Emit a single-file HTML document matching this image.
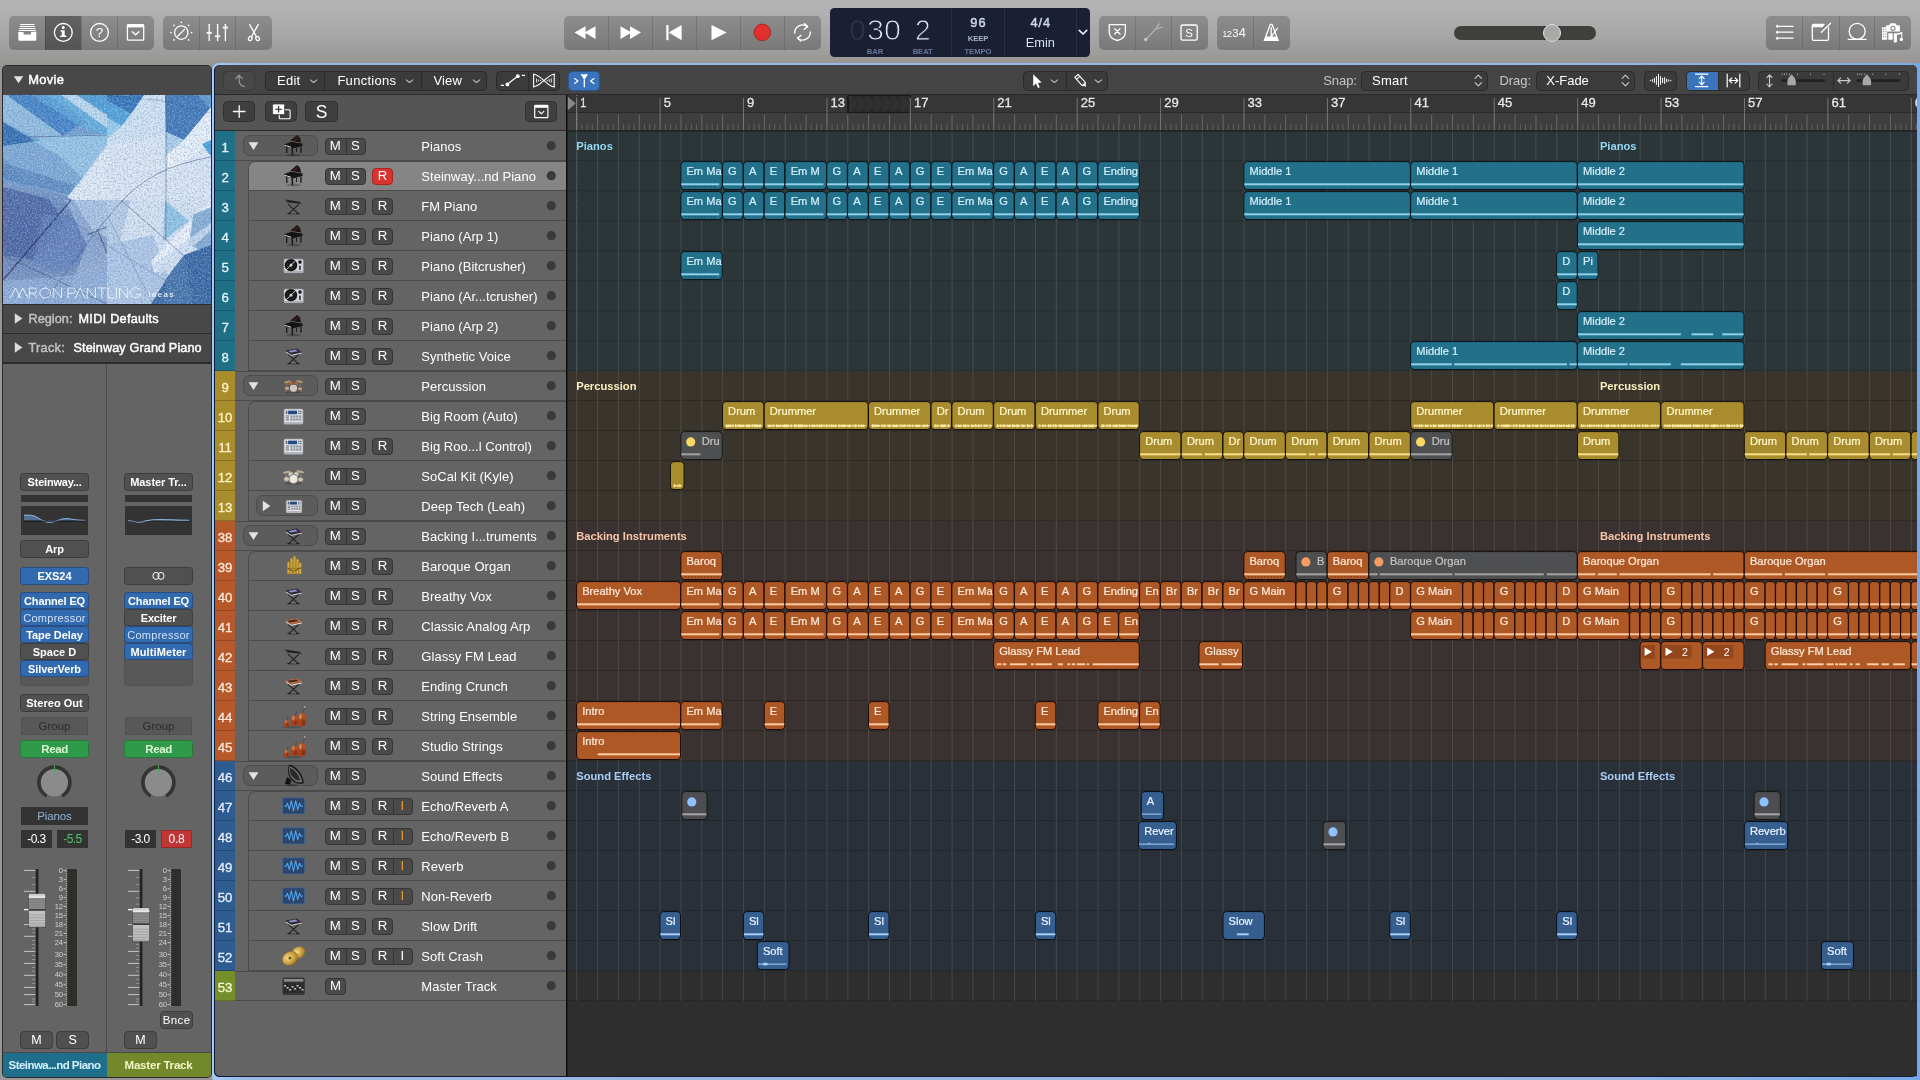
<!DOCTYPE html>
<html><head><meta charset="utf-8"><title>Logic Pro X</title>
<style>
html,body{margin:0;padding:0}
body{width:1920px;height:1080px;overflow:hidden;background:#979797;font-family:"Liberation Sans",sans-serif;position:relative;color:#fff}
div{position:absolute;box-sizing:border-box}
svg{display:block}
svg text{font-family:"Liberation Sans",sans-serif}
.tb{background:linear-gradient(#b3b3b3 0%,#b1b1b1 18%,#a6a6a6 58%,#9a9998 90%,#969695 100%)}
.grp{background:linear-gradient(rgba(0,0,0,.20),rgba(0,0,0,.235));border-radius:5px;overflow:hidden}
.sep{background:rgba(0,0,0,.13);width:1px;top:0;height:100%}
.dk{background:#3c3c3c;border:1px solid #2a2a2a;border-radius:4.5px}
.txt{white-space:nowrap;line-height:1}
</style></head>
<body>
<div style="left:0;top:0;width:1920px;height:1080px;will-change:transform">
<div class="tb" style="left:0;top:0;width:1920px;height:64px"></div>
<div class="grp" style="left:9px;top:16px;width:145px;height:33.5px;"><div class="sep" style="left:36px"></div><div style="left:36px;top:0;width:36px;height:100%;background:rgba(0,0,0,.30)"></div><div class="sep" style="left:72px"></div><div class="sep" style="left:108px"></div><svg style="position:absolute;left:0px;top:0px;overflow:visible" width="145" height="33.5" viewBox="0 0 145 33.5" ><g fill="#fff"><rect x="11.2" y="8" width="14.2" height="1"/><rect x="10.7" y="10" width="15.2" height="1"/><rect x="10.2" y="12" width="16.2" height="1"/><rect x="9.7" y="14" width="17.2" height="1"/><path d="M9.3 16 h5.2 v1.4 q0 1 1 1 h5.6 q1 0 1 -1 v-1.6 h5.2 v7.4 q0 1.5 -1.5 1.5 h-15 q-1.5 0 -1.5 -1.5 z"/></g><circle cx="54.3" cy="16.4" r="8.9" stroke="#fff" fill="none" stroke-width="1.3" stroke-linecap="round" stroke-linejoin="round" stroke-width="1.4"/><g fill="#fff"><circle cx="54.2" cy="11.6" r="1.5"/><path d="M51.6 14.3 h4.1 v5.2 h1.6 v1.5 h-6.1 v-1.5 h1.6 v-3.7 h-1.2 z"/></g><circle cx="90.5" cy="16.4" r="8.9" stroke="#fff" fill="none" stroke-width="1.3" stroke-linecap="round" stroke-linejoin="round" stroke-width="1.2"/><text x="90.5" y="21.2" font-size="13.5" fill="#fff" text-anchor="middle">?</text><rect x="118.4" y="8.6" width="16.3" height="15.6" rx="1" stroke="#fff" fill="none" stroke-width="1.3" stroke-linecap="round" stroke-linejoin="round" stroke-width="1.3"/><rect x="118.4" y="8.2" width="16.3" height="3.2" fill="#fff"/><path d="M123.3 15.7 l3.3 3 l3.3 -3" stroke="#fff" fill="none" stroke-width="1.3" stroke-linecap="round" stroke-linejoin="round" stroke-width="1.2"/></svg></div>
<div class="grp" style="left:163px;top:16px;width:109px;height:33.5px;"><div class="sep" style="left:36px"></div><div class="sep" style="left:72px"></div><svg style="position:absolute;left:0px;top:0px;overflow:visible" width="109" height="33.5" viewBox="0 0 109 33.5" ><circle cx="18.3" cy="16.6" r="6.7" stroke="#fff" fill="none" stroke-width="1.3" stroke-linecap="round" stroke-linejoin="round" stroke-width="1.2"/><path d="M14.700000000000001 20.200000000000003 L21.5 13.400000000000002" stroke="#fff" fill="none" stroke-width="1.3" stroke-linecap="round" stroke-linejoin="round" stroke-width="1.2"/><circle cx="18.30" cy="6.30" r="0.85" fill="#fff"/><circle cx="25.58" cy="9.32" r="0.85" fill="#fff"/><circle cx="28.60" cy="16.60" r="0.85" fill="#fff"/><circle cx="25.58" cy="23.88" r="0.85" fill="#fff"/><circle cx="11.02" cy="23.88" r="0.85" fill="#fff"/><circle cx="8.00" cy="16.60" r="0.85" fill="#fff"/><circle cx="11.02" cy="9.32" r="0.85" fill="#fff"/><path d="M46.2 8.3 V24.6" stroke="#fff" fill="none" stroke-width="1.3" stroke-linecap="round" stroke-linejoin="round" stroke-width="1.2"/><rect x="43.6" y="15.9" width="5.2" height="1.8" fill="#fff"/><path d="M54.6 8.3 V24.6" stroke="#fff" fill="none" stroke-width="1.3" stroke-linecap="round" stroke-linejoin="round" stroke-width="1.2"/><rect x="52.0" y="19.400000000000002" width="5.2" height="1.8" fill="#fff"/><path d="M62.4 8.3 V24.6" stroke="#fff" fill="none" stroke-width="1.3" stroke-linecap="round" stroke-linejoin="round" stroke-width="1.2"/><rect x="59.8" y="10.7" width="5.2" height="1.8" fill="#fff"/><path d="M86.7 8.6 L93.6 21 M95.2 8.6 L88.3 21" stroke="#fff" fill="none" stroke-width="1.3" stroke-linecap="round" stroke-linejoin="round" stroke-width="1.2"/><ellipse cx="87.3" cy="22.5" rx="1.7" ry="2.2" transform="rotate(25 87.3 22.5)" stroke="#fff" fill="none" stroke-width="1.3" stroke-linecap="round" stroke-linejoin="round" stroke-width="1.1"/><ellipse cx="94.6" cy="22.5" rx="1.7" ry="2.2" transform="rotate(-25 94.6 22.5)" stroke="#fff" fill="none" stroke-width="1.3" stroke-linecap="round" stroke-linejoin="round" stroke-width="1.1"/></svg></div>
<div class="grp" style="left:564px;top:16px;width:257px;height:33.5px;"><div class="sep" style="left:44px"></div><div class="sep" style="left:88px"></div><div class="sep" style="left:132px"></div><div class="sep" style="left:176px"></div><div class="sep" style="left:220px"></div><svg style="position:absolute;left:0px;top:0px;overflow:visible" width="257" height="33.5" viewBox="0 0 257 33.5" ><g fill="#fff"><path d="M21.5 10.3 V23 L10.5 16.6z M31.5 10.3 V23 L20.5 16.6z"/><path d="M56.5 10.3 V23 L67.5 16.6z M66 10.3 V23 L77 16.6z"/><rect x="102.3" y="9" width="2.2" height="15.2"/><path d="M117.6 9 V24.2 L104.8 16.6z"/><path d="M147.5 9 V24.2 L162.7 16.6z"/></g><circle cx="198.3" cy="16.4" r="8.3" fill="#e2302b" stroke="#a11f1c" stroke-width="0.8"/><path d="M230.7 17.2 a7.9 7.9 0 0 1 12.6 -6.6 M246.4 15.8 a7.9 7.9 0 0 1 -12.6 6.6" stroke="#fff" fill="none" stroke-width="1.3" stroke-linecap="round" stroke-linejoin="round" stroke-width="1.15"/><path d="M240.3 7.6 l3.4 3 l-3.6 2.6 M236.8 25 l-3.4 -3 l3.6 -2.6" stroke="#fff" fill="none" stroke-width="1.3" stroke-linecap="round" stroke-linejoin="round" stroke-width="1.15"/></svg></div>
<div style="left:830px;top:8px;width:260px;height:49px;background:#1b1f33;border-radius:4.5px;overflow:hidden"><div style="left:121px;top:1px;width:1px;height:47px;background:#2b3046"></div><div style="left:174px;top:1px;width:1px;height:47px;background:#2b3046"></div><div style="left:246px;top:1px;width:1px;height:47px;background:#2b3046"></div><svg style="position:absolute;left:0px;top:0px;overflow:visible" width="260" height="49" viewBox="0 0 260 49" ><text x="19.3" y="32.3" font-size="29.5" fill="#2b3044" textLength="16.5" lengthAdjust="spacingAndGlyphs" stroke="#1b1f33" stroke-width="1.1" paint-order="stroke">0</text><text x="37" y="32.3" font-size="29.5" fill="#dbe7f7" textLength="34" lengthAdjust="spacingAndGlyphs" stroke="#1b1f33" stroke-width="1.0" paint-order="fill stroke">30</text><text x="85" y="32.3" font-size="29.5" fill="#dbe7f7" textLength="15.6" lengthAdjust="spacingAndGlyphs" stroke="#1b1f33" stroke-width="1.0" paint-order="fill stroke">2</text><g font-size="7.6" font-weight="bold" fill="#67799c" text-anchor="middle"><text x="45" y="45.7">BAR</text><text x="92.7" y="45.7">BEAT</text><text x="148" y="45.7">TEMPO</text></g><text x="148" y="32.8" font-size="7.6" font-weight="bold" fill="#a9b8d2" text-anchor="middle">KEEP</text><text x="148.5" y="18.6" font-size="12.8" fill="#ccd9ee" stroke="#ccd9ee" stroke-width=".45" text-anchor="middle" letter-spacing="1.1">96</text><text x="210.8" y="18.6" font-size="12.8" fill="#ccd9ee" stroke="#ccd9ee" stroke-width=".45" text-anchor="middle" letter-spacing="1">4/4</text><text x="210.3" y="38.8" font-size="12.8" fill="#d4e0f2" text-anchor="middle">Emin</text><path d="M249.3 22.3 l3.7 3.7 l3.7 -3.7" stroke="#e6ecf7" stroke-width="1.7" fill="none" stroke-linecap="round" stroke-linejoin="round"/></svg></div>
<div class="grp" style="left:1099px;top:16px;width:109px;height:33.5px;"><div class="sep" style="left:36px"></div><div class="sep" style="left:72px"></div><svg style="position:absolute;left:0px;top:0px;overflow:visible" width="109" height="33.5" viewBox="0 0 109 33.5" ><path d="M10.2 8.7 h16.2 v7.4 q0 6.6 -8.1 8.4 q-8.1 -1.8 -8.1 -8.4z" stroke="#fff" fill="none" stroke-width="1.3" stroke-linecap="round" stroke-linejoin="round" stroke-width="1.2"/><path d="M15.6 12.6 l5.4 5.4 m0 -5.4 l-5.4 5.4" stroke="#fff" fill="none" stroke-width="1.3" stroke-linecap="round" stroke-linejoin="round" stroke-width="1.2"/><g stroke="#fff" stroke-opacity=".42" fill="none" stroke-width="1.2" stroke-linecap="round"><path d="M47.5 22.8 L56.6 13.2 M56.6 13.2 L60.3 7.9 M56.6 13.2 L63.2 11"/><circle cx="46.7" cy="23.6" r="1.2" fill="#fff" fill-opacity=".42"/></g><rect x="82" y="9" width="16.2" height="15.2" rx="1.6" stroke="#fff" fill="none" stroke-width="1.3" stroke-linecap="round" stroke-linejoin="round" stroke-width="1.2"/><text x="90.1" y="21" font-size="11.5" fill="#fff" text-anchor="middle">S</text></svg></div>
<div class="grp" style="left:1217px;top:16px;width:73px;height:33.5px;"><div class="sep" style="left:36px"></div><svg style="position:absolute;left:0px;top:0px;overflow:visible" width="73" height="33.5" viewBox="0 0 73 33.5" ><g fill="#fff"><text x="5.4" y="20.9" font-size="8.3">1</text><text x="9.8" y="20.9" font-size="9.6">2</text><text x="15.2" y="20.9" font-size="11.2">3</text><text x="21.8" y="20.9" font-size="12.8">4</text></g><path d="M47.3 24.4 L53.3 8.4 h1.8 L61.2 24.4z" stroke="#fff" fill="none" stroke-width="1.3" stroke-linecap="round" stroke-linejoin="round" stroke-width="1.15"/><path d="M48.9 20.4 h10.8 l1.5 4 h-13.9z" fill="#fff"/><path d="M54.2 20.3 V11.6 M54.4 20.3 L60.6 12.2" stroke="#fff" fill="none" stroke-width="1.3" stroke-linecap="round" stroke-linejoin="round" stroke-width="1.1"/></svg></div>
<div style="left:1454px;top:25.7px;width:142px;height:14.3px;background:#3f3f3c;border-radius:7.2px"></div>
<div style="left:1543px;top:23.7px;width:18.4px;height:18.4px;background:#a9a9a9;border-radius:50%;border:1.3px solid #e9e9e9;box-shadow:0 0 1px rgba(0,0,0,.5)"></div>
<div class="grp" style="left:1766px;top:16px;width:145px;height:33.5px;"><div class="sep" style="left:36.4px"></div><div class="sep" style="left:72.5px"></div><div class="sep" style="left:108.4px"></div><svg style="position:absolute;left:0px;top:0px;overflow:visible" width="145" height="33.5" viewBox="0 0 145 33.5" ><path d="M13 10.3 H27" stroke="#fff" fill="none" stroke-width="1.3" stroke-linecap="round" stroke-linejoin="round" stroke-width="1.25"/><path d="M11.3 8.600000000000001 l1.7 1.7 l-1.7 1.7 l-1.7 -1.7z" fill="#fff"/><path d="M13 16.2 H27" stroke="#fff" fill="none" stroke-width="1.3" stroke-linecap="round" stroke-linejoin="round" stroke-width="1.25"/><path d="M11.3 14.5 l1.7 1.7 l-1.7 1.7 l-1.7 -1.7z" fill="#fff"/><path d="M13 22.2 H27" stroke="#fff" fill="none" stroke-width="1.3" stroke-linecap="round" stroke-linejoin="round" stroke-width="1.25"/><path d="M11.3 20.5 l1.7 1.7 l-1.7 1.7 l-1.7 -1.7z" fill="#fff"/><path d="M62.5 11.5 V23 q0 1.3 -1.3 1.3 H47.6 q-1.3 0 -1.3 -1.3 V9.6 q0 -1.3 1.3 -1.3 H58" stroke="#fff" fill="none" stroke-width="1.3" stroke-linecap="round" stroke-linejoin="round" stroke-width="1.25"/><path d="M46.3 8.4 h12.4 l-2.2 2.8 h-10.2z" fill="#fff"/><path d="M55.4 16.2 L64.6 7.3" stroke="#fff" fill="none" stroke-width="1.3" stroke-linecap="round" stroke-linejoin="round" stroke-width="1.9"/><circle cx="91.2" cy="15.3" r="8" stroke="#fff" fill="none" stroke-width="1.3" stroke-linecap="round" stroke-linejoin="round" stroke-width="1.2"/><path d="M82.2 23.4 H100" stroke="#fff" fill="none" stroke-width="1.3" stroke-linecap="round" stroke-linejoin="round" stroke-width="1.2"/><g fill="#fff"><path d="M116 11.2 h5.2 v12.6 h-5.2z M122.3 17.3 h4.4 v6.5 h-4.4z M127.8 17.3 h2.6 v6.5 h-2.6z"/><path d="M121 9.3 h2.2 l1.4 -2 h4.7 l1.4 2 h2.2 q1 0 1 1 v5.2 h-13.9 v-5.2 q0 -1 1 -1z"/><circle cx="129.3" cy="25" r="1.7"/><circle cx="135.3" cy="23.4" r="1.7"/><path d="M130.1 17.5 l6.2 -1.5 v7.6 h-1 v-5.6 l-4.3 1.1 v6 h-0.9z"/></g><circle cx="126.9" cy="12.3" r="2.1" fill="none" stroke="#8a8a8a" stroke-width="1.1"/><g fill="#8a8a8a"><rect x="116.8" y="12.5" width="1" height="1.3"/><rect x="116.8" y="15" width="1" height="1.3"/><rect x="116.8" y="17.5" width="1" height="1.3"/><rect x="116.8" y="20" width="1" height="1.3"/><rect x="119.4" y="12.5" width="1" height="1.3"/><rect x="119.4" y="15" width="1" height="1.3"/><rect x="119.4" y="17.5" width="1" height="1.3"/><rect x="119.4" y="20" width="1" height="1.3"/></g></svg></div>
<div style="left:1.9px;top:64.6px;width:209.8px;height:1013px;background:#2a2a2a;border-radius:5px"></div>
<div style="left:3px;top:65.5px;width:208px;height:1011.5px;background:#646464;border-radius:4px;overflow:hidden"><div style="left:0;top:0;width:208px;height:29px;background:#484848"></div><div style="left:0;top:29px;width:208px;height:1px;background:#2b2b2b"></div><div style="left:0;top:238.5px;width:208px;height:59px;background:#484848"></div><div style="left:0;top:238.5px;width:208px;height:1px;background:#2b2b2b"></div><div style="left:0;top:267.7px;width:208px;height:1.3px;background:#2b2b2b"></div><div style="left:0;top:296.5px;width:208px;height:1.5px;background:#2b2b2b"></div><div style="left:103px;top:298px;width:1px;height:690px;background:#4c4c4c"></div><div style="left:0;top:987px;width:103.5px;height:25px;background:#1f6f8c"></div><div style="left:103.5px;top:987px;width:105px;height:25px;background:#72882a"></div><div style="left:0;top:986px;width:208px;height:1px;background:#4a4a4a"></div></div>
<svg style="position:absolute;left:13px;top:75px;overflow:visible" width="12" height="10" viewBox="0 0 12 10" ><path d="M0.8 1.3 h9.5 l-4.75 7z" fill="#e4e4e4"/></svg>
<div class="txt" style="left:28.30px;top:69.60px;height:20px;line-height:20px;font-size:12.9px;letter-spacing:0.278px;color:#fff;-webkit-text-stroke:.45px #fff;">Movie</div>
<svg style="position:absolute;left:3px;top:95px;overflow:visible" width="208" height="209" viewBox="0 0 208 209" style="position:absolute;left:3px;top:95px;overflow:hidden"><defs><filter id="mvn" x="0" y="0" width="100%" height="100%"><feTurbulence type="fractalNoise" baseFrequency="0.62" numOctaves="2" seed="4" result="n"/><feColorMatrix in="n" type="matrix" values="0 0 0 0 .93  0 0 0 0 .96  0 0 0 0 1  2.6 0 0 0 -1.1"/></filter><filter id="mvn2" x="0" y="0" width="100%" height="100%"><feTurbulence type="fractalNoise" baseFrequency="0.58" numOctaves="2" seed="11" result="n"/><feColorMatrix in="n" type="matrix" values="0 0 0 0 0.1  0 0 0 0 0.2  0 0 0 0 0.42  0 2.6 0 0 -1.12"/></filter><filter id="mvb" x="-5%" y="-5%" width="110%" height="110%"><feGaussianBlur stdDeviation="0.55"/></filter><linearGradient id="mvg1" x1="0" y1="0" x2="0" y2="1"><stop offset="0" stop-color="#7599c8"/><stop offset=".5" stop-color="#5a73ab"/><stop offset="1" stop-color="#8aa6d0"/></linearGradient><clipPath id="mvc"><rect width="208" height="209"/></clipPath></defs><g clip-path="url(#mvc)"><g filter="url(#mvb)"><rect width="208" height="209" fill="#dbe7f5"/><polygon points="0,0 104,0 104,50 78,85 62,105 0,105" fill="#6b9fd0" opacity="1"/><polygon points="0,0 16,0 64,40 40,47 0,27" fill="#8ebbdf" opacity="1"/><polygon points="0,27 32,46 0,51" fill="#2d6bb0" opacity="1"/><polygon points="4,0 32,0 76,30 60,41" fill="#3f80c4" opacity="1"/><polygon points="32,0 60,0 104,28 104,40 78,31" fill="#5fabdc" opacity="1"/><polygon points="28,0 44,0 84,27 76,31" fill="#4f98d4" opacity="0.8"/><polygon points="58,0 73,0 104,20 104,33" fill="#b9d9ef" opacity="1"/><polygon points="75,0 104,0 104,19" fill="#489ad6" opacity="1"/><polygon points="64,40 104,39 104,52 80,84 32,47" fill="#92c3e4" opacity="1"/><polygon points="32,47 58,62 80,84 62,105 40,105 0,62 0,51" fill="#7aa6d4" opacity="1"/><polygon points="0,62 40,105 0,105" fill="#6d95c8" opacity="1"/><polygon points="0,68 72,90 66,100 0,84" fill="#4f80bb" opacity="0.7"/><polygon points="104,50 104,105 62,105 79,84" fill="#dfeaf6" opacity="1"/><polygon points="104,0 141,0 128,19 104,6" fill="#2f72b9" opacity="1"/><polygon points="104,6 128,19 119,31 104,23" fill="#4b9fd9" opacity="1"/><polygon points="104,23 119,31 104,46" fill="#93cce9" opacity="1"/><polygon points="128,19 142,0 162,0 163,40 104,50 104,44 119,31" fill="#cfe3f3" opacity="1"/><polygon points="162,0 208,0 208,13 181,45 163,37" fill="#3b74b6" opacity="1"/><polygon points="195,0 208,0 208,14 200,6" fill="#5f93cd" opacity="1"/><polygon points="208,12 208,46 165,80 163,56 181,45" fill="#e9f1fa" opacity="1"/><polygon points="199,49 208,45 208,61" fill="#4a9dd6" opacity="1"/><polygon points="163,37 181,45 163,60" fill="#a7cde9" opacity="1"/><polygon points="0,86 58,99 70,105 106,105 106,209 0,209" fill="url(#mvg1)"/><polygon points="0,92 46,104 62,130 30,165 0,160" fill="#465e9e" opacity="0.85"/><polygon points="40,120 80,120 96,160 50,178 30,165" fill="#5f7dba" opacity="0.7"/><polygon points="70,105 104,105 104,142 90,136" fill="#adc6e5" opacity="1"/><polygon points="62,105 104,105 104,209 60,209 84,150" fill="#a5bfe0" opacity="0.6"/><polygon points="0,186 104,178 104,209 0,209" fill="#8dabd7" opacity="0.8"/><polygon points="104,105 208,105 208,150 180,160 165,181 148,209 104,209" fill="#d5e2f2" opacity="1"/><polygon points="104,150 150,140 165,181 148,209 104,209" fill="#9fbce0" opacity="0.75"/><polygon points="104,105 128,105 116,150 104,150" fill="#9db9dd" opacity="0.55"/><polygon points="162,105 186,126 160,146" fill="#8fc4e4" opacity="1"/><polygon points="208,105 208,128 152,178 148,166" fill="#eef4fb" opacity="0.9"/><polygon points="190,120 208,112 208,160 186,150" fill="#6a98c8" opacity="0.8"/><polygon points="181,160 208,150 208,209 148,209 165,181" fill="#33639f" opacity="1"/><polygon points="165,181 181,160 190,209 160,209" fill="#4676ad" opacity="0.7"/><polygon points="150,170 208,128 208,136 156,180" fill="#cfe0f2" opacity="0.8"/></g><g stroke="#1f3a66" fill="none" opacity=".6" stroke-width=".8"><path d="M25,42 L104,40"/><path d="M163,0 V146"/><path d="M208,62 Q150,72 120,105 T40,209"/><path d="M0,160 L104,209"/><path d="M104,0 L160,6 L208,18" opacity=".6"/><path d="M118,105 L180,160"/><path d="M104,120 L150,209" opacity=".6"/><path d="M40,105 L104,150" opacity=".6"/><path d="M104,150 L170,190" opacity=".6"/></g><path d="M68,105 L0,185" stroke="#1a2f5c" stroke-width="1.5" opacity=".75" fill="none"/><path d="M94,134 L104,158 M84,140 L104,132" stroke="#1a2f5c" stroke-width="1.2" opacity=".6" fill="none"/><rect width="208" height="209" filter="url(#mvn)" opacity=".36"/><rect width="208" height="209" filter="url(#mvn2)" opacity=".42"/><g stroke="#fff" stroke-width=".75" fill="none" stroke-linecap="round" stroke-linejoin="round" opacity=".95"><path d="M7.5,203 L11.7,193 L15.9,203M13.7,203 L17.9,193 L22.1,203M23.5,203 V193 H27.1 a2.6 2.6 0 0 1 0 5.2 H23.5 M26.9,198.2 L30.1,203M37.1,193 a4.6 5 0 1 0 .01 0zM43.9,203 V193 L50.9,203 V193M56.4,203 V193 H60.199999999999996 a2.7 2.7 0 0 1 0 5.4 H56.4M62.6,203 L66.8,193 L71.0,203M72.8,203 V193 L79.8,203 V193M81.39999999999999,193 H88.99999999999999 M85.19999999999999,193 V203M90.6,193 V203 H96.0M97.6,193 V203M100.19999999999999,203 V193 L107.19999999999999,203 V193M117.99999999999999,195 a4.7 5 0 1 0 .6 4.2 h-4" transform="translate(7.5 0) scale(1.175 1) translate(-7.5 0)"/></g><text x="145.5" y="202.4" font-size="8" fill="#fff" textLength="25" lengthAdjust="spacing">ideas</text></g></svg>
<svg style="position:absolute;left:14px;top:312px;overflow:visible" width="10" height="14" viewBox="0 0 10 14" ><path d="M.8 1.2 v10.6 l7.6 -5.3z" fill="#dcdcdc"/></svg>
<svg style="position:absolute;left:14px;top:341px;overflow:visible" width="10" height="14" viewBox="0 0 10 14" ><path d="M.8 1.2 v10.6 l7.6 -5.3z" fill="#dcdcdc"/></svg>
<div class="txt" style="left:28.50px;top:308.60px;height:20px;line-height:20px;font-size:12.7px;letter-spacing:0.033px;color:#c2c2c2;-webkit-text-stroke:.45px #c2c2c2;">Region:</div>
<div class="txt" style="left:78.50px;top:308.60px;height:20px;line-height:20px;font-size:12.7px;letter-spacing:0.275px;color:#fff;-webkit-text-stroke:.45px #fff;">MIDI Defaults</div>
<div class="txt" style="left:28.50px;top:337.60px;height:20px;line-height:20px;font-size:12.7px;letter-spacing:0.282px;color:#c2c2c2;-webkit-text-stroke:.45px #c2c2c2;">Track:</div>
<div class="txt" style="left:73.50px;top:337.60px;height:20px;line-height:20px;font-size:12.7px;letter-spacing:0.102px;color:#fff;-webkit-text-stroke:.45px #fff;">Steinway Grand Piano</div>
<div style="left:20px;top:473px;width:69px;height:18.3px;background:#505050;border:1px solid #3d3d3d;border-radius:3.2px"></div><div class="txt" style="left:27.50px;top:472.35px;height:20px;line-height:20px;font-size:11px;font-weight:bold;letter-spacing:-0.185px;color:#fff;">Steinway...</div>
<div style="left:21px;top:495px;width:67px;height:7px;background:#333"></div>
<div style="left:21px;top:506px;width:67px;height:29px;background:#333"></div>
<div style="left:124px;top:473px;width:69px;height:18.3px;background:#505050;border:1px solid #3d3d3d;border-radius:3.2px"></div><div class="txt" style="left:130.25px;top:472.35px;height:20px;line-height:20px;font-size:11px;font-weight:bold;letter-spacing:-0.081px;color:#fff;">Master Tr...</div>
<div style="left:125px;top:495px;width:67px;height:7px;background:#333"></div>
<div style="left:125px;top:506px;width:67px;height:29px;background:#333"></div>
<svg style="position:absolute;left:21px;top:506px;overflow:visible" width="67" height="29" viewBox="0 0 67 29" ><path d="M3 9.2 C9 9 12 9 16 11.3 C21 14.2 24 16.6 29.5 16.4 C36 16 40 12 46 12.6 C52 13.2 56 14.3 64 14.3 L64 14.6 L3 14.6z" fill="#5f86b4" opacity=".75"/><path d="M3 9.2 C9 9 12 9 16 11.3 C21 14.2 24 16.6 29.5 16.4 C36 16 40 12 46 12.6 C52 13.2 56 14.3 64 14.3" stroke="#8db2dc" stroke-width="1" fill="none"/><path d="M3 15.2 H64" stroke="#111" stroke-width=".8"/></svg>
<svg style="position:absolute;left:125px;top:506px;overflow:visible" width="67" height="29" viewBox="0 0 67 29" ><path d="M3 14.7 C8 14.7 10 16.2 14 16.2 C19 16.2 21 14 28 13.7 C40 13.2 50 14.2 64 14.2" stroke="#8db2dc" stroke-width="1.1" fill="none"/><path d="M3 15.4 H64" stroke="#111" stroke-width=".6" opacity=".6"/></svg>
<div style="left:20px;top:540.4px;width:69px;height:17.6px;background:#505050;border:1px solid #3d3d3d;border-radius:3.2px"></div><div class="txt" style="left:45.25px;top:539.40px;height:20px;line-height:20px;font-size:11px;font-weight:bold;letter-spacing:-0.148px;color:#fff;">Arp</div>
<div style="left:20px;top:567.3px;width:69px;height:17.6px;background:#326aaf;border:1px solid #284d84;border-radius:3.2px"></div><div class="txt" style="left:37.50px;top:566.30px;height:20px;line-height:20px;font-size:11px;font-weight:bold;letter-spacing:-0.049px;color:#fff;">EXS24</div>
<div style="left:124px;top:567.3px;width:69px;height:17.6px;background:#505050;border:1px solid #3d3d3d;border-radius:3.2px"></div>
<svg style="position:absolute;left:124px;top:567.3px;overflow:visible" width="69" height="17.6" viewBox="0 0 69 17.6" ><ellipse cx="32" cy="8.9" rx="3.1" ry="3.5" stroke="#fff" stroke-width="1" fill="none"/><ellipse cx="37" cy="8.9" rx="3.1" ry="3.5" stroke="#fff" stroke-width="1" fill="none"/></svg>
<div style="left:20px;top:592px;width:69px;height:94px;background:#585858;border:1px solid #525252;border-radius:3.5px"></div>
<div style="left:124px;top:592px;width:69px;height:94px;background:#585858;border:1px solid #525252;border-radius:3.5px"></div>
<div style="left:20px;top:592.3px;width:69px;height:17.2px;background:#326aaf;border:1px solid #284d84;border-radius:3.5px"></div><div class="txt" style="left:24.00px;top:591.10px;height:20px;line-height:20px;font-size:11px;font-weight:bold;letter-spacing:-0.134px;color:#fff;">Channel EQ</div>
<div style="left:20px;top:609.3px;width:69px;height:17.2px;background:#326aaf;border:1px solid #284d84;border-radius:3.5px"></div><div class="txt" style="left:23.25px;top:608.10px;height:20px;line-height:20px;font-size:11px;letter-spacing:0.260px;color:#cfe1f7;">Compressor</div>
<div style="left:20px;top:626.3px;width:69px;height:17.2px;background:#326aaf;border:1px solid #284d84;border-radius:3.5px"></div><div class="txt" style="left:26.25px;top:625.10px;height:20px;line-height:20px;font-size:11px;font-weight:bold;letter-spacing:-0.076px;color:#fff;">Tape Delay</div>
<div style="left:20px;top:643.3px;width:69px;height:17.2px;background:#505050;border:1px solid #3d3d3d;border-radius:3.5px"></div><div class="txt" style="left:32.75px;top:642.10px;height:20px;line-height:20px;font-size:11px;font-weight:bold;letter-spacing:0.013px;color:#fff;">Space D</div>
<div style="left:20px;top:660.3px;width:69px;height:17.2px;background:#326aaf;border:1px solid #284d84;border-radius:3.5px"></div><div class="txt" style="left:28.00px;top:659.10px;height:20px;line-height:20px;font-size:11px;font-weight:bold;letter-spacing:-0.081px;color:#fff;">SilverVerb</div>
<div style="left:124px;top:592.3px;width:69px;height:17.2px;background:#326aaf;border:1px solid #284d84;border-radius:3.5px"></div><div class="txt" style="left:128.00px;top:591.10px;height:20px;line-height:20px;font-size:11px;font-weight:bold;letter-spacing:-0.134px;color:#fff;">Channel EQ</div>
<div style="left:124px;top:609.3px;width:69px;height:17.2px;background:#505050;border:1px solid #3d3d3d;border-radius:3.5px"></div><div class="txt" style="left:140.75px;top:608.10px;height:20px;line-height:20px;font-size:11px;font-weight:bold;letter-spacing:-0.170px;color:#fff;">Exciter</div>
<div style="left:124px;top:626.3px;width:69px;height:17.2px;background:#326aaf;border:1px solid #284d84;border-radius:3.5px"></div><div class="txt" style="left:127.25px;top:625.10px;height:20px;line-height:20px;font-size:11px;letter-spacing:0.260px;color:#cfe1f7;">Compressor</div>
<div style="left:124px;top:643.3px;width:69px;height:17.2px;background:#326aaf;border:1px solid #284d84;border-radius:3.5px"></div><div class="txt" style="left:130.50px;top:642.10px;height:20px;line-height:20px;font-size:11px;font-weight:bold;letter-spacing:0.100px;color:#fff;">MultiMeter</div>
<div style="left:20px;top:694px;width:69px;height:17.6px;background:#505050;border:1px solid #3d3d3d;border-radius:3.2px"></div><div class="txt" style="left:26.25px;top:693.00px;height:20px;line-height:20px;font-size:11px;font-weight:bold;letter-spacing:0.027px;color:#fff;">Stereo Out</div>
<div style="left:21px;top:717px;width:67px;height:17.6px;background:#585858;border:1px solid #505050;border-radius:0px"></div><div class="txt" style="left:38.50px;top:716.00px;height:20px;line-height:20px;font-size:11.5px;letter-spacing:0.008px;color:#2b2b2b;">Group</div>
<div style="left:20px;top:740.4px;width:69px;height:17.2px;background:#2f9a4a;border:1px solid #257a3a;border-radius:3.2px"></div><div class="txt" style="left:41.25px;top:739.20px;height:20px;line-height:20px;font-size:11.5px;font-weight:bold;letter-spacing:-0.405px;color:#dbf6d0;">Read</div>
<div style="left:125px;top:717px;width:67px;height:17.6px;background:#585858;border:1px solid #505050;border-radius:0px"></div><div class="txt" style="left:142.50px;top:716.00px;height:20px;line-height:20px;font-size:11.5px;letter-spacing:0.008px;color:#2b2b2b;">Group</div>
<div style="left:124px;top:740.4px;width:69px;height:17.2px;background:#2f9a4a;border:1px solid #257a3a;border-radius:3.2px"></div><div class="txt" style="left:145.25px;top:739.20px;height:20px;line-height:20px;font-size:11.5px;font-weight:bold;letter-spacing:-0.405px;color:#dbf6d0;">Read</div>
<svg style="position:absolute;left:0px;top:0px;overflow:visible" width="212" height="1080" viewBox="0 0 212 1080" style="position:absolute;left:0;top:0;pointer-events:none"><circle cx="54.4" cy="782.6" r="14" fill="#8b8b8b"/><path d="M46.65 796.02 A15.5 15.5 0 1 1 62.15 796.02" stroke="#343434" stroke-width="3.7" fill="none"/><path d="M54.4 765.3000000000001 V773.1" stroke="#3fae57" stroke-width="1"/><circle cx="158.4" cy="782.6" r="14" fill="#8b8b8b"/><path d="M150.65 796.02 A15.5 15.5 0 1 1 166.15 796.02" stroke="#343434" stroke-width="3.7" fill="none"/><path d="M158.4 765.3000000000001 V773.1" stroke="#3fae57" stroke-width="1"/></svg>
<div style="left:21px;top:807px;width:67px;height:17.8px;background:#333;border-radius:0px"></div><div class="txt" style="left:37.25px;top:806.10px;height:20px;line-height:20px;font-size:11.5px;letter-spacing:-0.110px;color:#8fb3d6;">Pianos</div>
<div style="left:21px;top:830px;width:31px;height:17.8px;background:#333;border-radius:0px"></div><div class="txt" style="left:27.25px;top:829.10px;height:20px;line-height:20px;font-size:12px;letter-spacing:-0.544px;color:#fff;">-0.3</div>
<div style="left:57px;top:830px;width:31px;height:17.8px;background:#333;border-radius:0px"></div><div class="txt" style="left:63.25px;top:829.10px;height:20px;line-height:20px;font-size:12px;letter-spacing:-0.544px;color:#52c268;">-5.5</div>
<div style="left:125px;top:830px;width:31px;height:17.8px;background:#333;border-radius:0px"></div><div class="txt" style="left:131.25px;top:829.10px;height:20px;line-height:20px;font-size:12px;letter-spacing:-0.544px;color:#fff;">-3.0</div>
<div style="left:161px;top:830px;width:31px;height:17.8px;background:#c23535;border:1px solid #9a2828;border-radius:0px"></div><div class="txt" style="left:168.50px;top:829.10px;height:20px;line-height:20px;font-size:12px;letter-spacing:-0.227px;color:#fff;">0.8</div>
<svg style="position:absolute;left:0px;top:0px;overflow:visible" width="212" height="1080" viewBox="0 0 212 1080" style="position:absolute;left:0;top:0"><defs><linearGradient id="fcap" x1="0" y1="0" x2="0" y2="1"><stop offset="0" stop-color="#c9c9c9"/><stop offset=".1" stop-color="#dcdcdc"/><stop offset=".14" stop-color="#8a8a8a"/><stop offset=".46" stop-color="#8e8e8e"/><stop offset=".5" stop-color="#c2c2c2"/><stop offset=".9" stop-color="#bdbdbd"/><stop offset="1" stop-color="#9a9a9a"/></linearGradient></defs><rect x="35.8" y="869" width="2.6" height="137" fill="#222"/><rect x="24" y="869.9" width="11.3" height="1" fill="#c4c4c4"/><rect x="24" y="890.8" width="11.3" height="1" fill="#c4c4c4"/><rect x="24" y="908.95" width="11.3" height="1.3" fill="#fff"/><rect x="24" y="924.1" width="11.3" height="1" fill="#c4c4c4"/><rect x="24" y="935.8" width="11.3" height="1" fill="#c4c4c4"/><rect x="24" y="950.9" width="11.3" height="1" fill="#c4c4c4"/><rect x="24" y="962.9" width="11.3" height="1" fill="#c4c4c4"/><rect x="24" y="974.8" width="11.3" height="1" fill="#c4c4c4"/><rect x="24" y="986.9" width="11.3" height="1" fill="#c4c4c4"/><rect x="24" y="994.1" width="11.3" height="1" fill="#c4c4c4"/><rect x="24" y="1004.1" width="11.3" height="1" fill="#c4c4c4"/><rect x="32" y="877.1" width="3.3" height=".9" fill="#9a9a9a"/><rect x="32" y="884.0" width="3.3" height=".9" fill="#9a9a9a"/><rect x="32" y="897.6" width="3.3" height=".9" fill="#9a9a9a"/><rect x="32" y="903.6" width="3.3" height=".9" fill="#9a9a9a"/><rect x="32" y="914.6" width="3.3" height=".9" fill="#9a9a9a"/><rect x="32" y="919.4" width="3.3" height=".9" fill="#9a9a9a"/><rect x="32" y="928.6" width="3.3" height=".9" fill="#9a9a9a"/><rect x="32" y="932.4" width="3.3" height=".9" fill="#9a9a9a"/><rect x="32" y="940.1" width="3.3" height=".9" fill="#9a9a9a"/><rect x="32" y="943.9" width="3.3" height=".9" fill="#9a9a9a"/><rect x="32" y="947.6" width="3.3" height=".9" fill="#9a9a9a"/><rect x="32" y="955.1" width="3.3" height=".9" fill="#9a9a9a"/><rect x="32" y="959.1" width="3.3" height=".9" fill="#9a9a9a"/><rect x="32" y="966.9" width="3.3" height=".9" fill="#9a9a9a"/><rect x="32" y="970.8000000000001" width="3.3" height=".9" fill="#9a9a9a"/><rect x="32" y="978.9" width="3.3" height=".9" fill="#9a9a9a"/><rect x="32" y="982.9" width="3.3" height=".9" fill="#9a9a9a"/><rect x="32" y="998.6" width="3.3" height=".9" fill="#9a9a9a"/><rect x="32" y="1001.3000000000001" width="3.3" height=".9" fill="#9a9a9a"/><rect x="67.3" y="869" width="9.7" height="137" fill="#2e2f2b"/><path d="M66.3 869 V1006" stroke="#c9c9c9" stroke-width=".9" stroke-dasharray=".9 1.1"/><text x="62.7" y="873.3000000000001" font-size="7.6" fill="#d2d2d2" text-anchor="end" letter-spacing="-.2">0</text><rect x="63.6" y="870.2" width="2.4" height=".9" fill="#c9c9c9"/><text x="62.7" y="882.3000000000001" font-size="7.6" fill="#d2d2d2" text-anchor="end" letter-spacing="-.2">3</text><rect x="63.6" y="879.2" width="2.4" height=".9" fill="#c9c9c9"/><text x="62.7" y="891.3000000000001" font-size="7.6" fill="#d2d2d2" text-anchor="end" letter-spacing="-.2">6</text><rect x="63.6" y="888.2" width="2.4" height=".9" fill="#c9c9c9"/><text x="62.7" y="900.3000000000001" font-size="7.6" fill="#d2d2d2" text-anchor="end" letter-spacing="-.2">9</text><rect x="63.6" y="897.2" width="2.4" height=".9" fill="#c9c9c9"/><text x="62.7" y="909.2" font-size="7.6" fill="#d2d2d2" text-anchor="end" letter-spacing="-.2">12</text><rect x="63.6" y="906.1" width="2.4" height=".9" fill="#c9c9c9"/><text x="62.7" y="918.3000000000001" font-size="7.6" fill="#d2d2d2" text-anchor="end" letter-spacing="-.2">15</text><rect x="63.6" y="915.2" width="2.4" height=".9" fill="#c9c9c9"/><text x="62.7" y="927.2" font-size="7.6" fill="#d2d2d2" text-anchor="end" letter-spacing="-.2">18</text><rect x="63.6" y="924.1" width="2.4" height=".9" fill="#c9c9c9"/><text x="62.7" y="936.2" font-size="7.6" fill="#d2d2d2" text-anchor="end" letter-spacing="-.2">21</text><rect x="63.6" y="933.1" width="2.4" height=".9" fill="#c9c9c9"/><text x="62.7" y="945.3000000000001" font-size="7.6" fill="#d2d2d2" text-anchor="end" letter-spacing="-.2">24</text><rect x="63.6" y="942.2" width="2.4" height=".9" fill="#c9c9c9"/><text x="62.7" y="957.1" font-size="7.6" fill="#d2d2d2" text-anchor="end" letter-spacing="-.2">30</text><rect x="63.6" y="954.0" width="2.4" height=".9" fill="#c9c9c9"/><text x="62.7" y="967.3000000000001" font-size="7.6" fill="#d2d2d2" text-anchor="end" letter-spacing="-.2">35</text><rect x="63.6" y="964.2" width="2.4" height=".9" fill="#c9c9c9"/><text x="62.7" y="977.4000000000001" font-size="7.6" fill="#d2d2d2" text-anchor="end" letter-spacing="-.2">40</text><rect x="63.6" y="974.3000000000001" width="2.4" height=".9" fill="#c9c9c9"/><text x="62.7" y="987.4000000000001" font-size="7.6" fill="#d2d2d2" text-anchor="end" letter-spacing="-.2">45</text><rect x="63.6" y="984.3000000000001" width="2.4" height=".9" fill="#c9c9c9"/><text x="62.7" y="997.4000000000001" font-size="7.6" fill="#d2d2d2" text-anchor="end" letter-spacing="-.2">50</text><rect x="63.6" y="994.3000000000001" width="2.4" height=".9" fill="#c9c9c9"/><text x="62.7" y="1007.3000000000001" font-size="7.6" fill="#d2d2d2" text-anchor="end" letter-spacing="-.2">60</text><rect x="63.6" y="1004.2" width="2.4" height=".9" fill="#c9c9c9"/><rect x="28.2" y="893.5" width="17.7" height="34.6" rx="1.6" fill="#000" opacity=".35"/><rect x="28.8" y="893.8" width="16.5" height="33.5" rx="1.3" fill="url(#fcap)"/><rect x="28.8" y="899.4" width="16.5" height="1" fill="#6f6f6f" opacity=".55"/><rect x="28.8" y="914.5" width="16.5" height="1" fill="#8a8a8a" opacity=".5"/><rect x="28.8" y="902.0" width="16.5" height="1" fill="#6f6f6f" opacity=".55"/><rect x="28.8" y="917.2" width="16.5" height="1" fill="#8a8a8a" opacity=".5"/><rect x="28.8" y="904.6" width="16.5" height="1" fill="#6f6f6f" opacity=".55"/><rect x="28.8" y="919.9" width="16.5" height="1" fill="#8a8a8a" opacity=".5"/><rect x="28.8" y="907.2" width="16.5" height="1" fill="#6f6f6f" opacity=".55"/><rect x="28.8" y="922.6" width="16.5" height="1" fill="#8a8a8a" opacity=".5"/><rect x="28.8" y="909.1999999999999" width="16.5" height="1.5" fill="#2c2c2c"/><rect x="28.8" y="896.4" width="16.5" height="1.4" fill="#e9e9e9"/><rect x="139.8" y="869" width="2.6" height="137" fill="#222"/><rect x="128" y="869.9" width="11.3" height="1" fill="#c4c4c4"/><rect x="128" y="890.8" width="11.3" height="1" fill="#c4c4c4"/><rect x="128" y="908.95" width="11.3" height="1.3" fill="#fff"/><rect x="128" y="924.1" width="11.3" height="1" fill="#c4c4c4"/><rect x="128" y="935.8" width="11.3" height="1" fill="#c4c4c4"/><rect x="128" y="950.9" width="11.3" height="1" fill="#c4c4c4"/><rect x="128" y="962.9" width="11.3" height="1" fill="#c4c4c4"/><rect x="128" y="974.8" width="11.3" height="1" fill="#c4c4c4"/><rect x="128" y="986.9" width="11.3" height="1" fill="#c4c4c4"/><rect x="128" y="994.1" width="11.3" height="1" fill="#c4c4c4"/><rect x="128" y="1004.1" width="11.3" height="1" fill="#c4c4c4"/><rect x="136" y="877.1" width="3.3" height=".9" fill="#9a9a9a"/><rect x="136" y="884.0" width="3.3" height=".9" fill="#9a9a9a"/><rect x="136" y="897.6" width="3.3" height=".9" fill="#9a9a9a"/><rect x="136" y="903.6" width="3.3" height=".9" fill="#9a9a9a"/><rect x="136" y="914.6" width="3.3" height=".9" fill="#9a9a9a"/><rect x="136" y="919.4" width="3.3" height=".9" fill="#9a9a9a"/><rect x="136" y="928.6" width="3.3" height=".9" fill="#9a9a9a"/><rect x="136" y="932.4" width="3.3" height=".9" fill="#9a9a9a"/><rect x="136" y="940.1" width="3.3" height=".9" fill="#9a9a9a"/><rect x="136" y="943.9" width="3.3" height=".9" fill="#9a9a9a"/><rect x="136" y="947.6" width="3.3" height=".9" fill="#9a9a9a"/><rect x="136" y="955.1" width="3.3" height=".9" fill="#9a9a9a"/><rect x="136" y="959.1" width="3.3" height=".9" fill="#9a9a9a"/><rect x="136" y="966.9" width="3.3" height=".9" fill="#9a9a9a"/><rect x="136" y="970.8000000000001" width="3.3" height=".9" fill="#9a9a9a"/><rect x="136" y="978.9" width="3.3" height=".9" fill="#9a9a9a"/><rect x="136" y="982.9" width="3.3" height=".9" fill="#9a9a9a"/><rect x="136" y="998.6" width="3.3" height=".9" fill="#9a9a9a"/><rect x="136" y="1001.3000000000001" width="3.3" height=".9" fill="#9a9a9a"/><rect x="171.3" y="869" width="9.7" height="137" fill="#2e2f2b"/><path d="M170.3 869 V1006" stroke="#c9c9c9" stroke-width=".9" stroke-dasharray=".9 1.1"/><text x="166.7" y="873.3000000000001" font-size="7.6" fill="#d2d2d2" text-anchor="end" letter-spacing="-.2">0</text><rect x="167.6" y="870.2" width="2.4" height=".9" fill="#c9c9c9"/><text x="166.7" y="882.3000000000001" font-size="7.6" fill="#d2d2d2" text-anchor="end" letter-spacing="-.2">3</text><rect x="167.6" y="879.2" width="2.4" height=".9" fill="#c9c9c9"/><text x="166.7" y="891.3000000000001" font-size="7.6" fill="#d2d2d2" text-anchor="end" letter-spacing="-.2">6</text><rect x="167.6" y="888.2" width="2.4" height=".9" fill="#c9c9c9"/><text x="166.7" y="900.3000000000001" font-size="7.6" fill="#d2d2d2" text-anchor="end" letter-spacing="-.2">9</text><rect x="167.6" y="897.2" width="2.4" height=".9" fill="#c9c9c9"/><text x="166.7" y="909.2" font-size="7.6" fill="#d2d2d2" text-anchor="end" letter-spacing="-.2">12</text><rect x="167.6" y="906.1" width="2.4" height=".9" fill="#c9c9c9"/><text x="166.7" y="918.3000000000001" font-size="7.6" fill="#d2d2d2" text-anchor="end" letter-spacing="-.2">15</text><rect x="167.6" y="915.2" width="2.4" height=".9" fill="#c9c9c9"/><text x="166.7" y="927.2" font-size="7.6" fill="#d2d2d2" text-anchor="end" letter-spacing="-.2">18</text><rect x="167.6" y="924.1" width="2.4" height=".9" fill="#c9c9c9"/><text x="166.7" y="936.2" font-size="7.6" fill="#d2d2d2" text-anchor="end" letter-spacing="-.2">21</text><rect x="167.6" y="933.1" width="2.4" height=".9" fill="#c9c9c9"/><text x="166.7" y="945.3000000000001" font-size="7.6" fill="#d2d2d2" text-anchor="end" letter-spacing="-.2">24</text><rect x="167.6" y="942.2" width="2.4" height=".9" fill="#c9c9c9"/><text x="166.7" y="957.1" font-size="7.6" fill="#d2d2d2" text-anchor="end" letter-spacing="-.2">30</text><rect x="167.6" y="954.0" width="2.4" height=".9" fill="#c9c9c9"/><text x="166.7" y="967.3000000000001" font-size="7.6" fill="#d2d2d2" text-anchor="end" letter-spacing="-.2">35</text><rect x="167.6" y="964.2" width="2.4" height=".9" fill="#c9c9c9"/><text x="166.7" y="977.4000000000001" font-size="7.6" fill="#d2d2d2" text-anchor="end" letter-spacing="-.2">40</text><rect x="167.6" y="974.3000000000001" width="2.4" height=".9" fill="#c9c9c9"/><text x="166.7" y="987.4000000000001" font-size="7.6" fill="#d2d2d2" text-anchor="end" letter-spacing="-.2">45</text><rect x="167.6" y="984.3000000000001" width="2.4" height=".9" fill="#c9c9c9"/><text x="166.7" y="997.4000000000001" font-size="7.6" fill="#d2d2d2" text-anchor="end" letter-spacing="-.2">50</text><rect x="167.6" y="994.3000000000001" width="2.4" height=".9" fill="#c9c9c9"/><text x="166.7" y="1007.3000000000001" font-size="7.6" fill="#d2d2d2" text-anchor="end" letter-spacing="-.2">60</text><rect x="167.6" y="1004.2" width="2.4" height=".9" fill="#c9c9c9"/><rect x="132.20000000000002" y="907.7" width="17.7" height="34.6" rx="1.6" fill="#000" opacity=".35"/><rect x="132.8" y="908" width="16.5" height="33.5" rx="1.3" fill="url(#fcap)"/><rect x="132.8" y="913.6" width="16.5" height="1" fill="#6f6f6f" opacity=".55"/><rect x="132.8" y="928.7" width="16.5" height="1" fill="#8a8a8a" opacity=".5"/><rect x="132.8" y="916.2" width="16.5" height="1" fill="#6f6f6f" opacity=".55"/><rect x="132.8" y="931.4" width="16.5" height="1" fill="#8a8a8a" opacity=".5"/><rect x="132.8" y="918.8" width="16.5" height="1" fill="#6f6f6f" opacity=".55"/><rect x="132.8" y="934.1" width="16.5" height="1" fill="#8a8a8a" opacity=".5"/><rect x="132.8" y="921.4" width="16.5" height="1" fill="#6f6f6f" opacity=".55"/><rect x="132.8" y="936.8" width="16.5" height="1" fill="#8a8a8a" opacity=".5"/><rect x="132.8" y="923.4" width="16.5" height="1.5" fill="#2c2c2c"/><rect x="132.8" y="910.6" width="16.5" height="1.4" fill="#e9e9e9"/></svg>
<div style="left:160.4px;top:1011px;width:32.4px;height:17.6px;background:#505050;border:1px solid #3d3d3d;border-radius:4px"></div><div class="txt" style="left:162.85px;top:1010.00px;height:20px;line-height:20px;font-size:11.5px;letter-spacing:0.322px;color:#fff;">Bnce</div>
<div style="left:20px;top:1031px;width:32.8px;height:17.6px;background:#505050;border:1px solid #3d3d3d;border-radius:4px"></div><div class="txt" style="left:31.19px;top:1030.00px;height:20px;line-height:20px;font-size:12.5px;color:#fff;">M</div>
<div style="left:56.2px;top:1031px;width:32.8px;height:17.6px;background:#505050;border:1px solid #3d3d3d;border-radius:4px"></div><div class="txt" style="left:68.43px;top:1030.00px;height:20px;line-height:20px;font-size:12.5px;color:#fff;">S</div>
<div style="left:124px;top:1031px;width:32.8px;height:17.6px;background:#505050;border:1px solid #3d3d3d;border-radius:4px"></div><div class="txt" style="left:135.19px;top:1030.00px;height:20px;line-height:20px;font-size:12.5px;color:#fff;">M</div>
<div class="txt" style="left:8.50px;top:1054.80px;height:20px;line-height:20px;font-size:11.5px;font-weight:bold;letter-spacing:-0.533px;color:#d6f1ff;">Steinwa...nd Piano</div>
<div class="txt" style="left:124.50px;top:1054.80px;height:20px;line-height:20px;font-size:11.5px;font-weight:bold;letter-spacing:-0.193px;color:#f3f6c6;">Master Track</div>
<div style="left:212px;top:62.6px;width:1711px;height:1020px;background:linear-gradient(90deg,#a3cbf8 0%,#9ab8e6 2%,#97b5e4 80%,#7aaaea 99%,#74a8ea 100%);border-radius:7px"></div>
<div style="left:214.4px;top:64.6px;width:1703px;height:1012.2px;background:#101a30;border-radius:5.5px"></div>
<div style="left:215px;top:65.3px;width:1702px;height:1011px;background:#444;border-radius:5px;overflow:hidden"><div style="left:0;top:28.9px;width:1702px;height:1.3px;background:#2a2a2a"></div><div style="left:0;top:30.2px;width:351.3px;height:35px;background:#555"></div><div style="left:0;top:65.2px;width:351.3px;height:950px;background:#646464"></div><div style="left:0;top:64.9px;width:351.3px;height:1.1px;background:#2b2b2b"></div><div style="left:351px;top:30px;width:1.5px;height:990px;background:#0b0b0b"></div></div>
<div style="left:223px;top:70.5px;width:32.3px;height:20px;background:#484848;border:1px solid #3a3a3a;border-radius:4.5px"></div><svg style="position:absolute;left:223px;top:70.5px;overflow:visible" width="32" height="20" viewBox="0 0 32 20" ><path d="M16 4.4 C16 11 16 14.6 21.2 15.6 M12.8 7.6 L16 4.2 L19.2 7.6" stroke="#9a9a9a" stroke-width="1.2" fill="none" stroke-linecap="round" stroke-linejoin="round"/></svg><div style="left:264.6px;top:70.5px;width:222.2px;height:20px;background:#3b3b3b;border:1px solid #2b2b2b;border-radius:4.5px;"><div style="left:58.5px;top:0;width:1px;height:18px;background:#2b2b2b"></div><div style="left:155.4px;top:0;width:1px;height:18px;background:#2b2b2b"></div></div><div class="txt" style="left:277.00px;top:70.70px;height:20px;line-height:20px;font-size:13px;letter-spacing:0.275px;color:#fff;">Edit</div><div class="txt" style="left:337.40px;top:70.70px;height:20px;line-height:20px;font-size:13px;letter-spacing:0.283px;color:#fff;">Functions</div><div class="txt" style="left:433.40px;top:70.70px;height:20px;line-height:20px;font-size:13px;letter-spacing:0.165px;color:#fff;">View</div><svg style="position:absolute;left:0px;top:0px;overflow:visible" width="10" height="10" viewBox="0 0 10 10" ><path d="M310.3 79.85000000000001 L313.6 82.55 L316.90000000000003 79.85000000000001" stroke="#bdbdbd" stroke-width="1.1" fill="none" stroke-linecap="round" stroke-linejoin="round"/><path d="M406.2 79.85000000000001 L409.5 82.55 L412.8 79.85000000000001" stroke="#bdbdbd" stroke-width="1.1" fill="none" stroke-linecap="round" stroke-linejoin="round"/><path d="M473.2 79.85000000000001 L476.5 82.55 L479.8 79.85000000000001" stroke="#bdbdbd" stroke-width="1.1" fill="none" stroke-linecap="round" stroke-linejoin="round"/></svg><div style="left:495.6px;top:70.5px;width:64.6px;height:20px;background:#3b3b3b;border:1px solid #2b2b2b;border-radius:4.5px;"><div style="left:31px;top:0;width:1px;height:18px;background:#2b2b2b"></div></div><svg style="position:absolute;left:0px;top:0px;overflow:visible" width="10" height="10" viewBox="0 0 10 10" ><path d="M500.8 85.3 h3.2 M521.8 75.4 h3.2" stroke="#fff" stroke-width="1.2"/><path d="M507.4 84.3 L517.6 76.2" stroke="#fff" stroke-width="1.2"/><circle cx="507.4" cy="84.4" r="1.9" fill="#fff"/><circle cx="517.8" cy="76.2" r="1.9" fill="#fff"/><path d="M533.6 74 V87 M554.2 74 V87" stroke="#fff" fill="none" stroke-linecap="round" stroke-linejoin="round" stroke-width="1.1"/><path d="M533.6 74.2 C541 74.6 547 86.4 554.2 86.8 M533.6 86.8 C541 86.4 547 74.6 554.2 74.2" stroke="#fff" fill="none" stroke-linecap="round" stroke-linejoin="round" stroke-width="1.1"/><g stroke="#fff" stroke-width=".9"><path d="M536.6 78.6 v3.8 M538.6 79.6 v1.8 M540.6 79.9 v1.2 M547.2 79.9 v1.2 M549.2 79.2 v2.6 M551.2 78.4 v4.2"/></g></svg><div style="left:568.3px;top:70.5px;width:32px;height:20px;background:#3a74bd;border:1px solid #2b568f;border-radius:4.5px"></div><svg style="position:absolute;left:0px;top:0px;overflow:visible" width="10" height="10" viewBox="0 0 10 10" ><path d="M574.6 78.6 l3.4 2.4 l-3.4 2.4 M594 78.6 l-3.4 2.4 l3.4 2.4" stroke="#fff" fill="none" stroke-linecap="round" stroke-linejoin="round" stroke-width="1.2"/><path d="M584.3 80 V86.8" stroke="#fff" fill="none" stroke-linecap="round" stroke-linejoin="round" stroke-width="1.3"/><path d="M580.6 74.3 h7.4 l-3.7 5.6z" fill="#fff"/></svg><div style="left:1022.5px;top:70.5px;width:85.5px;height:20px;background:#3b3b3b;border:1px solid #2b2b2b;border-radius:4.5px;"><div style="left:42px;top:0;width:1px;height:18px;background:#2b2b2b"></div></div><svg style="position:absolute;left:0px;top:0px;overflow:visible" width="10" height="10" viewBox="0 0 10 10" ><path d="M1033.2 74.2 V86.2 L1036 83.6 L1038 88 L1039.8 87.2 L1037.8 82.9 L1041.6 82.6z" fill="#fff"/><path d="M1051.1000000000001 79.85000000000001 L1054.4 82.55 L1057.7 79.85000000000001" stroke="#bdbdbd" stroke-width="1.1" fill="none" stroke-linecap="round" stroke-linejoin="round"/><path d="M1095.1000000000001 79.85000000000001 L1098.4 82.55 L1101.7 79.85000000000001" stroke="#bdbdbd" stroke-width="1.1" fill="none" stroke-linecap="round" stroke-linejoin="round"/><g transform="translate(1081 81) rotate(-42)"><rect x="-2.2" y="-6.8" width="4.4" height="11" stroke="#fff" fill="none" stroke-linecap="round" stroke-linejoin="round" stroke-width="1.1"/><path d="M-2.2 -4.2 h4.4" stroke="#fff" fill="none" stroke-linecap="round" stroke-linejoin="round" stroke-width="1"/><path d="M-2.2 4.2 L0 7.6 L2.2 4.2z" fill="#fff"/></g></svg><div class="txt" style="left:1323.30px;top:70.70px;height:20px;line-height:20px;font-size:13px;letter-spacing:-0.094px;color:#c6c6c6;">Snap:</div><div style="left:1361.3px;top:70.5px;width:127px;height:20px;background:#3b3b3b;border:1px solid #2b2b2b;border-radius:4.5px;"></div><div class="txt" style="left:1372.00px;top:70.70px;height:20px;line-height:20px;font-size:13px;letter-spacing:0.266px;color:#fff;">Smart</div><div class="txt" style="left:1499.50px;top:70.70px;height:20px;line-height:20px;font-size:13px;letter-spacing:-0.057px;color:#c6c6c6;">Drag:</div><div style="left:1535.5px;top:70.5px;width:99.8px;height:20px;background:#3b3b3b;border:1px solid #2b2b2b;border-radius:4.5px;"></div><div class="txt" style="left:1546.30px;top:70.70px;height:20px;line-height:20px;font-size:13px;letter-spacing:-0.021px;color:#fff;">X-Fade</div><svg style="position:absolute;left:0px;top:0px;overflow:visible" width="10" height="10" viewBox="0 0 10 10" ><path d="M1475.1 78.3 L1478.3 75.1 L1481.5 78.3 M1475.1 82.7 L1478.3 85.9 L1481.5 82.7" stroke="#c9c9c9" stroke-width="1.15" fill="none" stroke-linecap="round" stroke-linejoin="round"/><path d="M1622.2 78.3 L1625.4 75.1 L1628.6000000000001 78.3 M1622.2 82.7 L1625.4 85.9 L1628.6000000000001 82.7" stroke="#c9c9c9" stroke-width="1.15" fill="none" stroke-linecap="round" stroke-linejoin="round"/></svg><div style="left:1644px;top:70.5px;width:32.7px;height:20px;background:#3b3b3b;border:1px solid #2b2b2b;border-radius:4.5px;"></div><svg style="position:absolute;left:0px;top:0px;overflow:visible" width="10" height="10" viewBox="0 0 10 10" ><path d="M1650.30 79.90 V81.10" stroke="#fff" stroke-width="1"/><path d="M1652.35 79.20 V81.80" stroke="#fff" stroke-width="1"/><path d="M1654.40 77.90 V83.10" stroke="#fff" stroke-width="1"/><path d="M1656.45 76.20 V84.80" stroke="#fff" stroke-width="1"/><path d="M1658.50 74.00 V87.00" stroke="#fff" stroke-width="1"/><path d="M1660.55 76.20 V84.80" stroke="#fff" stroke-width="1"/><path d="M1662.60 77.90 V83.10" stroke="#fff" stroke-width="1"/><path d="M1664.65 77.20 V83.80" stroke="#fff" stroke-width="1"/><path d="M1666.70 78.70 V82.30" stroke="#fff" stroke-width="1"/><path d="M1668.75 79.50 V81.50" stroke="#fff" stroke-width="1"/><path d="M1670.80 79.90 V81.10" stroke="#fff" stroke-width="1"/></svg><div style="left:1685.5px;top:70.5px;width:64px;height:20px;background:#3b3b3b;border:1px solid #2b2b2b;border-radius:4.5px;"><div style="left:0;top:0;width:31px;height:18px;background:#3a74bd;border-radius:3.5px 0 0 3.5px"></div><div style="left:31px;top:0;width:1px;height:18px;background:#2b2b2b"></div></div><svg style="position:absolute;left:0px;top:0px;overflow:visible" width="10" height="10" viewBox="0 0 10 10" ><path d="M1695.5 74.2 h12.4 M1695.5 86.6 h12.4" stroke="#fff" fill="none" stroke-linecap="round" stroke-linejoin="round" stroke-width="1.2"/><path d="M1701.7 76.4 V84.4 M1699.2 78.6 L1701.7 76 L1704.2 78.6 M1699.2 82.2 L1701.7 84.8 L1704.2 82.2" stroke="#fff" fill="none" stroke-linecap="round" stroke-linejoin="round" stroke-width="1.1"/><path d="M1727.2 74 V87 M1739.8 74 V87" stroke="#fff" fill="none" stroke-linecap="round" stroke-linejoin="round" stroke-width="1.2"/><path d="M1729.4 80.5 H1737.6 M1731.8 78 L1729.2 80.5 L1731.8 83 M1735.2 78 L1737.8 80.5 L1735.2 83" stroke="#fff" fill="none" stroke-linecap="round" stroke-linejoin="round" stroke-width="1.1"/></svg><div style="left:1758.3px;top:70.5px;width:150.5px;height:20px;background:#3b3b3b;border:1px solid #2b2b2b;border-radius:4.5px;"><div style="left:74px;top:0;width:1px;height:18px;background:#2b2b2b"></div></div><svg style="position:absolute;left:0px;top:0px;overflow:visible" width="10" height="10" viewBox="0 0 10 10" ><path d="M1769.5 75 V86.6 M1766.9 77.6 L1769.5 74.8 L1772.1 77.6 M1766.9 84 L1769.5 86.8 L1772.1 84" stroke="#c9c9c9" fill="none" stroke-width="1.1" stroke-linecap="round" stroke-linejoin="round"/><path d="M1838 80.6 H1850 M1840.6 78 L1837.8 80.6 L1840.6 83.2 M1847.4 78 L1850.2 80.6 L1847.4 83.2" stroke="#c9c9c9" fill="none" stroke-width="1.1" stroke-linecap="round" stroke-linejoin="round"/><rect x="1781" y="79.3" width="44" height="2.6" rx="1.3" fill="#222"/><rect x="1781.8" y="73.4" width=".9" height="1.7" fill="#9a9a9a"/><rect x="1784.0" y="73.4" width=".9" height="1.7" fill="#9a9a9a"/><rect x="1786.2" y="73.4" width=".9" height="1.7" fill="#9a9a9a"/><rect x="1789.0" y="73.4" width=".9" height="1.7" fill="#9a9a9a"/><rect x="1797.0" y="73.4" width=".9" height="1.7" fill="#9a9a9a"/><rect x="1810.0" y="73.4" width=".9" height="1.7" fill="#9a9a9a"/><rect x="1823.6" y="73.4" width=".9" height="1.7" fill="#9a9a9a"/><path d="M1791.6 74.6 C1793.0 76 1795.8 78.6 1795.8 81.4 V84.4 q0 .8 -.8 .8 H1788.1999999999998 q-.8 0 -.8 -.8 V81.4 C1787.3999999999999 78.6 1790.1999999999998 76 1791.6 74.6z" fill="#a8a8a8"/><rect x="1856.3" y="79.3" width="44" height="2.6" rx="1.3" fill="#222"/><rect x="1857.1" y="73.4" width=".9" height="1.7" fill="#9a9a9a"/><rect x="1859.3" y="73.4" width=".9" height="1.7" fill="#9a9a9a"/><rect x="1861.5" y="73.4" width=".9" height="1.7" fill="#9a9a9a"/><rect x="1864.3" y="73.4" width=".9" height="1.7" fill="#9a9a9a"/><rect x="1872.3" y="73.4" width=".9" height="1.7" fill="#9a9a9a"/><rect x="1885.3" y="73.4" width=".9" height="1.7" fill="#9a9a9a"/><rect x="1898.9" y="73.4" width=".9" height="1.7" fill="#9a9a9a"/><path d="M1866.8999999999999 74.6 C1868.3 76 1871.1 78.6 1871.1 81.4 V84.4 q0 .8 -.8 .8 H1863.4999999999998 q-.8 0 -.8 -.8 V81.4 C1862.6999999999998 78.6 1865.4999999999998 76 1866.8999999999999 74.6z" fill="#a8a8a8"/></svg>
<div style="left:223.3px;top:101.3px;width:32px;height:20.4px;background:#3f3f3f;border:1px solid #303030;border-radius:4.5px"></div><div style="left:264.5px;top:101.3px;width:32.2px;height:20.4px;background:#3f3f3f;border:1px solid #303030;border-radius:4.5px"></div><div style="left:305.3px;top:101.3px;width:32.5px;height:20.4px;background:#3f3f3f;border:1px solid #303030;border-radius:4.5px"></div><div style="left:525.3px;top:101.3px;width:32.2px;height:20.4px;background:#3f3f3f;border:1px solid #303030;border-radius:4.5px"></div><svg style="position:absolute;left:0px;top:0px;overflow:visible" width="10" height="10" viewBox="0 0 10 10" ><path d="M233.4 111.5 h11.6 M239.2 105.7 v11.6" stroke="#fff" fill="none" stroke-linecap="round" stroke-linejoin="round" stroke-width="1.3"/><rect x="279.3" y="109.8" width="10.8" height="9" rx="1" fill="none" stroke="#fff" stroke-width="1.1"/><rect x="272.6" y="104" width="12" height="10.6" rx="1.3" fill="#fff" stroke="#3f3f3f" stroke-width=".8"/><path d="M275.4 109.3 h6.4 M278.6 106.1 v6.4" stroke="#3f3f3f" stroke-width="1.25"/><rect x="534.7" y="105.3" width="13.2" height="12.4" rx=".8" stroke="#fff" fill="none" stroke-linecap="round" stroke-linejoin="round" stroke-width="1.2"/><rect x="534.7" y="105" width="13.2" height="2.8" fill="#fff"/><path d="M538.6999999999999 111.44999999999999 L541.3 113.75 L543.9 111.44999999999999" stroke="#fff" stroke-width="1.1" fill="none" stroke-linecap="round" stroke-linejoin="round"/></svg><div class="txt" style="left:315.66px;top:101.90px;height:20px;line-height:20px;font-size:17.5px;color:#fff;">S</div>
<div style="left:215px;top:131px;width:20.3px;height:30px;background:#1f6f86;border-bottom:1px solid rgba(0,0,0,.2)"></div><div class="txt" style="left:221.53px;top:137.60px;height:20px;line-height:20px;font-size:13.2px;color:#e6f5fa;-webkit-text-stroke:.3px #e6f5fa;">1</div><div style="left:235.3px;top:131px;width:331px;height:30px;border-bottom:1px solid #4b4b4b;"></div><div style="left:243.3px;top:134.7px;width:74.3px;height:21.6px;background:#5c5c5c;border:1px solid #4c4c4c;border-radius:7px"></div><div style="left:325px;top:137.6px;width:40.8px;height:17.2px;background:#4a4a4a;border:1px solid #353535;border-radius:4px;"><div style="left:19.6px;top:0;width:1px;height:15.2px;background:#353535"></div></div><div class="txt" style="left:329.80px;top:136.30px;height:20px;line-height:20px;font-size:13.2px;color:#fff;">M</div><div class="txt" style="left:351.10px;top:136.30px;height:20px;line-height:20px;font-size:13.2px;color:#fff;">S</div><div class="txt" style="left:421.30px;top:137.00px;height:20px;line-height:20px;font-size:13px;letter-spacing:0.040px;color:#fff;">Pianos</div><div style="left:215px;top:161px;width:20.3px;height:30px;background:#1f6f86;border-bottom:1px solid rgba(0,0,0,.2)"></div><div class="txt" style="left:221.53px;top:167.60px;height:20px;line-height:20px;font-size:13.2px;color:#e6f5fa;-webkit-text-stroke:.3px #e6f5fa;">2</div><div style="left:248.4px;top:161px;width:318px;height:30px;background:#858585;border-left:1px solid #4b4b4b;border-bottom:1px solid #4b4b4b;border-top-left-radius:7px;border-top:1px solid #4b4b4b;"></div><div style="left:325px;top:167.6px;width:40.8px;height:17.2px;background:#4a4a4a;border:1px solid #353535;border-radius:4px;"><div style="left:19.6px;top:0;width:1px;height:15.2px;background:#353535"></div></div><div class="txt" style="left:329.80px;top:166.30px;height:20px;line-height:20px;font-size:13.2px;color:#fff;">M</div><div class="txt" style="left:351.10px;top:166.30px;height:20px;line-height:20px;font-size:13.2px;color:#fff;">S</div><div style="left:372.2px;top:167.6px;width:20.8px;height:17.2px;background:#d9332f;border:1px solid #a82622;border-radius:4px;"></div><div class="txt" style="left:377.73px;top:166.30px;height:20px;line-height:20px;font-size:13.2px;color:#fff;">R</div><div class="txt" style="left:421.30px;top:167.00px;height:20px;line-height:20px;font-size:13px;letter-spacing:0.036px;color:#fff;">Steinway...nd Piano</div><div style="left:215px;top:191px;width:20.3px;height:30px;background:#1f6f86;border-bottom:1px solid rgba(0,0,0,.2)"></div><div class="txt" style="left:221.53px;top:197.60px;height:20px;line-height:20px;font-size:13.2px;color:#e6f5fa;-webkit-text-stroke:.3px #e6f5fa;">3</div><div style="left:248.4px;top:191px;width:318px;height:30px;background:transparent;border-left:1px solid #4b4b4b;border-bottom:1px solid #4b4b4b;"></div><div style="left:325px;top:197.6px;width:40.8px;height:17.2px;background:#4a4a4a;border:1px solid #353535;border-radius:4px;"><div style="left:19.6px;top:0;width:1px;height:15.2px;background:#353535"></div></div><div class="txt" style="left:329.80px;top:196.30px;height:20px;line-height:20px;font-size:13.2px;color:#fff;">M</div><div class="txt" style="left:351.10px;top:196.30px;height:20px;line-height:20px;font-size:13.2px;color:#fff;">S</div><div style="left:372.2px;top:197.6px;width:20.8px;height:17.2px;background:#4a4a4a;border:1px solid #353535;border-radius:4px;"></div><div class="txt" style="left:377.73px;top:196.30px;height:20px;line-height:20px;font-size:13.2px;color:#fff;">R</div><div class="txt" style="left:421.30px;top:197.00px;height:20px;line-height:20px;font-size:13px;letter-spacing:0.042px;color:#fff;">FM Piano</div><div style="left:215px;top:221px;width:20.3px;height:30px;background:#1f6f86;border-bottom:1px solid rgba(0,0,0,.2)"></div><div class="txt" style="left:221.53px;top:227.60px;height:20px;line-height:20px;font-size:13.2px;color:#e6f5fa;-webkit-text-stroke:.3px #e6f5fa;">4</div><div style="left:248.4px;top:221px;width:318px;height:30px;background:transparent;border-left:1px solid #4b4b4b;border-bottom:1px solid #4b4b4b;"></div><div style="left:325px;top:227.6px;width:40.8px;height:17.2px;background:#4a4a4a;border:1px solid #353535;border-radius:4px;"><div style="left:19.6px;top:0;width:1px;height:15.2px;background:#353535"></div></div><div class="txt" style="left:329.80px;top:226.30px;height:20px;line-height:20px;font-size:13.2px;color:#fff;">M</div><div class="txt" style="left:351.10px;top:226.30px;height:20px;line-height:20px;font-size:13.2px;color:#fff;">S</div><div style="left:372.2px;top:227.6px;width:20.8px;height:17.2px;background:#4a4a4a;border:1px solid #353535;border-radius:4px;"></div><div class="txt" style="left:377.73px;top:226.30px;height:20px;line-height:20px;font-size:13.2px;color:#fff;">R</div><div class="txt" style="left:421.30px;top:227.00px;height:20px;line-height:20px;font-size:13px;letter-spacing:0.035px;color:#fff;">Piano (Arp 1)</div><div style="left:215px;top:251px;width:20.3px;height:30px;background:#1f6f86;border-bottom:1px solid rgba(0,0,0,.2)"></div><div class="txt" style="left:221.53px;top:257.60px;height:20px;line-height:20px;font-size:13.2px;color:#e6f5fa;-webkit-text-stroke:.3px #e6f5fa;">5</div><div style="left:248.4px;top:251px;width:318px;height:30px;background:transparent;border-left:1px solid #4b4b4b;border-bottom:1px solid #4b4b4b;"></div><div style="left:325px;top:257.6px;width:40.8px;height:17.2px;background:#4a4a4a;border:1px solid #353535;border-radius:4px;"><div style="left:19.6px;top:0;width:1px;height:15.2px;background:#353535"></div></div><div class="txt" style="left:329.80px;top:256.30px;height:20px;line-height:20px;font-size:13.2px;color:#fff;">M</div><div class="txt" style="left:351.10px;top:256.30px;height:20px;line-height:20px;font-size:13.2px;color:#fff;">S</div><div style="left:372.2px;top:257.6px;width:20.8px;height:17.2px;background:#4a4a4a;border:1px solid #353535;border-radius:4px;"></div><div class="txt" style="left:377.73px;top:256.30px;height:20px;line-height:20px;font-size:13.2px;color:#fff;">R</div><div class="txt" style="left:421.30px;top:257.00px;height:20px;line-height:20px;font-size:13px;letter-spacing:0.035px;color:#fff;">Piano (Bitcrusher)</div><div style="left:215px;top:281px;width:20.3px;height:30px;background:#1f6f86;border-bottom:1px solid rgba(0,0,0,.2)"></div><div class="txt" style="left:221.53px;top:287.60px;height:20px;line-height:20px;font-size:13.2px;color:#e6f5fa;-webkit-text-stroke:.3px #e6f5fa;">6</div><div style="left:248.4px;top:281px;width:318px;height:30px;background:transparent;border-left:1px solid #4b4b4b;border-bottom:1px solid #4b4b4b;"></div><div style="left:325px;top:287.6px;width:40.8px;height:17.2px;background:#4a4a4a;border:1px solid #353535;border-radius:4px;"><div style="left:19.6px;top:0;width:1px;height:15.2px;background:#353535"></div></div><div class="txt" style="left:329.80px;top:286.30px;height:20px;line-height:20px;font-size:13.2px;color:#fff;">M</div><div class="txt" style="left:351.10px;top:286.30px;height:20px;line-height:20px;font-size:13.2px;color:#fff;">S</div><div style="left:372.2px;top:287.6px;width:20.8px;height:17.2px;background:#4a4a4a;border:1px solid #353535;border-radius:4px;"></div><div class="txt" style="left:377.73px;top:286.30px;height:20px;line-height:20px;font-size:13.2px;color:#fff;">R</div><div class="txt" style="left:421.30px;top:287.00px;height:20px;line-height:20px;font-size:13px;letter-spacing:0.033px;color:#fff;">Piano (Ar...tcrusher)</div><div style="left:215px;top:311px;width:20.3px;height:30px;background:#1f6f86;border-bottom:1px solid rgba(0,0,0,.2)"></div><div class="txt" style="left:221.53px;top:317.60px;height:20px;line-height:20px;font-size:13.2px;color:#e6f5fa;-webkit-text-stroke:.3px #e6f5fa;">7</div><div style="left:248.4px;top:311px;width:318px;height:30px;background:transparent;border-left:1px solid #4b4b4b;border-bottom:1px solid #4b4b4b;"></div><div style="left:325px;top:317.6px;width:40.8px;height:17.2px;background:#4a4a4a;border:1px solid #353535;border-radius:4px;"><div style="left:19.6px;top:0;width:1px;height:15.2px;background:#353535"></div></div><div class="txt" style="left:329.80px;top:316.30px;height:20px;line-height:20px;font-size:13.2px;color:#fff;">M</div><div class="txt" style="left:351.10px;top:316.30px;height:20px;line-height:20px;font-size:13.2px;color:#fff;">S</div><div style="left:372.2px;top:317.6px;width:20.8px;height:17.2px;background:#4a4a4a;border:1px solid #353535;border-radius:4px;"></div><div class="txt" style="left:377.73px;top:316.30px;height:20px;line-height:20px;font-size:13.2px;color:#fff;">R</div><div class="txt" style="left:421.30px;top:317.00px;height:20px;line-height:20px;font-size:13px;letter-spacing:0.035px;color:#fff;">Piano (Arp 2)</div><div style="left:215px;top:341px;width:20.3px;height:30px;background:#1f6f86;border-bottom:1px solid rgba(0,0,0,.2)"></div><div class="txt" style="left:221.53px;top:347.60px;height:20px;line-height:20px;font-size:13.2px;color:#e6f5fa;-webkit-text-stroke:.3px #e6f5fa;">8</div><div style="left:248.4px;top:341px;width:318px;height:30px;background:transparent;border-left:1px solid #4b4b4b;border-bottom:1px solid #4b4b4b;"></div><div style="left:325px;top:347.6px;width:40.8px;height:17.2px;background:#4a4a4a;border:1px solid #353535;border-radius:4px;"><div style="left:19.6px;top:0;width:1px;height:15.2px;background:#353535"></div></div><div class="txt" style="left:329.80px;top:346.30px;height:20px;line-height:20px;font-size:13.2px;color:#fff;">M</div><div class="txt" style="left:351.10px;top:346.30px;height:20px;line-height:20px;font-size:13.2px;color:#fff;">S</div><div style="left:372.2px;top:347.6px;width:20.8px;height:17.2px;background:#4a4a4a;border:1px solid #353535;border-radius:4px;"></div><div class="txt" style="left:377.73px;top:346.30px;height:20px;line-height:20px;font-size:13.2px;color:#fff;">R</div><div class="txt" style="left:421.30px;top:347.00px;height:20px;line-height:20px;font-size:13px;letter-spacing:0.036px;color:#fff;">Synthetic Voice</div><div style="left:215px;top:371px;width:20.3px;height:30px;background:#a98d2c;border-bottom:1px solid rgba(0,0,0,.2)"></div><div class="txt" style="left:221.53px;top:377.60px;height:20px;line-height:20px;font-size:13.2px;color:#fff3c4;-webkit-text-stroke:.3px #fff3c4;">9</div><div style="left:235.3px;top:371px;width:331px;height:30px;border-bottom:1px solid #4b4b4b;border-top:1px solid #4b4b4b;"></div><div style="left:243.3px;top:374.7px;width:74.3px;height:21.6px;background:#5c5c5c;border:1px solid #4c4c4c;border-radius:7px"></div><div style="left:325px;top:377.6px;width:40.8px;height:17.2px;background:#4a4a4a;border:1px solid #353535;border-radius:4px;"><div style="left:19.6px;top:0;width:1px;height:15.2px;background:#353535"></div></div><div class="txt" style="left:329.80px;top:376.30px;height:20px;line-height:20px;font-size:13.2px;color:#fff;">M</div><div class="txt" style="left:351.10px;top:376.30px;height:20px;line-height:20px;font-size:13.2px;color:#fff;">S</div><div class="txt" style="left:421.30px;top:377.00px;height:20px;line-height:20px;font-size:13px;letter-spacing:0.039px;color:#fff;">Percussion</div><div style="left:215px;top:401px;width:20.3px;height:30px;background:#a98d2c;border-bottom:1px solid rgba(0,0,0,.2)"></div><div class="txt" style="left:217.86px;top:407.60px;height:20px;line-height:20px;font-size:13.2px;color:#fff3c4;letter-spacing:-.3px;-webkit-text-stroke:.3px #fff3c4;">10</div><div style="left:248.4px;top:401px;width:318px;height:30px;background:transparent;border-left:1px solid #4b4b4b;border-bottom:1px solid #4b4b4b;border-top-left-radius:7px;border-top:1px solid #4b4b4b;"></div><div style="left:325px;top:407.6px;width:40.8px;height:17.2px;background:#4a4a4a;border:1px solid #353535;border-radius:4px;"><div style="left:19.6px;top:0;width:1px;height:15.2px;background:#353535"></div></div><div class="txt" style="left:329.80px;top:406.30px;height:20px;line-height:20px;font-size:13.2px;color:#fff;">M</div><div class="txt" style="left:351.10px;top:406.30px;height:20px;line-height:20px;font-size:13.2px;color:#fff;">S</div><div class="txt" style="left:421.30px;top:407.00px;height:20px;line-height:20px;font-size:13px;letter-spacing:0.038px;color:#fff;">Big Room (Auto)</div><div style="left:215px;top:431px;width:20.3px;height:30px;background:#a98d2c;border-bottom:1px solid rgba(0,0,0,.2)"></div><div class="txt" style="left:218.35px;top:437.60px;height:20px;line-height:20px;font-size:13.2px;color:#fff3c4;letter-spacing:-.3px;-webkit-text-stroke:.3px #fff3c4;">11</div><div style="left:248.4px;top:431px;width:318px;height:30px;background:transparent;border-left:1px solid #4b4b4b;border-bottom:1px solid #4b4b4b;"></div><div style="left:325px;top:437.6px;width:40.8px;height:17.2px;background:#4a4a4a;border:1px solid #353535;border-radius:4px;"><div style="left:19.6px;top:0;width:1px;height:15.2px;background:#353535"></div></div><div class="txt" style="left:329.80px;top:436.30px;height:20px;line-height:20px;font-size:13.2px;color:#fff;">M</div><div class="txt" style="left:351.10px;top:436.30px;height:20px;line-height:20px;font-size:13.2px;color:#fff;">S</div><div style="left:372.2px;top:437.6px;width:20.8px;height:17.2px;background:#4a4a4a;border:1px solid #353535;border-radius:4px;"></div><div class="txt" style="left:377.73px;top:436.30px;height:20px;line-height:20px;font-size:13.2px;color:#fff;">R</div><div class="txt" style="left:421.30px;top:437.00px;height:20px;line-height:20px;font-size:13px;letter-spacing:0.033px;color:#fff;">Big Roo...l Control)</div><div style="left:215px;top:461px;width:20.3px;height:30px;background:#a98d2c;border-bottom:1px solid rgba(0,0,0,.2)"></div><div class="txt" style="left:217.86px;top:467.60px;height:20px;line-height:20px;font-size:13.2px;color:#fff3c4;letter-spacing:-.3px;-webkit-text-stroke:.3px #fff3c4;">12</div><div style="left:248.4px;top:461px;width:318px;height:30px;background:transparent;border-left:1px solid #4b4b4b;border-bottom:1px solid #4b4b4b;"></div><div style="left:325px;top:467.6px;width:40.8px;height:17.2px;background:#4a4a4a;border:1px solid #353535;border-radius:4px;"><div style="left:19.6px;top:0;width:1px;height:15.2px;background:#353535"></div></div><div class="txt" style="left:329.80px;top:466.30px;height:20px;line-height:20px;font-size:13.2px;color:#fff;">M</div><div class="txt" style="left:351.10px;top:466.30px;height:20px;line-height:20px;font-size:13.2px;color:#fff;">S</div><div class="txt" style="left:421.30px;top:467.00px;height:20px;line-height:20px;font-size:13px;letter-spacing:0.034px;color:#fff;">SoCal Kit (Kyle)</div><div style="left:215px;top:491px;width:20.3px;height:30px;background:#a98d2c;border-bottom:1px solid rgba(0,0,0,.2)"></div><div class="txt" style="left:217.86px;top:497.60px;height:20px;line-height:20px;font-size:13.2px;color:#fff3c4;letter-spacing:-.3px;-webkit-text-stroke:.3px #fff3c4;">13</div><div style="left:248.4px;top:491px;width:318px;height:30px;background:transparent;border-left:1px solid #4b4b4b;border-bottom:1px solid #4b4b4b;"></div><div style="left:255.8px;top:494.7px;width:61.8px;height:21.6px;background:#5c5c5c;border:1px solid #4c4c4c;border-radius:7px"></div><div style="left:325px;top:497.6px;width:40.8px;height:17.2px;background:#4a4a4a;border:1px solid #353535;border-radius:4px;"><div style="left:19.6px;top:0;width:1px;height:15.2px;background:#353535"></div></div><div class="txt" style="left:329.80px;top:496.30px;height:20px;line-height:20px;font-size:13.2px;color:#fff;">M</div><div class="txt" style="left:351.10px;top:496.30px;height:20px;line-height:20px;font-size:13.2px;color:#fff;">S</div><div class="txt" style="left:421.30px;top:497.00px;height:20px;line-height:20px;font-size:13px;letter-spacing:0.039px;color:#fff;">Deep Tech (Leah)</div><div style="left:215px;top:521px;width:20.3px;height:30px;background:#b5592b;border-bottom:1px solid rgba(0,0,0,.2)"></div><div class="txt" style="left:217.86px;top:527.60px;height:20px;line-height:20px;font-size:13.2px;color:#ffe9da;letter-spacing:-.3px;-webkit-text-stroke:.3px #ffe9da;">38</div><div style="left:235.3px;top:521px;width:331px;height:30px;border-bottom:1px solid #4b4b4b;border-top:1px solid #4b4b4b;"></div><div style="left:243.3px;top:524.7px;width:74.3px;height:21.6px;background:#5c5c5c;border:1px solid #4c4c4c;border-radius:7px"></div><div style="left:325px;top:527.6px;width:40.8px;height:17.2px;background:#4a4a4a;border:1px solid #353535;border-radius:4px;"><div style="left:19.6px;top:0;width:1px;height:15.2px;background:#353535"></div></div><div class="txt" style="left:329.80px;top:526.30px;height:20px;line-height:20px;font-size:13.2px;color:#fff;">M</div><div class="txt" style="left:351.10px;top:526.30px;height:20px;line-height:20px;font-size:13.2px;color:#fff;">S</div><div class="txt" style="left:421.30px;top:527.00px;height:20px;line-height:20px;font-size:13px;letter-spacing:0.034px;color:#fff;">Backing I...truments</div><div style="left:215px;top:551px;width:20.3px;height:30px;background:#b5592b;border-bottom:1px solid rgba(0,0,0,.2)"></div><div class="txt" style="left:217.86px;top:557.60px;height:20px;line-height:20px;font-size:13.2px;color:#ffe9da;letter-spacing:-.3px;-webkit-text-stroke:.3px #ffe9da;">39</div><div style="left:248.4px;top:551px;width:318px;height:30px;background:transparent;border-left:1px solid #4b4b4b;border-bottom:1px solid #4b4b4b;border-top-left-radius:7px;border-top:1px solid #4b4b4b;"></div><div style="left:325px;top:557.6px;width:40.8px;height:17.2px;background:#4a4a4a;border:1px solid #353535;border-radius:4px;"><div style="left:19.6px;top:0;width:1px;height:15.2px;background:#353535"></div></div><div class="txt" style="left:329.80px;top:556.30px;height:20px;line-height:20px;font-size:13.2px;color:#fff;">M</div><div class="txt" style="left:351.10px;top:556.30px;height:20px;line-height:20px;font-size:13.2px;color:#fff;">S</div><div style="left:372.2px;top:557.6px;width:20.8px;height:17.2px;background:#4a4a4a;border:1px solid #353535;border-radius:4px;"></div><div class="txt" style="left:377.73px;top:556.30px;height:20px;line-height:20px;font-size:13.2px;color:#fff;">R</div><div class="txt" style="left:421.30px;top:557.00px;height:20px;line-height:20px;font-size:13px;letter-spacing:0.041px;color:#fff;">Baroque Organ</div><div style="left:215px;top:581px;width:20.3px;height:30px;background:#b5592b;border-bottom:1px solid rgba(0,0,0,.2)"></div><div class="txt" style="left:217.86px;top:587.60px;height:20px;line-height:20px;font-size:13.2px;color:#ffe9da;letter-spacing:-.3px;-webkit-text-stroke:.3px #ffe9da;">40</div><div style="left:248.4px;top:581px;width:318px;height:30px;background:transparent;border-left:1px solid #4b4b4b;border-bottom:1px solid #4b4b4b;"></div><div style="left:325px;top:587.6px;width:40.8px;height:17.2px;background:#4a4a4a;border:1px solid #353535;border-radius:4px;"><div style="left:19.6px;top:0;width:1px;height:15.2px;background:#353535"></div></div><div class="txt" style="left:329.80px;top:586.30px;height:20px;line-height:20px;font-size:13.2px;color:#fff;">M</div><div class="txt" style="left:351.10px;top:586.30px;height:20px;line-height:20px;font-size:13.2px;color:#fff;">S</div><div style="left:372.2px;top:587.6px;width:20.8px;height:17.2px;background:#4a4a4a;border:1px solid #353535;border-radius:4px;"></div><div class="txt" style="left:377.73px;top:586.30px;height:20px;line-height:20px;font-size:13.2px;color:#fff;">R</div><div class="txt" style="left:421.30px;top:587.00px;height:20px;line-height:20px;font-size:13px;letter-spacing:0.038px;color:#fff;">Breathy Vox</div><div style="left:215px;top:611px;width:20.3px;height:30px;background:#b5592b;border-bottom:1px solid rgba(0,0,0,.2)"></div><div class="txt" style="left:217.86px;top:617.60px;height:20px;line-height:20px;font-size:13.2px;color:#ffe9da;letter-spacing:-.3px;-webkit-text-stroke:.3px #ffe9da;">41</div><div style="left:248.4px;top:611px;width:318px;height:30px;background:transparent;border-left:1px solid #4b4b4b;border-bottom:1px solid #4b4b4b;"></div><div style="left:325px;top:617.6px;width:40.8px;height:17.2px;background:#4a4a4a;border:1px solid #353535;border-radius:4px;"><div style="left:19.6px;top:0;width:1px;height:15.2px;background:#353535"></div></div><div class="txt" style="left:329.80px;top:616.30px;height:20px;line-height:20px;font-size:13.2px;color:#fff;">M</div><div class="txt" style="left:351.10px;top:616.30px;height:20px;line-height:20px;font-size:13.2px;color:#fff;">S</div><div style="left:372.2px;top:617.6px;width:20.8px;height:17.2px;background:#4a4a4a;border:1px solid #353535;border-radius:4px;"></div><div class="txt" style="left:377.73px;top:616.30px;height:20px;line-height:20px;font-size:13.2px;color:#fff;">R</div><div class="txt" style="left:421.30px;top:617.00px;height:20px;line-height:20px;font-size:13px;letter-spacing:0.036px;color:#fff;">Classic Analog Arp</div><div style="left:215px;top:641px;width:20.3px;height:30px;background:#b5592b;border-bottom:1px solid rgba(0,0,0,.2)"></div><div class="txt" style="left:217.86px;top:647.60px;height:20px;line-height:20px;font-size:13.2px;color:#ffe9da;letter-spacing:-.3px;-webkit-text-stroke:.3px #ffe9da;">42</div><div style="left:248.4px;top:641px;width:318px;height:30px;background:transparent;border-left:1px solid #4b4b4b;border-bottom:1px solid #4b4b4b;"></div><div style="left:325px;top:647.6px;width:40.8px;height:17.2px;background:#4a4a4a;border:1px solid #353535;border-radius:4px;"><div style="left:19.6px;top:0;width:1px;height:15.2px;background:#353535"></div></div><div class="txt" style="left:329.80px;top:646.30px;height:20px;line-height:20px;font-size:13.2px;color:#fff;">M</div><div class="txt" style="left:351.10px;top:646.30px;height:20px;line-height:20px;font-size:13.2px;color:#fff;">S</div><div style="left:372.2px;top:647.6px;width:20.8px;height:17.2px;background:#4a4a4a;border:1px solid #353535;border-radius:4px;"></div><div class="txt" style="left:377.73px;top:646.30px;height:20px;line-height:20px;font-size:13.2px;color:#fff;">R</div><div class="txt" style="left:421.30px;top:647.00px;height:20px;line-height:20px;font-size:13px;letter-spacing:0.041px;color:#fff;">Glassy FM Lead</div><div style="left:215px;top:671px;width:20.3px;height:30px;background:#b5592b;border-bottom:1px solid rgba(0,0,0,.2)"></div><div class="txt" style="left:217.86px;top:677.60px;height:20px;line-height:20px;font-size:13.2px;color:#ffe9da;letter-spacing:-.3px;-webkit-text-stroke:.3px #ffe9da;">43</div><div style="left:248.4px;top:671px;width:318px;height:30px;background:transparent;border-left:1px solid #4b4b4b;border-bottom:1px solid #4b4b4b;"></div><div style="left:325px;top:677.6px;width:40.8px;height:17.2px;background:#4a4a4a;border:1px solid #353535;border-radius:4px;"><div style="left:19.6px;top:0;width:1px;height:15.2px;background:#353535"></div></div><div class="txt" style="left:329.80px;top:676.30px;height:20px;line-height:20px;font-size:13.2px;color:#fff;">M</div><div class="txt" style="left:351.10px;top:676.30px;height:20px;line-height:20px;font-size:13.2px;color:#fff;">S</div><div style="left:372.2px;top:677.6px;width:20.8px;height:17.2px;background:#4a4a4a;border:1px solid #353535;border-radius:4px;"></div><div class="txt" style="left:377.73px;top:676.30px;height:20px;line-height:20px;font-size:13.2px;color:#fff;">R</div><div class="txt" style="left:421.30px;top:677.00px;height:20px;line-height:20px;font-size:13px;letter-spacing:0.040px;color:#fff;">Ending Crunch</div><div style="left:215px;top:701px;width:20.3px;height:30px;background:#b5592b;border-bottom:1px solid rgba(0,0,0,.2)"></div><div class="txt" style="left:217.86px;top:707.60px;height:20px;line-height:20px;font-size:13.2px;color:#ffe9da;letter-spacing:-.3px;-webkit-text-stroke:.3px #ffe9da;">44</div><div style="left:248.4px;top:701px;width:318px;height:30px;background:transparent;border-left:1px solid #4b4b4b;border-bottom:1px solid #4b4b4b;"></div><div style="left:325px;top:707.6px;width:40.8px;height:17.2px;background:#4a4a4a;border:1px solid #353535;border-radius:4px;"><div style="left:19.6px;top:0;width:1px;height:15.2px;background:#353535"></div></div><div class="txt" style="left:329.80px;top:706.30px;height:20px;line-height:20px;font-size:13.2px;color:#fff;">M</div><div class="txt" style="left:351.10px;top:706.30px;height:20px;line-height:20px;font-size:13.2px;color:#fff;">S</div><div style="left:372.2px;top:707.6px;width:20.8px;height:17.2px;background:#4a4a4a;border:1px solid #353535;border-radius:4px;"></div><div class="txt" style="left:377.73px;top:706.30px;height:20px;line-height:20px;font-size:13.2px;color:#fff;">R</div><div class="txt" style="left:421.30px;top:707.00px;height:20px;line-height:20px;font-size:13px;letter-spacing:0.038px;color:#fff;">String Ensemble</div><div style="left:215px;top:731px;width:20.3px;height:30px;background:#b5592b;border-bottom:1px solid rgba(0,0,0,.2)"></div><div class="txt" style="left:217.86px;top:737.60px;height:20px;line-height:20px;font-size:13.2px;color:#ffe9da;letter-spacing:-.3px;-webkit-text-stroke:.3px #ffe9da;">45</div><div style="left:248.4px;top:731px;width:318px;height:30px;background:transparent;border-left:1px solid #4b4b4b;border-bottom:1px solid #4b4b4b;"></div><div style="left:325px;top:737.6px;width:40.8px;height:17.2px;background:#4a4a4a;border:1px solid #353535;border-radius:4px;"><div style="left:19.6px;top:0;width:1px;height:15.2px;background:#353535"></div></div><div class="txt" style="left:329.80px;top:736.30px;height:20px;line-height:20px;font-size:13.2px;color:#fff;">M</div><div class="txt" style="left:351.10px;top:736.30px;height:20px;line-height:20px;font-size:13.2px;color:#fff;">S</div><div style="left:372.2px;top:737.6px;width:20.8px;height:17.2px;background:#4a4a4a;border:1px solid #353535;border-radius:4px;"></div><div class="txt" style="left:377.73px;top:736.30px;height:20px;line-height:20px;font-size:13.2px;color:#fff;">R</div><div class="txt" style="left:421.30px;top:737.00px;height:20px;line-height:20px;font-size:13px;letter-spacing:0.035px;color:#fff;">Studio Strings</div><div style="left:215px;top:761px;width:20.3px;height:30px;background:#2f5c90;border-bottom:1px solid rgba(0,0,0,.2)"></div><div class="txt" style="left:217.86px;top:767.60px;height:20px;line-height:20px;font-size:13.2px;color:#e6efff;letter-spacing:-.3px;-webkit-text-stroke:.3px #e6efff;">46</div><div style="left:235.3px;top:761px;width:331px;height:30px;border-bottom:1px solid #4b4b4b;border-top:1px solid #4b4b4b;"></div><div style="left:243.3px;top:764.7px;width:74.3px;height:21.6px;background:#5c5c5c;border:1px solid #4c4c4c;border-radius:7px"></div><div style="left:325px;top:767.6px;width:40.8px;height:17.2px;background:#4a4a4a;border:1px solid #353535;border-radius:4px;"><div style="left:19.6px;top:0;width:1px;height:15.2px;background:#353535"></div></div><div class="txt" style="left:329.80px;top:766.30px;height:20px;line-height:20px;font-size:13.2px;color:#fff;">M</div><div class="txt" style="left:351.10px;top:766.30px;height:20px;line-height:20px;font-size:13.2px;color:#fff;">S</div><div class="txt" style="left:421.30px;top:767.00px;height:20px;line-height:20px;font-size:13px;letter-spacing:0.037px;color:#fff;">Sound Effects</div><div style="left:215px;top:791px;width:20.3px;height:30px;background:#2f5c90;border-bottom:1px solid rgba(0,0,0,.2)"></div><div class="txt" style="left:217.86px;top:797.60px;height:20px;line-height:20px;font-size:13.2px;color:#e6efff;letter-spacing:-.3px;-webkit-text-stroke:.3px #e6efff;">47</div><div style="left:248.4px;top:791px;width:318px;height:30px;background:transparent;border-left:1px solid #4b4b4b;border-bottom:1px solid #4b4b4b;border-top-left-radius:7px;border-top:1px solid #4b4b4b;"></div><div style="left:325px;top:797.6px;width:40.8px;height:17.2px;background:#4a4a4a;border:1px solid #353535;border-radius:4px;"><div style="left:19.6px;top:0;width:1px;height:15.2px;background:#353535"></div></div><div class="txt" style="left:329.80px;top:796.30px;height:20px;line-height:20px;font-size:13.2px;color:#fff;">M</div><div class="txt" style="left:351.10px;top:796.30px;height:20px;line-height:20px;font-size:13.2px;color:#fff;">S</div><div style="left:372.2px;top:797.6px;width:40.4px;height:17.2px;background:#4a4a4a;border:1px solid #353535;border-radius:4px;"><div style="left:19.4px;top:0;width:1px;height:15.2px;background:#353535"></div></div><div class="txt" style="left:377.73px;top:796.30px;height:20px;line-height:20px;font-size:13.2px;color:#fff;">R</div><div class="txt" style="left:400.57px;top:796.30px;height:20px;line-height:20px;font-size:13.2px;color:#eb9a33;">I</div><div class="txt" style="left:421.30px;top:797.00px;height:20px;line-height:20px;font-size:13px;letter-spacing:0.040px;color:#fff;">Echo/Reverb A</div><div style="left:215px;top:821px;width:20.3px;height:30px;background:#2f5c90;border-bottom:1px solid rgba(0,0,0,.2)"></div><div class="txt" style="left:217.86px;top:827.60px;height:20px;line-height:20px;font-size:13.2px;color:#e6efff;letter-spacing:-.3px;-webkit-text-stroke:.3px #e6efff;">48</div><div style="left:248.4px;top:821px;width:318px;height:30px;background:transparent;border-left:1px solid #4b4b4b;border-bottom:1px solid #4b4b4b;"></div><div style="left:325px;top:827.6px;width:40.8px;height:17.2px;background:#4a4a4a;border:1px solid #353535;border-radius:4px;"><div style="left:19.6px;top:0;width:1px;height:15.2px;background:#353535"></div></div><div class="txt" style="left:329.80px;top:826.30px;height:20px;line-height:20px;font-size:13.2px;color:#fff;">M</div><div class="txt" style="left:351.10px;top:826.30px;height:20px;line-height:20px;font-size:13.2px;color:#fff;">S</div><div style="left:372.2px;top:827.6px;width:40.4px;height:17.2px;background:#4a4a4a;border:1px solid #353535;border-radius:4px;"><div style="left:19.4px;top:0;width:1px;height:15.2px;background:#353535"></div></div><div class="txt" style="left:377.73px;top:826.30px;height:20px;line-height:20px;font-size:13.2px;color:#fff;">R</div><div class="txt" style="left:400.57px;top:826.30px;height:20px;line-height:20px;font-size:13.2px;color:#eb9a33;">I</div><div class="txt" style="left:421.30px;top:827.00px;height:20px;line-height:20px;font-size:13px;letter-spacing:0.040px;color:#fff;">Echo/Reverb B</div><div style="left:215px;top:851px;width:20.3px;height:30px;background:#2f5c90;border-bottom:1px solid rgba(0,0,0,.2)"></div><div class="txt" style="left:217.86px;top:857.60px;height:20px;line-height:20px;font-size:13.2px;color:#e6efff;letter-spacing:-.3px;-webkit-text-stroke:.3px #e6efff;">49</div><div style="left:248.4px;top:851px;width:318px;height:30px;background:transparent;border-left:1px solid #4b4b4b;border-bottom:1px solid #4b4b4b;"></div><div style="left:325px;top:857.6px;width:40.8px;height:17.2px;background:#4a4a4a;border:1px solid #353535;border-radius:4px;"><div style="left:19.6px;top:0;width:1px;height:15.2px;background:#353535"></div></div><div class="txt" style="left:329.80px;top:856.30px;height:20px;line-height:20px;font-size:13.2px;color:#fff;">M</div><div class="txt" style="left:351.10px;top:856.30px;height:20px;line-height:20px;font-size:13.2px;color:#fff;">S</div><div style="left:372.2px;top:857.6px;width:40.4px;height:17.2px;background:#4a4a4a;border:1px solid #353535;border-radius:4px;"><div style="left:19.4px;top:0;width:1px;height:15.2px;background:#353535"></div></div><div class="txt" style="left:377.73px;top:856.30px;height:20px;line-height:20px;font-size:13.2px;color:#fff;">R</div><div class="txt" style="left:400.57px;top:856.30px;height:20px;line-height:20px;font-size:13.2px;color:#eb9a33;">I</div><div class="txt" style="left:421.30px;top:857.00px;height:20px;line-height:20px;font-size:13px;letter-spacing:0.042px;color:#fff;">Reverb</div><div style="left:215px;top:881px;width:20.3px;height:30px;background:#2f5c90;border-bottom:1px solid rgba(0,0,0,.2)"></div><div class="txt" style="left:217.86px;top:887.60px;height:20px;line-height:20px;font-size:13.2px;color:#e6efff;letter-spacing:-.3px;-webkit-text-stroke:.3px #e6efff;">50</div><div style="left:248.4px;top:881px;width:318px;height:30px;background:transparent;border-left:1px solid #4b4b4b;border-bottom:1px solid #4b4b4b;"></div><div style="left:325px;top:887.6px;width:40.8px;height:17.2px;background:#4a4a4a;border:1px solid #353535;border-radius:4px;"><div style="left:19.6px;top:0;width:1px;height:15.2px;background:#353535"></div></div><div class="txt" style="left:329.80px;top:886.30px;height:20px;line-height:20px;font-size:13.2px;color:#fff;">M</div><div class="txt" style="left:351.10px;top:886.30px;height:20px;line-height:20px;font-size:13.2px;color:#fff;">S</div><div style="left:372.2px;top:887.6px;width:40.4px;height:17.2px;background:#4a4a4a;border:1px solid #353535;border-radius:4px;"><div style="left:19.4px;top:0;width:1px;height:15.2px;background:#353535"></div></div><div class="txt" style="left:377.73px;top:886.30px;height:20px;line-height:20px;font-size:13.2px;color:#fff;">R</div><div class="txt" style="left:400.57px;top:886.30px;height:20px;line-height:20px;font-size:13.2px;color:#eb9a33;">I</div><div class="txt" style="left:421.30px;top:887.00px;height:20px;line-height:20px;font-size:13px;letter-spacing:0.042px;color:#fff;">Non-Reverb</div><div style="left:215px;top:911px;width:20.3px;height:30px;background:#2f5c90;border-bottom:1px solid rgba(0,0,0,.2)"></div><div class="txt" style="left:217.86px;top:917.60px;height:20px;line-height:20px;font-size:13.2px;color:#e6efff;letter-spacing:-.3px;-webkit-text-stroke:.3px #e6efff;">51</div><div style="left:248.4px;top:911px;width:318px;height:30px;background:transparent;border-left:1px solid #4b4b4b;border-bottom:1px solid #4b4b4b;"></div><div style="left:325px;top:917.6px;width:40.8px;height:17.2px;background:#4a4a4a;border:1px solid #353535;border-radius:4px;"><div style="left:19.6px;top:0;width:1px;height:15.2px;background:#353535"></div></div><div class="txt" style="left:329.80px;top:916.30px;height:20px;line-height:20px;font-size:13.2px;color:#fff;">M</div><div class="txt" style="left:351.10px;top:916.30px;height:20px;line-height:20px;font-size:13.2px;color:#fff;">S</div><div style="left:372.2px;top:917.6px;width:20.8px;height:17.2px;background:#4a4a4a;border:1px solid #353535;border-radius:4px;"></div><div class="txt" style="left:377.73px;top:916.30px;height:20px;line-height:20px;font-size:13.2px;color:#fff;">R</div><div class="txt" style="left:421.30px;top:917.00px;height:20px;line-height:20px;font-size:13px;letter-spacing:0.033px;color:#fff;">Slow Drift</div><div style="left:215px;top:941px;width:20.3px;height:30px;background:#2f5c90;border-bottom:1px solid rgba(0,0,0,.2)"></div><div class="txt" style="left:217.86px;top:947.60px;height:20px;line-height:20px;font-size:13.2px;color:#e6efff;letter-spacing:-.3px;-webkit-text-stroke:.3px #e6efff;">52</div><div style="left:248.4px;top:941px;width:318px;height:30px;background:transparent;border-left:1px solid #4b4b4b;border-bottom:1px solid #4b4b4b;"></div><div style="left:325px;top:947.6px;width:40.8px;height:17.2px;background:#4a4a4a;border:1px solid #353535;border-radius:4px;"><div style="left:19.6px;top:0;width:1px;height:15.2px;background:#353535"></div></div><div class="txt" style="left:329.80px;top:946.30px;height:20px;line-height:20px;font-size:13.2px;color:#fff;">M</div><div class="txt" style="left:351.10px;top:946.30px;height:20px;line-height:20px;font-size:13.2px;color:#fff;">S</div><div style="left:372.2px;top:947.6px;width:40.4px;height:17.2px;background:#4a4a4a;border:1px solid #353535;border-radius:4px;"><div style="left:19.4px;top:0;width:1px;height:15.2px;background:#353535"></div></div><div class="txt" style="left:377.73px;top:946.30px;height:20px;line-height:20px;font-size:13.2px;color:#fff;">R</div><div class="txt" style="left:400.57px;top:946.30px;height:20px;line-height:20px;font-size:13.2px;color:#fff;">I</div><div class="txt" style="left:421.30px;top:947.00px;height:20px;line-height:20px;font-size:13px;letter-spacing:0.037px;color:#fff;">Soft Crash</div><div style="left:215px;top:971px;width:20.3px;height:30px;background:#748e2a;border-bottom:1px solid rgba(0,0,0,.2)"></div><div class="txt" style="left:217.86px;top:977.60px;height:20px;line-height:20px;font-size:13.2px;color:#f4fad0;letter-spacing:-.3px;-webkit-text-stroke:.3px #f4fad0;">53</div><div style="left:235.3px;top:971px;width:331px;height:30px;border-bottom:1px solid #4b4b4b;border-top:1px solid #4b4b4b;"></div><div style="left:325px;top:977.6px;width:21px;height:17.2px;background:#4a4a4a;border:1px solid #353535;border-radius:4px;"></div><div class="txt" style="left:330.00px;top:976.30px;height:20px;line-height:20px;font-size:13.2px;color:#fff;">M</div><div class="txt" style="left:421.30px;top:977.00px;height:20px;line-height:20px;font-size:13px;letter-spacing:0.038px;color:#fff;">Master Track</div><svg style="position:absolute;left:0px;top:0px;overflow:visible" width="10" height="10" viewBox="0 0 10 10" ><path d="M248.6 142.3 h9.8 l-4.9 7.6z" fill="#e3e3e3"/><g transform="translate(293.5 145.5) scale(1.0)"><ellipse cx="0" cy="9.6" rx="7.5" ry="1.3" fill="#000" opacity=".22"/><path d="M-3 -5 L3.6 -10.6 L6.4 -8 L7.6 -3 L1.4 -1.8z" fill="#1b1311"/><path d="M-1.8 -4.6 L3.8 -9.2 L5.4 -7.6 L0.6 -3.2z" fill="#3a231b" opacity=".8"/><path d="M-9.2 -2 L-2.2 -4.6 L8.8 -2.8 L9 0.6 L-1.4 3 L-9.2 0.6z" fill="#141414"/><path d="M-9.2 -2 L-2.2 -4.6 L8.8 -2.8 L8.8 -2.1 L-2.2 -3.8 L-9.2 -1.3z" fill="#8e8e8e" opacity=".75"/><path d="M-9.1 -0.8 L-2.4 1.3 L-2.4 2.3 L-9.1 0.3z" fill="#dedede"/><path d="M-7.4 .9 v6.6 h1.3 v-6.2z M-1.9 2.8 v7 h1.5 v-7.3z M6.8 1.2 v6 h1.3 v-6.3z M2.6 2.2 v4.4 h.9 v-4.6z" fill="#181818"/></g><circle cx="551.3" cy="145.7" r="4.6" fill="#3a3a3a"/><g transform="translate(293.5 175.5) scale(1.0)"><ellipse cx="0" cy="9.6" rx="7.5" ry="1.3" fill="#000" opacity=".22"/><path d="M-3 -5 L3.6 -10.6 L6.4 -8 L7.6 -3 L1.4 -1.8z" fill="#1b1311"/><path d="M-1.8 -4.6 L3.8 -9.2 L5.4 -7.6 L0.6 -3.2z" fill="#3a231b" opacity=".8"/><path d="M-9.2 -2 L-2.2 -4.6 L8.8 -2.8 L9 0.6 L-1.4 3 L-9.2 0.6z" fill="#141414"/><path d="M-9.2 -2 L-2.2 -4.6 L8.8 -2.8 L8.8 -2.1 L-2.2 -3.8 L-9.2 -1.3z" fill="#8e8e8e" opacity=".75"/><path d="M-9.1 -0.8 L-2.4 1.3 L-2.4 2.3 L-9.1 0.3z" fill="#dedede"/><path d="M-7.4 .9 v6.6 h1.3 v-6.2z M-1.9 2.8 v7 h1.5 v-7.3z M6.8 1.2 v6 h1.3 v-6.3z M2.6 2.2 v4.4 h.9 v-4.6z" fill="#181818"/></g><circle cx="551.3" cy="175.7" r="4.6" fill="#3a3a3a"/><g transform="translate(293.5 206.3) scale(0.82)"><path d="M-6.5 -2.5 L5.5 8.6 M6.5 -2.5 L-5.5 8.6" stroke="#242424" stroke-width="1.25" fill="none"/><path d="M-7.5 8.8 h4 M3.5 8.8 h4" stroke="#242424" stroke-width="1.3"/><ellipse cx="0" cy="9.6" rx="7" ry="1" fill="#000" opacity=".2"/><path d="M-10 -8.2 L7 -5.6 L10.5 -3.2 L-6.2 -4.6z" fill="#1e1e1e"/><path d="M-10 -8.2 L-6.2 -4.6 L-6.2 -3.4 L-10 -7z" fill="#3a3a3a"/></g><circle cx="551.3" cy="205.7" r="4.6" fill="#3a3a3a"/><g transform="translate(293.5 235.5) scale(1.0)"><ellipse cx="0" cy="9.6" rx="7.5" ry="1.3" fill="#000" opacity=".22"/><path d="M-3 -5 L3.6 -10.6 L6.4 -8 L7.6 -3 L1.4 -1.8z" fill="#1b1311"/><path d="M-1.8 -4.6 L3.8 -9.2 L5.4 -7.6 L0.6 -3.2z" fill="#3a231b" opacity=".8"/><path d="M-9.2 -2 L-2.2 -4.6 L8.8 -2.8 L9 0.6 L-1.4 3 L-9.2 0.6z" fill="#141414"/><path d="M-9.2 -2 L-2.2 -4.6 L8.8 -2.8 L8.8 -2.1 L-2.2 -3.8 L-9.2 -1.3z" fill="#8e8e8e" opacity=".75"/><path d="M-9.1 -0.8 L-2.4 1.3 L-2.4 2.3 L-9.1 0.3z" fill="#dedede"/><path d="M-7.4 .9 v6.6 h1.3 v-6.2z M-1.9 2.8 v7 h1.5 v-7.3z M6.8 1.2 v6 h1.3 v-6.3z M2.6 2.2 v4.4 h.9 v-4.6z" fill="#181818"/></g><circle cx="551.3" cy="235.7" r="4.6" fill="#3a3a3a"/><g transform="translate(293.5 266.4) scale(.9)"><rect x="-10.6" y="-8.2" width="21.6" height="15.2" rx="1.6" fill="#d3d8df" stroke="#8a8f97" stroke-width=".8"/><rect x="-10.6" y="4.8" width="21.6" height="2.6" rx="1" fill="#a9aeb6"/><circle cx="-2.8" cy="-1.4" r="6.9" fill="#121212"/><circle cx="-2.8" cy="-1.4" r="1.7" fill="#bdbdbd"/><circle cx="-2.8" cy="-1.4" r="4.4" fill="none" stroke="#3c3c3c" stroke-width=".6"/><path d="M-8.6 4.2 L2.6 -6.6" stroke="#e2e2e2" stroke-width=".9"/><circle cx="7.2" cy="-4.8" r="2" fill="#1a1a1a"/><rect x="6.3" y="-.8" width="1.8" height="4.6" fill="#2a2a2a"/></g><circle cx="551.3" cy="265.7" r="4.6" fill="#3a3a3a"/><g transform="translate(293.5 296.4) scale(.9)"><rect x="-10.6" y="-8.2" width="21.6" height="15.2" rx="1.6" fill="#d3d8df" stroke="#8a8f97" stroke-width=".8"/><rect x="-10.6" y="4.8" width="21.6" height="2.6" rx="1" fill="#a9aeb6"/><circle cx="-2.8" cy="-1.4" r="6.9" fill="#121212"/><circle cx="-2.8" cy="-1.4" r="1.7" fill="#bdbdbd"/><circle cx="-2.8" cy="-1.4" r="4.4" fill="none" stroke="#3c3c3c" stroke-width=".6"/><path d="M-8.6 4.2 L2.6 -6.6" stroke="#e2e2e2" stroke-width=".9"/><circle cx="7.2" cy="-4.8" r="2" fill="#1a1a1a"/><rect x="6.3" y="-.8" width="1.8" height="4.6" fill="#2a2a2a"/></g><circle cx="551.3" cy="295.7" r="4.6" fill="#3a3a3a"/><g transform="translate(293.5 325.5) scale(1.0)"><ellipse cx="0" cy="9.6" rx="7.5" ry="1.3" fill="#000" opacity=".22"/><path d="M-3 -5 L3.6 -10.6 L6.4 -8 L7.6 -3 L1.4 -1.8z" fill="#1b1311"/><path d="M-1.8 -4.6 L3.8 -9.2 L5.4 -7.6 L0.6 -3.2z" fill="#3a231b" opacity=".8"/><path d="M-9.2 -2 L-2.2 -4.6 L8.8 -2.8 L9 0.6 L-1.4 3 L-9.2 0.6z" fill="#141414"/><path d="M-9.2 -2 L-2.2 -4.6 L8.8 -2.8 L8.8 -2.1 L-2.2 -3.8 L-9.2 -1.3z" fill="#8e8e8e" opacity=".75"/><path d="M-9.1 -0.8 L-2.4 1.3 L-2.4 2.3 L-9.1 0.3z" fill="#dedede"/><path d="M-7.4 .9 v6.6 h1.3 v-6.2z M-1.9 2.8 v7 h1.5 v-7.3z M6.8 1.2 v6 h1.3 v-6.3z M2.6 2.2 v4.4 h.9 v-4.6z" fill="#181818"/></g><circle cx="551.3" cy="325.7" r="4.6" fill="#3a3a3a"/><g transform="translate(293.5 356.3) scale(0.82)"><path d="M-6.5 -2.5 L5.5 8.6 M6.5 -2.5 L-5.5 8.6" stroke="#242424" stroke-width="1.25" fill="none"/><path d="M-7.5 8.8 h4 M3.5 8.8 h4" stroke="#242424" stroke-width="1.3"/><ellipse cx="0" cy="9.6" rx="7" ry="1" fill="#000" opacity=".2"/><path d="M-10 -7 L4 -9.6 L10.5 -5 L-3 -2z" fill="#2b2b36"/><path d="M-6.5 -6.6 L2.5 -8.3 L5.2 -6.3 L-3.6 -4.5z" fill="#8f8fd0"/><path d="M-9 -5.6 L-3 -1.6 L10 -4.3 L10.3 -3.3 L-3 -0.6 L-9.6 -4.8z" fill="#e4e4e4"/><path d="M7 -6.8 L10.4 -4.6 L10.4 -3.8 L7 -5.8z" fill="#b03030"/></g><circle cx="551.3" cy="355.7" r="4.6" fill="#3a3a3a"/><path d="M248.6 382.3 h9.8 l-4.9 7.6z" fill="#e3e3e3"/><g transform="translate(293.5 385.5) scale(0.8)"><ellipse cx="0" cy="8.6" rx="9.5" ry="1.3" fill="#000" opacity=".22"/><path d="M-8 -3.5 L-10 8 M8 -3.5 L10 8" stroke="#8c8c8c" stroke-width=".8"/><ellipse cx="-7.6" cy="-4.5" rx="4.3" ry="1.3" fill="#b9986a" transform="rotate(-12 -7.6 -4.5)"/><ellipse cx="7.6" cy="-5" rx="4.3" ry="1.3" fill="#b9986a" transform="rotate(12 7.6 -5)"/><rect x="-5.8" y="-4.4" width="5" height="4.2" rx="1" fill="#a8683e"/><rect x="0.8" y="-4.4" width="5" height="4.2" rx="1" fill="#a8683e"/><circle cx="0" cy="3.4" r="5.1" fill="#c9c9c9" stroke="#6a4a38" stroke-width="1.2"/><ellipse cx="-8" cy="3.6" rx="3.2" ry="2.6" fill="#b9a48e" stroke="#6a4a38" stroke-width=".8"/><ellipse cx="8.2" cy="4.2" rx="3" ry="2.4" fill="#b9a48e" stroke="#6a4a38" stroke-width=".8"/></g><circle cx="551.3" cy="385.7" r="4.6" fill="#3a3a3a"/><g transform="translate(293.5 416.3) scale(0.9)"><rect x="-10.5" y="-8" width="21" height="16.6" rx="1.5" fill="#e3e5e8" stroke="#9da1a8" stroke-width=".8"/><rect x="-10.5" y="6.2" width="21" height="2.6" rx="1" fill="#b2b6bc"/><rect x="-6" y="-6.3" width="10" height="4" fill="#214a86"/><g fill="#5a5f67"><rect x="-8.6" y="-6.2" width="1.7" height="3.6"/><rect x="5.2" y="-6.2" width="1.5" height="1.5"/><rect x="7.4" y="-6.2" width="1.5" height="1.5"/><rect x="5.2" y="-4" width="1.5" height="1.5"/><rect x="7.4" y="-4" width="1.5" height="1.5"/></g><rect x="-3.6" y="-1.0" width="2.5" height="2.5" fill="#8a8f98"/><rect x="-0.3" y="-1.0" width="2.5" height="2.5" fill="#8a8f98"/><rect x="3.0" y="-1.0" width="2.5" height="2.5" fill="#8a8f98"/><rect x="6.3" y="-1.0" width="2.5" height="2.5" fill="#8a8f98"/><rect x="-3.6" y="2.3" width="2.5" height="2.5" fill="#8a8f98"/><rect x="-0.3" y="2.3" width="2.5" height="2.5" fill="#8a8f98"/><rect x="3.0" y="2.3" width="2.5" height="2.5" fill="#8a8f98"/><rect x="6.3" y="2.3" width="2.5" height="2.5" fill="#8a8f98"/><g fill="#6a6f78"><rect x="-8.6" y="-1" width="3.6" height="1.2"/><rect x="-8.6" y="1.2" width="3.6" height="1.2"/><rect x="-8.6" y="3.4" width="3.6" height="1.2"/></g></g><circle cx="551.3" cy="415.7" r="4.6" fill="#3a3a3a"/><g transform="translate(293.5 446.3) scale(0.9)"><rect x="-10.5" y="-8" width="21" height="16.6" rx="1.5" fill="#e3e5e8" stroke="#9da1a8" stroke-width=".8"/><rect x="-10.5" y="6.2" width="21" height="2.6" rx="1" fill="#b2b6bc"/><rect x="-6" y="-6.3" width="10" height="4" fill="#214a86"/><g fill="#5a5f67"><rect x="-8.6" y="-6.2" width="1.7" height="3.6"/><rect x="5.2" y="-6.2" width="1.5" height="1.5"/><rect x="7.4" y="-6.2" width="1.5" height="1.5"/><rect x="5.2" y="-4" width="1.5" height="1.5"/><rect x="7.4" y="-4" width="1.5" height="1.5"/></g><rect x="-3.6" y="-1.0" width="2.5" height="2.5" fill="#8a8f98"/><rect x="-0.3" y="-1.0" width="2.5" height="2.5" fill="#8a8f98"/><rect x="3.0" y="-1.0" width="2.5" height="2.5" fill="#8a8f98"/><rect x="6.3" y="-1.0" width="2.5" height="2.5" fill="#8a8f98"/><rect x="-3.6" y="2.3" width="2.5" height="2.5" fill="#8a8f98"/><rect x="-0.3" y="2.3" width="2.5" height="2.5" fill="#8a8f98"/><rect x="3.0" y="2.3" width="2.5" height="2.5" fill="#8a8f98"/><rect x="6.3" y="2.3" width="2.5" height="2.5" fill="#8a8f98"/><g fill="#6a6f78"><rect x="-8.6" y="-1" width="3.6" height="1.2"/><rect x="-8.6" y="1.2" width="3.6" height="1.2"/><rect x="-8.6" y="3.4" width="3.6" height="1.2"/></g></g><circle cx="551.3" cy="445.7" r="4.6" fill="#3a3a3a"/><g transform="translate(293.5 476.0) scale(0.86)"><ellipse cx="0" cy="8.6" rx="10" ry="1.3" fill="#000" opacity=".22"/><path d="M-8 -3.5 L-10 8 M8 -3.5 L10 8" stroke="#8c8c8c" stroke-width=".8"/><ellipse cx="-7.8" cy="-4.5" rx="4.6" ry="1.3" fill="#b9a98a" transform="rotate(-12 -7.8 -4.5)"/><ellipse cx="7.8" cy="-5" rx="4.6" ry="1.3" fill="#b9a98a" transform="rotate(12 7.8 -5)"/><rect x="-5.8" y="-4.4" width="5" height="4.2" rx="1" fill="#cfcabf"/><rect x="0.8" y="-4.4" width="5" height="4.2" rx="1" fill="#cfcabf"/><circle cx="0" cy="3.4" r="5.2" fill="#ece8df" stroke="#8f8a80" stroke-width="1.2"/><ellipse cx="-8" cy="3.6" rx="3.2" ry="2.6" fill="#cfc6b8" stroke="#8f8a80" stroke-width=".8"/><ellipse cx="8.2" cy="4.2" rx="3" ry="2.4" fill="#cfc6b8" stroke="#8f8a80" stroke-width=".8"/></g><circle cx="551.3" cy="475.7" r="4.6" fill="#3a3a3a"/><path d="M262.8 500.8 v10.4 l7.6 -5.2z" fill="#e3e3e3"/><g transform="translate(294.0 506.3) scale(0.738)"><rect x="-10.5" y="-8" width="21" height="16.6" rx="1.5" fill="#e3e5e8" stroke="#9da1a8" stroke-width=".8"/><rect x="-10.5" y="6.2" width="21" height="2.6" rx="1" fill="#b2b6bc"/><rect x="-6" y="-6.3" width="10" height="4" fill="#214a86"/><g fill="#5a5f67"><rect x="-8.6" y="-6.2" width="1.7" height="3.6"/><rect x="5.2" y="-6.2" width="1.5" height="1.5"/><rect x="7.4" y="-6.2" width="1.5" height="1.5"/><rect x="5.2" y="-4" width="1.5" height="1.5"/><rect x="7.4" y="-4" width="1.5" height="1.5"/></g><rect x="-3.6" y="-1.0" width="2.5" height="2.5" fill="#8a8f98"/><rect x="-0.3" y="-1.0" width="2.5" height="2.5" fill="#8a8f98"/><rect x="3.0" y="-1.0" width="2.5" height="2.5" fill="#8a8f98"/><rect x="6.3" y="-1.0" width="2.5" height="2.5" fill="#8a8f98"/><rect x="-3.6" y="2.3" width="2.5" height="2.5" fill="#8a8f98"/><rect x="-0.3" y="2.3" width="2.5" height="2.5" fill="#8a8f98"/><rect x="3.0" y="2.3" width="2.5" height="2.5" fill="#8a8f98"/><rect x="6.3" y="2.3" width="2.5" height="2.5" fill="#8a8f98"/><g fill="#6a6f78"><rect x="-8.6" y="-1" width="3.6" height="1.2"/><rect x="-8.6" y="1.2" width="3.6" height="1.2"/><rect x="-8.6" y="3.4" width="3.6" height="1.2"/></g></g><circle cx="551.3" cy="505.7" r="4.6" fill="#3a3a3a"/><path d="M248.6 532.3 h9.8 l-4.9 7.6z" fill="#e3e3e3"/><g transform="translate(293.5 536.3) scale(0.82)"><path d="M-6.5 -2.5 L5.5 8.6 M6.5 -2.5 L-5.5 8.6" stroke="#242424" stroke-width="1.25" fill="none"/><path d="M-7.5 8.8 h4 M3.5 8.8 h4" stroke="#242424" stroke-width="1.3"/><ellipse cx="0" cy="9.6" rx="7" ry="1" fill="#000" opacity=".2"/><path d="M-10 -7 L4 -9.6 L10.5 -5 L-3 -2z" fill="#2b2b36"/><path d="M-6.5 -6.6 L2.5 -8.3 L5.2 -6.3 L-3.6 -4.5z" fill="#8f8fd0"/><path d="M-9 -5.6 L-3 -1.6 L10 -4.3 L10.3 -3.3 L-3 -0.6 L-9.6 -4.8z" fill="#e4e4e4"/><path d="M7 -6.8 L10.4 -4.6 L10.4 -3.8 L7 -5.8z" fill="#b03030"/></g><circle cx="551.3" cy="535.7" r="4.6" fill="#3a3a3a"/><g transform="translate(293.5 566.1) scale(0.88)"><path d="M-7.2 -3.9 L-5.65 -5.5 L-4.1 -3.9 V9 H-7.2z" fill="#cfa73f" stroke="#8a6a1e" stroke-width=".5"/><path d="M-6.6000000000000005 3 l.95 -1.4 l.95 1.4z" fill="#6b4f12"/><path d="M-3.8 -7.9 L-2.25 -9.5 L-0.6999999999999997 -7.9 V9 H-3.8z" fill="#cfa73f" stroke="#8a6a1e" stroke-width=".5"/><path d="M-3.1999999999999997 3 l.95 -1.4 l.95 1.4z" fill="#6b4f12"/><path d="M-0.4 -10.4 L1.15 -12 L2.7 -10.4 V9 H-0.4z" fill="#cfa73f" stroke="#8a6a1e" stroke-width=".5"/><path d="M0.19999999999999996 3 l.95 -1.4 l.95 1.4z" fill="#6b4f12"/><path d="M3 -6.9 L4.55 -8.5 L6.1 -6.9 V9 H3z" fill="#cfa73f" stroke="#8a6a1e" stroke-width=".5"/><path d="M3.6 3 l.95 -1.4 l.95 1.4z" fill="#6b4f12"/><path d="M6 -2.9 L7.55 -4.5 L9.1 -2.9 V9 H6z" fill="#cfa73f" stroke="#8a6a1e" stroke-width=".5"/><path d="M6.6 3 l.95 -1.4 l.95 1.4z" fill="#6b4f12"/><path d="M-7.2 2.2 L-0.4 6 L9.1 1.6" stroke="#5b4210" stroke-width=".9" fill="none"/></g><circle cx="551.3" cy="565.7" r="4.6" fill="#3a3a3a"/><g transform="translate(293.5 596.3) scale(0.82)"><path d="M-6.5 -2.5 L5.5 8.6 M6.5 -2.5 L-5.5 8.6" stroke="#242424" stroke-width="1.25" fill="none"/><path d="M-7.5 8.8 h4 M3.5 8.8 h4" stroke="#242424" stroke-width="1.3"/><ellipse cx="0" cy="9.6" rx="7" ry="1" fill="#000" opacity=".2"/><path d="M-10 -7 L4 -9.6 L10.5 -5 L-3 -2z" fill="#2b2b36"/><path d="M-6.5 -6.6 L2.5 -8.3 L5.2 -6.3 L-3.6 -4.5z" fill="#8f8fd0"/><path d="M-9 -5.6 L-3 -1.6 L10 -4.3 L10.3 -3.3 L-3 -0.6 L-9.6 -4.8z" fill="#e4e4e4"/><path d="M7 -6.8 L10.4 -4.6 L10.4 -3.8 L7 -5.8z" fill="#b03030"/></g><circle cx="551.3" cy="595.7" r="4.6" fill="#3a3a3a"/><g transform="translate(293.5 626.3) scale(0.82)"><path d="M-6.5 -2.5 L5.5 8.6 M6.5 -2.5 L-5.5 8.6" stroke="#242424" stroke-width="1.25" fill="none"/><path d="M-7.5 8.8 h4 M3.5 8.8 h4" stroke="#242424" stroke-width="1.3"/><ellipse cx="0" cy="9.6" rx="7" ry="1" fill="#000" opacity=".2"/><path d="M-10 -7.4 L4 -9.6 L10.5 -5.4 L-3 -2.4z" fill="#c5673a"/><path d="M-7.5 -6.8 L3.2 -8.4 L6.2 -6.4 L-4.4 -4.6z" fill="#3a2a22"/><path d="M-9 -5.8 L-3 -1.8 L10 -4.6 L10.3 -3.4 L-3 -0.6 L-9.6 -4.8z" fill="#e8dccf"/></g><circle cx="551.3" cy="625.7" r="4.6" fill="#3a3a3a"/><g transform="translate(293.5 656.3) scale(0.82)"><path d="M-6.5 -2.5 L5.5 8.6 M6.5 -2.5 L-5.5 8.6" stroke="#242424" stroke-width="1.25" fill="none"/><path d="M-7.5 8.8 h4 M3.5 8.8 h4" stroke="#242424" stroke-width="1.3"/><ellipse cx="0" cy="9.6" rx="7" ry="1" fill="#000" opacity=".2"/><path d="M-10 -8.2 L7 -5.6 L10.5 -3.2 L-6.2 -4.6z" fill="#1e1e1e"/><path d="M-10 -8.2 L-6.2 -4.6 L-6.2 -3.4 L-10 -7z" fill="#3a3a3a"/></g><circle cx="551.3" cy="655.7" r="4.6" fill="#3a3a3a"/><g transform="translate(293.5 686.3) scale(0.82)"><path d="M-6.5 -2.5 L5.5 8.6 M6.5 -2.5 L-5.5 8.6" stroke="#242424" stroke-width="1.25" fill="none"/><path d="M-7.5 8.8 h4 M3.5 8.8 h4" stroke="#242424" stroke-width="1.3"/><ellipse cx="0" cy="9.6" rx="7" ry="1" fill="#000" opacity=".2"/><path d="M-10 -7.4 L4 -9.6 L10.5 -5.4 L-3 -2.4z" fill="#c5673a"/><path d="M-7.5 -6.8 L3.2 -8.4 L6.2 -6.4 L-4.4 -4.6z" fill="#3a2a22"/><path d="M-9 -5.8 L-3 -1.8 L10 -4.6 L10.3 -3.4 L-3 -0.6 L-9.6 -4.8z" fill="#e8dccf"/></g><circle cx="551.3" cy="685.7" r="4.6" fill="#3a3a3a"/><g transform="translate(293.5 715.5) scale(1.0)"><ellipse cx="-1" cy="11.6" rx="10" ry="1.2" fill="#000" opacity=".18"/><path d="M-6.6 5.1 L-5.4 1.2" stroke="#5a2a1c" stroke-width=".8" opacity=".7"/><ellipse cx="-6.6" cy="6.3" rx="1.9" ry="2.3" fill="#b5501f"/><ellipse cx="-7.0" cy="9.2" rx="2.6" ry="2.6" fill="#a9421a"/><ellipse cx="-7.7" cy="6.1" rx="0.8" ry="1.6" fill="#e59466" opacity=".75"/><ellipse cx="-6.0" cy="9.4" rx="1.0" ry="1.6" fill="#6e2410" opacity=".55"/><path d="M1.4 1.4 L3.0 -4.1" stroke="#5a2a1c" stroke-width=".8" opacity=".7"/><ellipse cx="1.3" cy="3.0" rx="2.7" ry="3.2" fill="#b5501f"/><ellipse cx="0.8" cy="7.0" rx="3.6" ry="3.6" fill="#a9421a"/><ellipse cx="-0.2" cy="2.8" rx="1.1" ry="2.2" fill="#e59466" opacity=".75"/><ellipse cx="2.2" cy="7.4" rx="1.4" ry="2.2" fill="#6e2410" opacity=".55"/><path d="M9.0 -0.5 L11.0 -7.6" stroke="#5a2a1c" stroke-width=".8" opacity=".7"/><ellipse cx="8.8" cy="1.5" rx="3.5" ry="4.1" fill="#b5501f"/><ellipse cx="8.2" cy="6.6" rx="4.6" ry="4.6" fill="#a9421a"/><ellipse cx="6.9" cy="1.3" rx="1.4" ry="2.8" fill="#e59466" opacity=".75"/><ellipse cx="10.0" cy="7.2" rx="1.8" ry="2.8" fill="#6e2410" opacity=".55"/><circle cx="11.2" cy="-8.4" r=".8" fill="#e8e0d8" opacity=".8"/></g><circle cx="551.3" cy="715.7" r="4.6" fill="#3a3a3a"/><g transform="translate(293.5 745.5) scale(1.0)"><ellipse cx="-1" cy="11.6" rx="10" ry="1.2" fill="#000" opacity=".18"/><path d="M-6.6 5.1 L-5.4 1.2" stroke="#5a2a1c" stroke-width=".8" opacity=".7"/><ellipse cx="-6.6" cy="6.3" rx="1.9" ry="2.3" fill="#b5501f"/><ellipse cx="-7.0" cy="9.2" rx="2.6" ry="2.6" fill="#a9421a"/><ellipse cx="-7.7" cy="6.1" rx="0.8" ry="1.6" fill="#e59466" opacity=".75"/><ellipse cx="-6.0" cy="9.4" rx="1.0" ry="1.6" fill="#6e2410" opacity=".55"/><path d="M1.4 1.4 L3.0 -4.1" stroke="#5a2a1c" stroke-width=".8" opacity=".7"/><ellipse cx="1.3" cy="3.0" rx="2.7" ry="3.2" fill="#b5501f"/><ellipse cx="0.8" cy="7.0" rx="3.6" ry="3.6" fill="#a9421a"/><ellipse cx="-0.2" cy="2.8" rx="1.1" ry="2.2" fill="#e59466" opacity=".75"/><ellipse cx="2.2" cy="7.4" rx="1.4" ry="2.2" fill="#6e2410" opacity=".55"/><path d="M9.0 -0.5 L11.0 -7.6" stroke="#5a2a1c" stroke-width=".8" opacity=".7"/><ellipse cx="8.8" cy="1.5" rx="3.5" ry="4.1" fill="#b5501f"/><ellipse cx="8.2" cy="6.6" rx="4.6" ry="4.6" fill="#a9421a"/><ellipse cx="6.9" cy="1.3" rx="1.4" ry="2.8" fill="#e59466" opacity=".75"/><ellipse cx="10.0" cy="7.2" rx="1.8" ry="2.8" fill="#6e2410" opacity=".55"/><circle cx="11.2" cy="-8.4" r=".8" fill="#e8e0d8" opacity=".8"/></g><circle cx="551.3" cy="745.7" r="4.6" fill="#3a3a3a"/><path d="M248.6 772.3 h9.8 l-4.9 7.6z" fill="#e3e3e3"/><g transform="translate(293.5 775.5) scale(1.0)"><ellipse cx="-1.5" cy="9.6" rx="6" ry="1.2" fill="#000" opacity=".25"/><path d="M-3.8 -11 C3 -9 9.8 -1.5 10.4 7.6 C6 9.6 1 8.2 -2.6 3.6 C-6 -1 -6.6 -7 -3.8 -11z" fill="#1a1a1a"/><path d="M-3.6 -9.3 C2 -7 7.8 -1 8.8 6.6 C5 7.6 1.4 6.2 -1.8 2.4 C-4.6 -1.4 -5.4 -6 -3.6 -9.3z" fill="#6e6e6e"/><path d="M-3.3 -7.6 C1 -5.6 5.4 -1 6.6 4.8 C3.8 5.2 1.2 4 -1.2 1 C-3.4 -1.8 -4.2 -5 -3.3 -7.6z" fill="#2a2a2a"/><path d="M-6.5 1.5 L-2 4.4 L-3.6 9 L-8.6 8.4z" fill="#111"/></g><circle cx="551.3" cy="775.7" r="4.6" fill="#3a3a3a"/><g transform="translate(293.5 806.0) scale(1.0)"><rect x="-11" y="-8.2" width="22.2" height="16.2" rx="1.8" fill="#2a466c" stroke="#45678f" stroke-width=".9"/><path d="M-9 -.2 L-7.6 .6 L-6 -2.8 L-4.2 3.6 L-2.2 -5.2 L0 5 L2.2 -5.2 L4.2 3.6 L6 -2.8 L7.6 .6 L9.2 -.2" stroke="#55a6ee" stroke-width="1.05" fill="none" stroke-linejoin="round"/></g><circle cx="551.3" cy="805.7" r="4.6" fill="#3a3a3a"/><g transform="translate(293.5 836.0) scale(1.0)"><rect x="-11" y="-8.2" width="22.2" height="16.2" rx="1.8" fill="#2a466c" stroke="#45678f" stroke-width=".9"/><path d="M-9 -.2 L-7.6 .6 L-6 -2.8 L-4.2 3.6 L-2.2 -5.2 L0 5 L2.2 -5.2 L4.2 3.6 L6 -2.8 L7.6 .6 L9.2 -.2" stroke="#55a6ee" stroke-width="1.05" fill="none" stroke-linejoin="round"/></g><circle cx="551.3" cy="835.7" r="4.6" fill="#3a3a3a"/><g transform="translate(293.5 866.0) scale(1.0)"><rect x="-11" y="-8.2" width="22.2" height="16.2" rx="1.8" fill="#2a466c" stroke="#45678f" stroke-width=".9"/><path d="M-9 -.2 L-7.6 .6 L-6 -2.8 L-4.2 3.6 L-2.2 -5.2 L0 5 L2.2 -5.2 L4.2 3.6 L6 -2.8 L7.6 .6 L9.2 -.2" stroke="#55a6ee" stroke-width="1.05" fill="none" stroke-linejoin="round"/></g><circle cx="551.3" cy="865.7" r="4.6" fill="#3a3a3a"/><g transform="translate(293.5 896.0) scale(1.0)"><rect x="-11" y="-8.2" width="22.2" height="16.2" rx="1.8" fill="#2a466c" stroke="#45678f" stroke-width=".9"/><path d="M-9 -.2 L-7.6 .6 L-6 -2.8 L-4.2 3.6 L-2.2 -5.2 L0 5 L2.2 -5.2 L4.2 3.6 L6 -2.8 L7.6 .6 L9.2 -.2" stroke="#55a6ee" stroke-width="1.05" fill="none" stroke-linejoin="round"/></g><circle cx="551.3" cy="895.7" r="4.6" fill="#3a3a3a"/><g transform="translate(293.5 926.3) scale(0.82)"><path d="M-6.5 -2.5 L5.5 8.6 M6.5 -2.5 L-5.5 8.6" stroke="#242424" stroke-width="1.25" fill="none"/><path d="M-7.5 8.8 h4 M3.5 8.8 h4" stroke="#242424" stroke-width="1.3"/><ellipse cx="0" cy="9.6" rx="7" ry="1" fill="#000" opacity=".2"/><path d="M-10 -7 L4 -9.6 L10.5 -5 L-3 -2z" fill="#2b2b36"/><path d="M-6.5 -6.6 L2.5 -8.3 L5.2 -6.3 L-3.6 -4.5z" fill="#8f8fd0"/><path d="M-9 -5.6 L-3 -1.6 L10 -4.3 L10.3 -3.3 L-3 -0.6 L-9.6 -4.8z" fill="#e4e4e4"/><path d="M7 -6.8 L10.4 -4.6 L10.4 -3.8 L7 -5.8z" fill="#b03030"/></g><circle cx="551.3" cy="925.7" r="4.6" fill="#3a3a3a"/><g transform="translate(293.5 955.5) scale(1.0)"><defs><radialGradient id="cyg" cx=".4" cy=".4" r=".7"><stop offset="0" stop-color="#f3dc8f"/><stop offset=".6" stop-color="#c79c3c"/><stop offset="1" stop-color="#8f6a1c"/></radialGradient></defs><ellipse cx="5" cy="-3" rx="6.8" ry="5.6" transform="rotate(-28 5 -3)" fill="url(#cyg)"/><ellipse cx="-3.4" cy="2.8" rx="8.2" ry="6.6" transform="rotate(-28 -3.4 2.8)" fill="url(#cyg)" stroke="#8a671c" stroke-width=".4"/><circle cx="-3.6" cy="2.6" r="1.5" fill="#7a5a16"/></g><circle cx="551.3" cy="955.7" r="4.6" fill="#3a3a3a"/><g transform="translate(293.5 986.0) scale(1.0)"><rect x="-10.6" y="-8" width="21.4" height="16.4" rx="1.2" fill="#3b3b3b" stroke="#2a2a2a" stroke-width=".7"/><rect x="-9.6" y="-7" width="19.4" height="2.6" fill="#8a8a8a"/><rect x="-9.0" y="-3.6" width="1.2" height="10.6" fill="#1e1e1e"/><rect x="-9.3" y="-1.0" width="1.8" height="1.6" fill="#c4c4c4"/><rect x="-6.5" y="-3.6" width="1.2" height="10.6" fill="#1e1e1e"/><rect x="-6.8" y="1.0" width="1.8" height="1.6" fill="#c4c4c4"/><rect x="-4.0" y="-3.6" width="1.2" height="10.6" fill="#1e1e1e"/><rect x="-4.3" y="3.0" width="1.8" height="1.6" fill="#c4c4c4"/><rect x="-1.5" y="-3.6" width="1.2" height="10.6" fill="#1e1e1e"/><rect x="-1.8" y="0.0" width="1.8" height="1.6" fill="#c4c4c4"/><rect x="1.0" y="-3.6" width="1.2" height="10.6" fill="#1e1e1e"/><rect x="0.7" y="2.0" width="1.8" height="1.6" fill="#c4c4c4"/><rect x="3.5" y="-3.6" width="1.2" height="10.6" fill="#1e1e1e"/><rect x="3.2" y="-1.0" width="1.8" height="1.6" fill="#c4c4c4"/><rect x="6.0" y="-3.6" width="1.2" height="10.6" fill="#1e1e1e"/><rect x="5.7" y="1.0" width="1.8" height="1.6" fill="#c4c4c4"/><rect x="8.5" y="-3.6" width="1.2" height="10.6" fill="#1e1e1e"/><rect x="8.2" y="3.0" width="1.8" height="1.6" fill="#c4c4c4"/></g><circle cx="551.3" cy="985.7" r="4.6" fill="#3a3a3a"/></svg>
<svg style="position:absolute;left:0;top:0" width="1920" height="1080" viewBox="0 0 1920 1080"><defs><clipPath id="arrc"><rect x="567.4" y="95" width="1349.6" height="981.3"/></clipPath><pattern id="hatch" width="8.6" height="17.5" patternUnits="userSpaceOnUse" x="848" y="95"><path d="M-2 1 L4.6 8.75 L-2 16.5 M1.6 1 L8.2 8.75 L1.6 16.5" stroke="#333" stroke-width="1.9" fill="none"/></pattern></defs><g clip-path="url(#arrc)"><rect x="567" y="95" width="1351" height="17.6" fill="#363636"/><rect x="567" y="112.6" width="1351" height="18" fill="#3e3e3e"/><rect x="567" y="112.1" width="1351" height="1" fill="#2a2a2a"/><rect x="847.8" y="95.4" width="62.6" height="17" fill="#2a2a2a" stroke="#171717" stroke-width=".9"/><rect x="848.4" y="96" width="61.4" height="15.8" fill="url(#hatch)"/><rect x="567" y="131" width="1351" height="240" fill="#2c3639"/><rect x="567" y="371" width="1351" height="150" fill="#39352d"/><rect x="567" y="521" width="1351" height="240" fill="#3a3230"/><rect x="567" y="761" width="1351" height="210" fill="#2a3038"/><rect x="567" y="971" width="1351" height="30" fill="#2e2e2e"/><rect x="567" y="1001" width="1351" height="80" fill="#2e2e2e"/><rect x="567" y="160.1" width="1351" height="1" fill="#242d30"/><rect x="567" y="190.1" width="1351" height="1" fill="#242d30"/><rect x="567" y="220.1" width="1351" height="1" fill="#242d30"/><rect x="567" y="250.1" width="1351" height="1" fill="#242d30"/><rect x="567" y="280.1" width="1351" height="1" fill="#242d30"/><rect x="567" y="310.1" width="1351" height="1" fill="#242d30"/><rect x="567" y="340.1" width="1351" height="1" fill="#242d30"/><rect x="567" y="370.1" width="1351" height="1" fill="#242d30"/><path d="M576.70 131V371M597.55 131V371M618.41 131V371M639.26 131V371M660.11 131V371M680.97 131V371M701.82 131V371M722.67 131V371M743.52 131V371M764.38 131V371M785.23 131V371M806.08 131V371M826.94 131V371M847.79 131V371M868.64 131V371M889.50 131V371M910.35 131V371M931.20 131V371M952.05 131V371M972.91 131V371M993.76 131V371M1014.61 131V371M1035.47 131V371M1056.32 131V371M1077.17 131V371M1098.03 131V371M1118.88 131V371M1139.73 131V371M1160.58 131V371M1181.44 131V371M1202.29 131V371M1223.14 131V371M1244.00 131V371M1264.85 131V371M1285.70 131V371M1306.56 131V371M1327.41 131V371M1348.26 131V371M1369.11 131V371M1389.97 131V371M1410.82 131V371M1431.67 131V371M1452.53 131V371M1473.38 131V371M1494.23 131V371M1515.09 131V371M1535.94 131V371M1556.79 131V371M1577.64 131V371M1598.50 131V371M1619.35 131V371M1640.20 131V371M1661.06 131V371M1681.91 131V371M1702.76 131V371M1723.62 131V371M1744.47 131V371M1765.32 131V371M1786.17 131V371M1807.03 131V371M1827.88 131V371M1848.73 131V371M1869.59 131V371M1890.44 131V371M1911.29 131V371M1932.15 131V371" stroke="#465256" stroke-width=".85" fill="none"/><rect x="567" y="400.1" width="1351" height="1" fill="#2e2a23"/><rect x="567" y="430.1" width="1351" height="1" fill="#2e2a23"/><rect x="567" y="460.1" width="1351" height="1" fill="#2e2a23"/><rect x="567" y="490.1" width="1351" height="1" fill="#2e2a23"/><rect x="567" y="520.1" width="1351" height="1" fill="#2e2a23"/><path d="M576.70 371V521M597.55 371V521M618.41 371V521M639.26 371V521M660.11 371V521M680.97 371V521M701.82 371V521M722.67 371V521M743.52 371V521M764.38 371V521M785.23 371V521M806.08 371V521M826.94 371V521M847.79 371V521M868.64 371V521M889.50 371V521M910.35 371V521M931.20 371V521M952.05 371V521M972.91 371V521M993.76 371V521M1014.61 371V521M1035.47 371V521M1056.32 371V521M1077.17 371V521M1098.03 371V521M1118.88 371V521M1139.73 371V521M1160.58 371V521M1181.44 371V521M1202.29 371V521M1223.14 371V521M1244.00 371V521M1264.85 371V521M1285.70 371V521M1306.56 371V521M1327.41 371V521M1348.26 371V521M1369.11 371V521M1389.97 371V521M1410.82 371V521M1431.67 371V521M1452.53 371V521M1473.38 371V521M1494.23 371V521M1515.09 371V521M1535.94 371V521M1556.79 371V521M1577.64 371V521M1598.50 371V521M1619.35 371V521M1640.20 371V521M1661.06 371V521M1681.91 371V521M1702.76 371V521M1723.62 371V521M1744.47 371V521M1765.32 371V521M1786.17 371V521M1807.03 371V521M1827.88 371V521M1848.73 371V521M1869.59 371V521M1890.44 371V521M1911.29 371V521M1932.15 371V521" stroke="#524e45" stroke-width=".85" fill="none"/><rect x="567" y="550.1" width="1351" height="1" fill="#2e2725"/><rect x="567" y="580.1" width="1351" height="1" fill="#2e2725"/><rect x="567" y="610.1" width="1351" height="1" fill="#2e2725"/><rect x="567" y="640.1" width="1351" height="1" fill="#2e2725"/><rect x="567" y="670.1" width="1351" height="1" fill="#2e2725"/><rect x="567" y="700.1" width="1351" height="1" fill="#2e2725"/><rect x="567" y="730.1" width="1351" height="1" fill="#2e2725"/><rect x="567" y="760.1" width="1351" height="1" fill="#2e2725"/><path d="M576.70 521V761M597.55 521V761M618.41 521V761M639.26 521V761M660.11 521V761M680.97 521V761M701.82 521V761M722.67 521V761M743.52 521V761M764.38 521V761M785.23 521V761M806.08 521V761M826.94 521V761M847.79 521V761M868.64 521V761M889.50 521V761M910.35 521V761M931.20 521V761M952.05 521V761M972.91 521V761M993.76 521V761M1014.61 521V761M1035.47 521V761M1056.32 521V761M1077.17 521V761M1098.03 521V761M1118.88 521V761M1139.73 521V761M1160.58 521V761M1181.44 521V761M1202.29 521V761M1223.14 521V761M1244.00 521V761M1264.85 521V761M1285.70 521V761M1306.56 521V761M1327.41 521V761M1348.26 521V761M1369.11 521V761M1389.97 521V761M1410.82 521V761M1431.67 521V761M1452.53 521V761M1473.38 521V761M1494.23 521V761M1515.09 521V761M1535.94 521V761M1556.79 521V761M1577.64 521V761M1598.50 521V761M1619.35 521V761M1640.20 521V761M1661.06 521V761M1681.91 521V761M1702.76 521V761M1723.62 521V761M1744.47 521V761M1765.32 521V761M1786.17 521V761M1807.03 521V761M1827.88 521V761M1848.73 521V761M1869.59 521V761M1890.44 521V761M1911.29 521V761M1932.15 521V761" stroke="#534b48" stroke-width=".85" fill="none"/><rect x="567" y="790.1" width="1351" height="1" fill="#22272e"/><rect x="567" y="820.1" width="1351" height="1" fill="#22272e"/><rect x="567" y="850.1" width="1351" height="1" fill="#22272e"/><rect x="567" y="880.1" width="1351" height="1" fill="#22272e"/><rect x="567" y="910.1" width="1351" height="1" fill="#22272e"/><rect x="567" y="940.1" width="1351" height="1" fill="#22272e"/><rect x="567" y="970.1" width="1351" height="1" fill="#22272e"/><path d="M576.70 761V971M597.55 761V971M618.41 761V971M639.26 761V971M660.11 761V971M680.97 761V971M701.82 761V971M722.67 761V971M743.52 761V971M764.38 761V971M785.23 761V971M806.08 761V971M826.94 761V971M847.79 761V971M868.64 761V971M889.50 761V971M910.35 761V971M931.20 761V971M952.05 761V971M972.91 761V971M993.76 761V971M1014.61 761V971M1035.47 761V971M1056.32 761V971M1077.17 761V971M1098.03 761V971M1118.88 761V971M1139.73 761V971M1160.58 761V971M1181.44 761V971M1202.29 761V971M1223.14 761V971M1244.00 761V971M1264.85 761V971M1285.70 761V971M1306.56 761V971M1327.41 761V971M1348.26 761V971M1369.11 761V971M1389.97 761V971M1410.82 761V971M1431.67 761V971M1452.53 761V971M1473.38 761V971M1494.23 761V971M1515.09 761V971M1535.94 761V971M1556.79 761V971M1577.64 761V971M1598.50 761V971M1619.35 761V971M1640.20 761V971M1661.06 761V971M1681.91 761V971M1702.76 761V971M1723.62 761V971M1744.47 761V971M1765.32 761V971M1786.17 761V971M1807.03 761V971M1827.88 761V971M1848.73 761V971M1869.59 761V971M1890.44 761V971M1911.29 761V971M1932.15 761V971" stroke="#454c55" stroke-width=".85" fill="none"/><rect x="567" y="1000.1" width="1351" height="1" fill="#262626"/><path d="M576.70 971V1001M597.55 971V1001M618.41 971V1001M639.26 971V1001M660.11 971V1001M680.97 971V1001M701.82 971V1001M722.67 971V1001M743.52 971V1001M764.38 971V1001M785.23 971V1001M806.08 971V1001M826.94 971V1001M847.79 971V1001M868.64 971V1001M889.50 971V1001M910.35 971V1001M931.20 971V1001M952.05 971V1001M972.91 971V1001M993.76 971V1001M1014.61 971V1001M1035.47 971V1001M1056.32 971V1001M1077.17 971V1001M1098.03 971V1001M1118.88 971V1001M1139.73 971V1001M1160.58 971V1001M1181.44 971V1001M1202.29 971V1001M1223.14 971V1001M1244.00 971V1001M1264.85 971V1001M1285.70 971V1001M1306.56 971V1001M1327.41 971V1001M1348.26 971V1001M1369.11 971V1001M1389.97 971V1001M1410.82 971V1001M1431.67 971V1001M1452.53 971V1001M1473.38 971V1001M1494.23 971V1001M1515.09 971V1001M1535.94 971V1001M1556.79 971V1001M1577.64 971V1001M1598.50 971V1001M1619.35 971V1001M1640.20 971V1001M1661.06 971V1001M1681.91 971V1001M1702.76 971V1001M1723.62 971V1001M1744.47 971V1001M1765.32 971V1001M1786.17 971V1001M1807.03 971V1001M1827.88 971V1001M1848.73 971V1001M1869.59 971V1001M1890.44 971V1001M1911.29 971V1001M1932.15 971V1001" stroke="#494949" stroke-width=".85" fill="none"/><path d="M581.91 124.2V130.5M587.13 124.2V130.5M592.34 124.2V130.5M602.77 124.2V130.5M607.98 124.2V130.5M613.19 124.2V130.5M623.62 124.2V130.5M628.83 124.2V130.5M634.05 124.2V130.5M644.47 124.2V130.5M649.69 124.2V130.5M654.90 124.2V130.5M665.33 124.2V130.5M670.54 124.2V130.5M675.75 124.2V130.5M686.18 124.2V130.5M691.39 124.2V130.5M696.60 124.2V130.5M707.03 124.2V130.5M712.24 124.2V130.5M717.46 124.2V130.5M727.88 124.2V130.5M733.10 124.2V130.5M738.31 124.2V130.5M748.74 124.2V130.5M753.95 124.2V130.5M759.16 124.2V130.5M769.59 124.2V130.5M774.80 124.2V130.5M780.02 124.2V130.5M790.44 124.2V130.5M795.66 124.2V130.5M800.87 124.2V130.5M811.30 124.2V130.5M816.51 124.2V130.5M821.72 124.2V130.5M832.15 124.2V130.5M837.36 124.2V130.5M842.58 124.2V130.5M853.00 124.2V130.5M858.22 124.2V130.5M863.43 124.2V130.5M873.86 124.2V130.5M879.07 124.2V130.5M884.28 124.2V130.5M894.71 124.2V130.5M899.92 124.2V130.5M905.13 124.2V130.5M915.56 124.2V130.5M920.77 124.2V130.5M925.99 124.2V130.5M936.41 124.2V130.5M941.63 124.2V130.5M946.84 124.2V130.5M957.27 124.2V130.5M962.48 124.2V130.5M967.69 124.2V130.5M978.12 124.2V130.5M983.33 124.2V130.5M988.55 124.2V130.5M998.97 124.2V130.5M1004.19 124.2V130.5M1009.40 124.2V130.5M1019.83 124.2V130.5M1025.04 124.2V130.5M1030.25 124.2V130.5M1040.68 124.2V130.5M1045.89 124.2V130.5M1051.11 124.2V130.5M1061.53 124.2V130.5M1066.75 124.2V130.5M1071.96 124.2V130.5M1082.39 124.2V130.5M1087.60 124.2V130.5M1092.81 124.2V130.5M1103.24 124.2V130.5M1108.45 124.2V130.5M1113.66 124.2V130.5M1124.09 124.2V130.5M1129.30 124.2V130.5M1134.52 124.2V130.5M1144.94 124.2V130.5M1150.16 124.2V130.5M1155.37 124.2V130.5M1165.80 124.2V130.5M1171.01 124.2V130.5M1176.22 124.2V130.5M1186.65 124.2V130.5M1191.86 124.2V130.5M1197.08 124.2V130.5M1207.50 124.2V130.5M1212.72 124.2V130.5M1217.93 124.2V130.5M1228.36 124.2V130.5M1233.57 124.2V130.5M1238.78 124.2V130.5M1249.21 124.2V130.5M1254.42 124.2V130.5M1259.64 124.2V130.5M1270.06 124.2V130.5M1275.28 124.2V130.5M1280.49 124.2V130.5M1290.92 124.2V130.5M1296.13 124.2V130.5M1301.34 124.2V130.5M1311.77 124.2V130.5M1316.98 124.2V130.5M1322.19 124.2V130.5M1332.62 124.2V130.5M1337.83 124.2V130.5M1343.05 124.2V130.5M1353.47 124.2V130.5M1358.69 124.2V130.5M1363.90 124.2V130.5M1374.33 124.2V130.5M1379.54 124.2V130.5M1384.75 124.2V130.5M1395.18 124.2V130.5M1400.39 124.2V130.5M1405.61 124.2V130.5M1416.03 124.2V130.5M1421.25 124.2V130.5M1426.46 124.2V130.5M1436.89 124.2V130.5M1442.10 124.2V130.5M1447.31 124.2V130.5M1457.74 124.2V130.5M1462.95 124.2V130.5M1468.17 124.2V130.5M1478.59 124.2V130.5M1483.81 124.2V130.5M1489.02 124.2V130.5M1499.45 124.2V130.5M1504.66 124.2V130.5M1509.87 124.2V130.5M1520.30 124.2V130.5M1525.51 124.2V130.5M1530.72 124.2V130.5M1541.15 124.2V130.5M1546.36 124.2V130.5M1551.58 124.2V130.5M1562.00 124.2V130.5M1567.22 124.2V130.5M1572.43 124.2V130.5M1582.86 124.2V130.5M1588.07 124.2V130.5M1593.28 124.2V130.5M1603.71 124.2V130.5M1608.92 124.2V130.5M1614.14 124.2V130.5M1624.56 124.2V130.5M1629.78 124.2V130.5M1634.99 124.2V130.5M1645.42 124.2V130.5M1650.63 124.2V130.5M1655.84 124.2V130.5M1666.27 124.2V130.5M1671.48 124.2V130.5M1676.70 124.2V130.5M1687.12 124.2V130.5M1692.34 124.2V130.5M1697.55 124.2V130.5M1707.98 124.2V130.5M1713.19 124.2V130.5M1718.40 124.2V130.5M1728.83 124.2V130.5M1734.04 124.2V130.5M1739.25 124.2V130.5M1749.68 124.2V130.5M1754.89 124.2V130.5M1760.11 124.2V130.5M1770.53 124.2V130.5M1775.75 124.2V130.5M1780.96 124.2V130.5M1791.39 124.2V130.5M1796.60 124.2V130.5M1801.81 124.2V130.5M1812.24 124.2V130.5M1817.45 124.2V130.5M1822.67 124.2V130.5M1833.09 124.2V130.5M1838.31 124.2V130.5M1843.52 124.2V130.5M1853.95 124.2V130.5M1859.16 124.2V130.5M1864.37 124.2V130.5M1874.80 124.2V130.5M1880.01 124.2V130.5M1885.23 124.2V130.5M1895.65 124.2V130.5M1900.87 124.2V130.5M1906.08 124.2V130.5M1916.51 124.2V130.5M1921.72 124.2V130.5M1926.93 124.2V130.5M1937.36 124.2V130.5M1942.57 124.2V130.5M1947.78 124.2V130.5" stroke="#686868" stroke-width=".85" fill="none"/><path d="M597.55 114.8V130.5M618.41 114.8V130.5M639.26 114.8V130.5M680.97 114.8V130.5M701.82 114.8V130.5M722.67 114.8V130.5M764.38 114.8V130.5M785.23 114.8V130.5M806.08 114.8V130.5M847.79 114.8V130.5M868.64 114.8V130.5M889.50 114.8V130.5M931.20 114.8V130.5M952.05 114.8V130.5M972.91 114.8V130.5M1014.61 114.8V130.5M1035.47 114.8V130.5M1056.32 114.8V130.5M1098.03 114.8V130.5M1118.88 114.8V130.5M1139.73 114.8V130.5M1181.44 114.8V130.5M1202.29 114.8V130.5M1223.14 114.8V130.5M1264.85 114.8V130.5M1285.70 114.8V130.5M1306.56 114.8V130.5M1348.26 114.8V130.5M1369.11 114.8V130.5M1389.97 114.8V130.5M1431.67 114.8V130.5M1452.53 114.8V130.5M1473.38 114.8V130.5M1515.09 114.8V130.5M1535.94 114.8V130.5M1556.79 114.8V130.5M1598.50 114.8V130.5M1619.35 114.8V130.5M1640.20 114.8V130.5M1681.91 114.8V130.5M1702.76 114.8V130.5M1723.62 114.8V130.5M1765.32 114.8V130.5M1786.17 114.8V130.5M1807.03 114.8V130.5M1848.73 114.8V130.5M1869.59 114.8V130.5M1890.44 114.8V130.5M1932.15 114.8V130.5" stroke="#6e6e6e" stroke-width=".9" fill="none"/><path d="M576.70 98V130.5M660.11 98V130.5M743.52 98V130.5M826.94 98V130.5M910.35 98V130.5M993.76 98V130.5M1077.17 98V130.5M1160.58 98V130.5M1244.00 98V130.5M1327.41 98V130.5M1410.82 98V130.5M1494.23 98V130.5M1577.64 98V130.5M1661.06 98V130.5M1744.47 98V130.5M1827.88 98V130.5M1911.29 98V130.5" stroke="#7e7e7e" stroke-width=".9" fill="none"/><rect x="847.8" y="98" width="1" height="14" fill="#171717"/><text x="580.30" y="106.70" font-size="12.2" fill="#e6e6e6" text-anchor="start" stroke="#e6e6e6" stroke-width=".3" textLength="6.0" lengthAdjust="spacingAndGlyphs">1</text><text x="663.71" y="106.70" font-size="12.2" fill="#e6e6e6" text-anchor="start" stroke="#e6e6e6" stroke-width=".3" textLength="7.2" lengthAdjust="spacingAndGlyphs">5</text><text x="747.12" y="106.70" font-size="12.2" fill="#e6e6e6" text-anchor="start" stroke="#e6e6e6" stroke-width=".3" textLength="7.2" lengthAdjust="spacingAndGlyphs">9</text><text x="830.54" y="106.70" font-size="12.2" fill="#e6e6e6" text-anchor="start" stroke="#e6e6e6" stroke-width=".3" textLength="14.5" lengthAdjust="spacingAndGlyphs">13</text><text x="913.95" y="106.70" font-size="12.2" fill="#e6e6e6" text-anchor="start" stroke="#e6e6e6" stroke-width=".3" textLength="14.5" lengthAdjust="spacingAndGlyphs">17</text><text x="997.36" y="106.70" font-size="12.2" fill="#e6e6e6" text-anchor="start" stroke="#e6e6e6" stroke-width=".3" textLength="14.5" lengthAdjust="spacingAndGlyphs">21</text><text x="1080.77" y="106.70" font-size="12.2" fill="#e6e6e6" text-anchor="start" stroke="#e6e6e6" stroke-width=".3" textLength="14.5" lengthAdjust="spacingAndGlyphs">25</text><text x="1164.18" y="106.70" font-size="12.2" fill="#e6e6e6" text-anchor="start" stroke="#e6e6e6" stroke-width=".3" textLength="14.5" lengthAdjust="spacingAndGlyphs">29</text><text x="1247.60" y="106.70" font-size="12.2" fill="#e6e6e6" text-anchor="start" stroke="#e6e6e6" stroke-width=".3" textLength="14.5" lengthAdjust="spacingAndGlyphs">33</text><text x="1331.01" y="106.70" font-size="12.2" fill="#e6e6e6" text-anchor="start" stroke="#e6e6e6" stroke-width=".3" textLength="14.5" lengthAdjust="spacingAndGlyphs">37</text><text x="1414.42" y="106.70" font-size="12.2" fill="#e6e6e6" text-anchor="start" stroke="#e6e6e6" stroke-width=".3" textLength="14.5" lengthAdjust="spacingAndGlyphs">41</text><text x="1497.83" y="106.70" font-size="12.2" fill="#e6e6e6" text-anchor="start" stroke="#e6e6e6" stroke-width=".3" textLength="14.5" lengthAdjust="spacingAndGlyphs">45</text><text x="1581.24" y="106.70" font-size="12.2" fill="#e6e6e6" text-anchor="start" stroke="#e6e6e6" stroke-width=".3" textLength="14.5" lengthAdjust="spacingAndGlyphs">49</text><text x="1664.66" y="106.70" font-size="12.2" fill="#e6e6e6" text-anchor="start" stroke="#e6e6e6" stroke-width=".3" textLength="14.5" lengthAdjust="spacingAndGlyphs">53</text><text x="1748.07" y="106.70" font-size="12.2" fill="#e6e6e6" text-anchor="start" stroke="#e6e6e6" stroke-width=".3" textLength="14.5" lengthAdjust="spacingAndGlyphs">57</text><text x="1831.48" y="106.70" font-size="12.2" fill="#e6e6e6" text-anchor="start" stroke="#e6e6e6" stroke-width=".3" textLength="14.5" lengthAdjust="spacingAndGlyphs">61</text><text x="1914.89" y="106.70" font-size="12.2" fill="#e6e6e6" text-anchor="start" stroke="#e6e6e6" stroke-width=".3" textLength="14.5" lengthAdjust="spacingAndGlyphs">65</text><rect x="567" y="130.3" width="1351" height="1.2" fill="#191919"/><path d="M567.6 96.6 L575.6 103.6 L567.6 110.6z" fill="#8a8a8a"/><path d="M576.7 95 V131" stroke="#c8c8c8" stroke-width=".9" stroke-dasharray="1 1.4" opacity=".6"/><path d="M576.7 131 V371" stroke="#7b8b90" stroke-width=".9" stroke-dasharray="1 1.3" opacity=".55"/><text x="576.20" y="150.10" font-size="11.2" fill="#93d7f2" font-weight="bold" text-anchor="start" >Pianos</text><text x="1599.90" y="150.10" font-size="11.2" fill="#93d7f2" font-weight="bold" text-anchor="start" >Pianos</text><text x="576.20" y="390.10" font-size="11.2" fill="#fbefc0" font-weight="bold" text-anchor="start" >Percussion</text><text x="1599.90" y="390.10" font-size="11.2" fill="#fbefc0" font-weight="bold" text-anchor="start" >Percussion</text><text x="576.20" y="540.10" font-size="11.2" fill="#f9c4a6" font-weight="bold" text-anchor="start" >Backing Instruments</text><text x="1599.90" y="540.10" font-size="11.2" fill="#f9c4a6" font-weight="bold" text-anchor="start" >Backing Instruments</text><text x="576.20" y="780.10" font-size="11.2" fill="#a9cdf7" font-weight="bold" text-anchor="start" >Sound Effects</text><text x="1599.90" y="780.10" font-size="11.2" fill="#a9cdf7" font-weight="bold" text-anchor="start" >Sound Effects</text><rect x="680.82" y="161.60" width="41.41" height="27.9" rx="3.5" fill="#23708a" stroke="#08141a" stroke-width="1.0"/><svg x="680.82" y="161.60" width="41.01" height="27.9" viewBox="0 0 41.01 27.9"><rect x=".4" y="21.7" width="38.01" height="2" fill="#8ed1e9"/><rect x="4.0" y="24.7" width="1.6" height="1.2" fill="#08141a" opacity=".35"/><rect x="7.2" y="24.7" width="1.6" height="1.2" fill="#08141a" opacity=".35"/><rect x="10.4" y="24.7" width="1.6" height="1.2" fill="#08141a" opacity=".35"/><rect x="13.6" y="24.7" width="1.6" height="1.2" fill="#08141a" opacity=".35"/><rect x="16.8" y="24.7" width="1.6" height="1.2" fill="#08141a" opacity=".35"/><rect x="20.0" y="24.7" width="1.6" height="1.2" fill="#08141a" opacity=".35"/><rect x="23.2" y="24.7" width="1.6" height="1.2" fill="#08141a" opacity=".35"/><rect x="26.4" y="24.7" width="1.6" height="1.2" fill="#08141a" opacity=".35"/><rect x="29.6" y="24.7" width="1.6" height="1.2" fill="#08141a" opacity=".35"/><rect x="32.8" y="24.7" width="1.6" height="1.2" fill="#08141a" opacity=".35"/><text x="5.60" y="13.40" font-size="11.1" fill="#d3eefa" text-anchor="start" stroke="#d3eefa" stroke-width=".22">Em Ma</text></svg><rect x="722.52" y="161.60" width="20.55" height="27.9" rx="3.5" fill="#23708a" stroke="#08141a" stroke-width="1.0"/><svg x="722.52" y="161.60" width="20.15" height="27.9" viewBox="0 0 20.15 27.9"><rect x=".4" y="21.7" width="19.95" height="2" fill="#8ed1e9"/><text x="5.60" y="13.40" font-size="11.1" fill="#d3eefa" text-anchor="start" stroke="#d3eefa" stroke-width=".22">G</text></svg><rect x="743.37" y="161.60" width="20.55" height="27.9" rx="3.5" fill="#23708a" stroke="#08141a" stroke-width="1.0"/><svg x="743.37" y="161.60" width="20.15" height="27.9" viewBox="0 0 20.15 27.9"><rect x=".4" y="21.7" width="19.95" height="2" fill="#8ed1e9"/><text x="5.60" y="13.40" font-size="11.1" fill="#d3eefa" text-anchor="start" stroke="#d3eefa" stroke-width=".22">A</text></svg><rect x="764.23" y="161.60" width="20.55" height="27.9" rx="3.5" fill="#23708a" stroke="#08141a" stroke-width="1.0"/><svg x="764.23" y="161.60" width="20.15" height="27.9" viewBox="0 0 20.15 27.9"><rect x=".4" y="21.7" width="19.95" height="2" fill="#8ed1e9"/><text x="5.60" y="13.40" font-size="11.1" fill="#d3eefa" text-anchor="start" stroke="#d3eefa" stroke-width=".22">E</text></svg><rect x="785.08" y="161.60" width="41.41" height="27.9" rx="3.5" fill="#23708a" stroke="#08141a" stroke-width="1.0"/><svg x="785.08" y="161.60" width="41.01" height="27.9" viewBox="0 0 41.01 27.9"><rect x=".4" y="21.7" width="38.01" height="2" fill="#8ed1e9"/><text x="5.60" y="13.40" font-size="11.1" fill="#d3eefa" text-anchor="start" stroke="#d3eefa" stroke-width=".22">Em M</text></svg><rect x="826.79" y="161.60" width="20.55" height="27.9" rx="3.5" fill="#23708a" stroke="#08141a" stroke-width="1.0"/><svg x="826.79" y="161.60" width="20.15" height="27.9" viewBox="0 0 20.15 27.9"><rect x=".4" y="21.7" width="19.95" height="2" fill="#8ed1e9"/><text x="5.60" y="13.40" font-size="11.1" fill="#d3eefa" text-anchor="start" stroke="#d3eefa" stroke-width=".22">G</text></svg><rect x="847.64" y="161.60" width="20.55" height="27.9" rx="3.5" fill="#23708a" stroke="#08141a" stroke-width="1.0"/><svg x="847.64" y="161.60" width="20.15" height="27.9" viewBox="0 0 20.15 27.9"><rect x=".4" y="21.7" width="19.95" height="2" fill="#8ed1e9"/><text x="5.60" y="13.40" font-size="11.1" fill="#d3eefa" text-anchor="start" stroke="#d3eefa" stroke-width=".22">A</text></svg><rect x="868.49" y="161.60" width="20.55" height="27.9" rx="3.5" fill="#23708a" stroke="#08141a" stroke-width="1.0"/><svg x="868.49" y="161.60" width="20.15" height="27.9" viewBox="0 0 20.15 27.9"><rect x=".4" y="21.7" width="19.95" height="2" fill="#8ed1e9"/><text x="5.60" y="13.40" font-size="11.1" fill="#d3eefa" text-anchor="start" stroke="#d3eefa" stroke-width=".22">E</text></svg><rect x="889.35" y="161.60" width="20.55" height="27.9" rx="3.5" fill="#23708a" stroke="#08141a" stroke-width="1.0"/><svg x="889.35" y="161.60" width="20.15" height="27.9" viewBox="0 0 20.15 27.9"><rect x=".4" y="21.7" width="19.95" height="2" fill="#8ed1e9"/><text x="5.60" y="13.40" font-size="11.1" fill="#d3eefa" text-anchor="start" stroke="#d3eefa" stroke-width=".22">A</text></svg><rect x="910.20" y="161.60" width="20.55" height="27.9" rx="3.5" fill="#23708a" stroke="#08141a" stroke-width="1.0"/><svg x="910.20" y="161.60" width="20.15" height="27.9" viewBox="0 0 20.15 27.9"><rect x=".4" y="21.7" width="19.95" height="2" fill="#8ed1e9"/><text x="5.60" y="13.40" font-size="11.1" fill="#d3eefa" text-anchor="start" stroke="#d3eefa" stroke-width=".22">G</text></svg><rect x="931.05" y="161.60" width="20.55" height="27.9" rx="3.5" fill="#23708a" stroke="#08141a" stroke-width="1.0"/><svg x="931.05" y="161.60" width="20.15" height="27.9" viewBox="0 0 20.15 27.9"><rect x=".4" y="21.7" width="19.95" height="2" fill="#8ed1e9"/><text x="5.60" y="13.40" font-size="11.1" fill="#d3eefa" text-anchor="start" stroke="#d3eefa" stroke-width=".22">E</text></svg><rect x="951.90" y="161.60" width="41.41" height="27.9" rx="3.5" fill="#23708a" stroke="#08141a" stroke-width="1.0"/><svg x="951.90" y="161.60" width="41.01" height="27.9" viewBox="0 0 41.01 27.9"><rect x=".4" y="21.7" width="38.01" height="2" fill="#8ed1e9"/><text x="5.60" y="13.40" font-size="11.1" fill="#d3eefa" text-anchor="start" stroke="#d3eefa" stroke-width=".22">Em Ma</text></svg><rect x="993.61" y="161.60" width="20.55" height="27.9" rx="3.5" fill="#23708a" stroke="#08141a" stroke-width="1.0"/><svg x="993.61" y="161.60" width="20.15" height="27.9" viewBox="0 0 20.15 27.9"><rect x=".4" y="21.7" width="19.95" height="2" fill="#8ed1e9"/><text x="5.60" y="13.40" font-size="11.1" fill="#d3eefa" text-anchor="start" stroke="#d3eefa" stroke-width=".22">G</text></svg><rect x="1014.46" y="161.60" width="20.55" height="27.9" rx="3.5" fill="#23708a" stroke="#08141a" stroke-width="1.0"/><svg x="1014.46" y="161.60" width="20.15" height="27.9" viewBox="0 0 20.15 27.9"><rect x=".4" y="21.7" width="19.95" height="2" fill="#8ed1e9"/><text x="5.60" y="13.40" font-size="11.1" fill="#d3eefa" text-anchor="start" stroke="#d3eefa" stroke-width=".22">A</text></svg><rect x="1035.32" y="161.60" width="20.55" height="27.9" rx="3.5" fill="#23708a" stroke="#08141a" stroke-width="1.0"/><svg x="1035.32" y="161.60" width="20.15" height="27.9" viewBox="0 0 20.15 27.9"><rect x=".4" y="21.7" width="19.95" height="2" fill="#8ed1e9"/><text x="5.60" y="13.40" font-size="11.1" fill="#d3eefa" text-anchor="start" stroke="#d3eefa" stroke-width=".22">E</text></svg><rect x="1056.17" y="161.60" width="20.55" height="27.9" rx="3.5" fill="#23708a" stroke="#08141a" stroke-width="1.0"/><svg x="1056.17" y="161.60" width="20.15" height="27.9" viewBox="0 0 20.15 27.9"><rect x=".4" y="21.7" width="19.95" height="2" fill="#8ed1e9"/><text x="5.60" y="13.40" font-size="11.1" fill="#d3eefa" text-anchor="start" stroke="#d3eefa" stroke-width=".22">A</text></svg><rect x="1077.02" y="161.60" width="20.55" height="27.9" rx="3.5" fill="#23708a" stroke="#08141a" stroke-width="1.0"/><svg x="1077.02" y="161.60" width="20.15" height="27.9" viewBox="0 0 20.15 27.9"><rect x=".4" y="21.7" width="19.95" height="2" fill="#8ed1e9"/><text x="5.60" y="13.40" font-size="11.1" fill="#d3eefa" text-anchor="start" stroke="#d3eefa" stroke-width=".22">G</text></svg><rect x="1097.88" y="161.60" width="41.41" height="27.9" rx="3.5" fill="#23708a" stroke="#08141a" stroke-width="1.0"/><svg x="1097.88" y="161.60" width="41.01" height="27.9" viewBox="0 0 41.01 27.9"><rect x=".4" y="21.7" width="40.81" height="2" fill="#8ed1e9"/><text x="5.60" y="13.40" font-size="11.1" fill="#d3eefa" text-anchor="start" stroke="#d3eefa" stroke-width=".22">Ending</text></svg><rect x="1243.85" y="161.60" width="166.52" height="27.9" rx="3.5" fill="#23708a" stroke="#08141a" stroke-width="1.0"/><svg x="1243.85" y="161.60" width="166.12" height="27.9" viewBox="0 0 166.12 27.9"><rect x=".4" y="21.7" width="165.92" height="2" fill="#8ed1e9"/><text x="5.60" y="13.40" font-size="11.1" fill="#d3eefa" text-anchor="start" stroke="#d3eefa" stroke-width=".22">Middle 1</text></svg><rect x="1410.67" y="161.60" width="166.52" height="27.9" rx="3.5" fill="#23708a" stroke="#08141a" stroke-width="1.0"/><svg x="1410.67" y="161.60" width="166.12" height="27.9" viewBox="0 0 166.12 27.9"><rect x=".4" y="21.7" width="165.92" height="2" fill="#8ed1e9"/><text x="5.60" y="13.40" font-size="11.1" fill="#d3eefa" text-anchor="start" stroke="#d3eefa" stroke-width=".22">Middle 1</text></svg><rect x="1577.49" y="161.60" width="166.52" height="27.9" rx="3.5" fill="#23708a" stroke="#08141a" stroke-width="1.0"/><svg x="1577.49" y="161.60" width="166.12" height="27.9" viewBox="0 0 166.12 27.9"><rect x=".4" y="21.7" width="165.92" height="2" fill="#8ed1e9"/><text x="5.60" y="13.40" font-size="11.1" fill="#d3eefa" text-anchor="start" stroke="#d3eefa" stroke-width=".22">Middle 2</text></svg><rect x="680.82" y="191.60" width="41.41" height="27.9" rx="3.5" fill="#23708a" stroke="#08141a" stroke-width="1.0"/><svg x="680.82" y="191.60" width="41.01" height="27.9" viewBox="0 0 41.01 27.9"><rect x=".4" y="21.7" width="38.01" height="2" fill="#8ed1e9"/><rect x="4.0" y="24.7" width="1.6" height="1.2" fill="#08141a" opacity=".35"/><rect x="7.2" y="24.7" width="1.6" height="1.2" fill="#08141a" opacity=".35"/><rect x="10.4" y="24.7" width="1.6" height="1.2" fill="#08141a" opacity=".35"/><rect x="13.6" y="24.7" width="1.6" height="1.2" fill="#08141a" opacity=".35"/><rect x="16.8" y="24.7" width="1.6" height="1.2" fill="#08141a" opacity=".35"/><rect x="20.0" y="24.7" width="1.6" height="1.2" fill="#08141a" opacity=".35"/><rect x="23.2" y="24.7" width="1.6" height="1.2" fill="#08141a" opacity=".35"/><rect x="26.4" y="24.7" width="1.6" height="1.2" fill="#08141a" opacity=".35"/><rect x="29.6" y="24.7" width="1.6" height="1.2" fill="#08141a" opacity=".35"/><rect x="32.8" y="24.7" width="1.6" height="1.2" fill="#08141a" opacity=".35"/><text x="5.60" y="13.40" font-size="11.1" fill="#d3eefa" text-anchor="start" stroke="#d3eefa" stroke-width=".22">Em Ma</text></svg><rect x="722.52" y="191.60" width="20.55" height="27.9" rx="3.5" fill="#23708a" stroke="#08141a" stroke-width="1.0"/><svg x="722.52" y="191.60" width="20.15" height="27.9" viewBox="0 0 20.15 27.9"><rect x=".4" y="21.7" width="19.95" height="2" fill="#8ed1e9"/><text x="5.60" y="13.40" font-size="11.1" fill="#d3eefa" text-anchor="start" stroke="#d3eefa" stroke-width=".22">G</text></svg><rect x="743.37" y="191.60" width="20.55" height="27.9" rx="3.5" fill="#23708a" stroke="#08141a" stroke-width="1.0"/><svg x="743.37" y="191.60" width="20.15" height="27.9" viewBox="0 0 20.15 27.9"><rect x=".4" y="21.7" width="19.95" height="2" fill="#8ed1e9"/><text x="5.60" y="13.40" font-size="11.1" fill="#d3eefa" text-anchor="start" stroke="#d3eefa" stroke-width=".22">A</text></svg><rect x="764.23" y="191.60" width="20.55" height="27.9" rx="3.5" fill="#23708a" stroke="#08141a" stroke-width="1.0"/><svg x="764.23" y="191.60" width="20.15" height="27.9" viewBox="0 0 20.15 27.9"><rect x=".4" y="21.7" width="19.95" height="2" fill="#8ed1e9"/><text x="5.60" y="13.40" font-size="11.1" fill="#d3eefa" text-anchor="start" stroke="#d3eefa" stroke-width=".22">E</text></svg><rect x="785.08" y="191.60" width="41.41" height="27.9" rx="3.5" fill="#23708a" stroke="#08141a" stroke-width="1.0"/><svg x="785.08" y="191.60" width="41.01" height="27.9" viewBox="0 0 41.01 27.9"><rect x=".4" y="21.7" width="38.01" height="2" fill="#8ed1e9"/><text x="5.60" y="13.40" font-size="11.1" fill="#d3eefa" text-anchor="start" stroke="#d3eefa" stroke-width=".22">Em M</text></svg><rect x="826.79" y="191.60" width="20.55" height="27.9" rx="3.5" fill="#23708a" stroke="#08141a" stroke-width="1.0"/><svg x="826.79" y="191.60" width="20.15" height="27.9" viewBox="0 0 20.15 27.9"><rect x=".4" y="21.7" width="19.95" height="2" fill="#8ed1e9"/><text x="5.60" y="13.40" font-size="11.1" fill="#d3eefa" text-anchor="start" stroke="#d3eefa" stroke-width=".22">G</text></svg><rect x="847.64" y="191.60" width="20.55" height="27.9" rx="3.5" fill="#23708a" stroke="#08141a" stroke-width="1.0"/><svg x="847.64" y="191.60" width="20.15" height="27.9" viewBox="0 0 20.15 27.9"><rect x=".4" y="21.7" width="19.95" height="2" fill="#8ed1e9"/><text x="5.60" y="13.40" font-size="11.1" fill="#d3eefa" text-anchor="start" stroke="#d3eefa" stroke-width=".22">A</text></svg><rect x="868.49" y="191.60" width="20.55" height="27.9" rx="3.5" fill="#23708a" stroke="#08141a" stroke-width="1.0"/><svg x="868.49" y="191.60" width="20.15" height="27.9" viewBox="0 0 20.15 27.9"><rect x=".4" y="21.7" width="19.95" height="2" fill="#8ed1e9"/><text x="5.60" y="13.40" font-size="11.1" fill="#d3eefa" text-anchor="start" stroke="#d3eefa" stroke-width=".22">E</text></svg><rect x="889.35" y="191.60" width="20.55" height="27.9" rx="3.5" fill="#23708a" stroke="#08141a" stroke-width="1.0"/><svg x="889.35" y="191.60" width="20.15" height="27.9" viewBox="0 0 20.15 27.9"><rect x=".4" y="21.7" width="19.95" height="2" fill="#8ed1e9"/><text x="5.60" y="13.40" font-size="11.1" fill="#d3eefa" text-anchor="start" stroke="#d3eefa" stroke-width=".22">A</text></svg><rect x="910.20" y="191.60" width="20.55" height="27.9" rx="3.5" fill="#23708a" stroke="#08141a" stroke-width="1.0"/><svg x="910.20" y="191.60" width="20.15" height="27.9" viewBox="0 0 20.15 27.9"><rect x=".4" y="21.7" width="19.95" height="2" fill="#8ed1e9"/><text x="5.60" y="13.40" font-size="11.1" fill="#d3eefa" text-anchor="start" stroke="#d3eefa" stroke-width=".22">G</text></svg><rect x="931.05" y="191.60" width="20.55" height="27.9" rx="3.5" fill="#23708a" stroke="#08141a" stroke-width="1.0"/><svg x="931.05" y="191.60" width="20.15" height="27.9" viewBox="0 0 20.15 27.9"><rect x=".4" y="21.7" width="19.95" height="2" fill="#8ed1e9"/><text x="5.60" y="13.40" font-size="11.1" fill="#d3eefa" text-anchor="start" stroke="#d3eefa" stroke-width=".22">E</text></svg><rect x="951.90" y="191.60" width="41.41" height="27.9" rx="3.5" fill="#23708a" stroke="#08141a" stroke-width="1.0"/><svg x="951.90" y="191.60" width="41.01" height="27.9" viewBox="0 0 41.01 27.9"><rect x=".4" y="21.7" width="38.01" height="2" fill="#8ed1e9"/><text x="5.60" y="13.40" font-size="11.1" fill="#d3eefa" text-anchor="start" stroke="#d3eefa" stroke-width=".22">Em Ma</text></svg><rect x="993.61" y="191.60" width="20.55" height="27.9" rx="3.5" fill="#23708a" stroke="#08141a" stroke-width="1.0"/><svg x="993.61" y="191.60" width="20.15" height="27.9" viewBox="0 0 20.15 27.9"><rect x=".4" y="21.7" width="19.95" height="2" fill="#8ed1e9"/><text x="5.60" y="13.40" font-size="11.1" fill="#d3eefa" text-anchor="start" stroke="#d3eefa" stroke-width=".22">G</text></svg><rect x="1014.46" y="191.60" width="20.55" height="27.9" rx="3.5" fill="#23708a" stroke="#08141a" stroke-width="1.0"/><svg x="1014.46" y="191.60" width="20.15" height="27.9" viewBox="0 0 20.15 27.9"><rect x=".4" y="21.7" width="19.95" height="2" fill="#8ed1e9"/><text x="5.60" y="13.40" font-size="11.1" fill="#d3eefa" text-anchor="start" stroke="#d3eefa" stroke-width=".22">A</text></svg><rect x="1035.32" y="191.60" width="20.55" height="27.9" rx="3.5" fill="#23708a" stroke="#08141a" stroke-width="1.0"/><svg x="1035.32" y="191.60" width="20.15" height="27.9" viewBox="0 0 20.15 27.9"><rect x=".4" y="21.7" width="19.95" height="2" fill="#8ed1e9"/><text x="5.60" y="13.40" font-size="11.1" fill="#d3eefa" text-anchor="start" stroke="#d3eefa" stroke-width=".22">E</text></svg><rect x="1056.17" y="191.60" width="20.55" height="27.9" rx="3.5" fill="#23708a" stroke="#08141a" stroke-width="1.0"/><svg x="1056.17" y="191.60" width="20.15" height="27.9" viewBox="0 0 20.15 27.9"><rect x=".4" y="21.7" width="19.95" height="2" fill="#8ed1e9"/><text x="5.60" y="13.40" font-size="11.1" fill="#d3eefa" text-anchor="start" stroke="#d3eefa" stroke-width=".22">A</text></svg><rect x="1077.02" y="191.60" width="20.55" height="27.9" rx="3.5" fill="#23708a" stroke="#08141a" stroke-width="1.0"/><svg x="1077.02" y="191.60" width="20.15" height="27.9" viewBox="0 0 20.15 27.9"><rect x=".4" y="21.7" width="19.95" height="2" fill="#8ed1e9"/><text x="5.60" y="13.40" font-size="11.1" fill="#d3eefa" text-anchor="start" stroke="#d3eefa" stroke-width=".22">G</text></svg><rect x="1097.88" y="191.60" width="41.41" height="27.9" rx="3.5" fill="#23708a" stroke="#08141a" stroke-width="1.0"/><svg x="1097.88" y="191.60" width="41.01" height="27.9" viewBox="0 0 41.01 27.9"><rect x=".4" y="21.7" width="40.81" height="2" fill="#8ed1e9"/><text x="5.60" y="13.40" font-size="11.1" fill="#d3eefa" text-anchor="start" stroke="#d3eefa" stroke-width=".22">Ending</text></svg><rect x="1243.85" y="191.60" width="166.52" height="27.9" rx="3.5" fill="#23708a" stroke="#08141a" stroke-width="1.0"/><svg x="1243.85" y="191.60" width="166.12" height="27.9" viewBox="0 0 166.12 27.9"><rect x=".4" y="21.7" width="165.92" height="2" fill="#8ed1e9"/><text x="5.60" y="13.40" font-size="11.1" fill="#d3eefa" text-anchor="start" stroke="#d3eefa" stroke-width=".22">Middle 1</text></svg><rect x="1410.67" y="191.60" width="166.52" height="27.9" rx="3.5" fill="#23708a" stroke="#08141a" stroke-width="1.0"/><svg x="1410.67" y="191.60" width="166.12" height="27.9" viewBox="0 0 166.12 27.9"><rect x=".4" y="21.7" width="165.92" height="2" fill="#8ed1e9"/><text x="5.60" y="13.40" font-size="11.1" fill="#d3eefa" text-anchor="start" stroke="#d3eefa" stroke-width=".22">Middle 1</text></svg><rect x="1577.49" y="191.60" width="166.52" height="27.9" rx="3.5" fill="#23708a" stroke="#08141a" stroke-width="1.0"/><svg x="1577.49" y="191.60" width="166.12" height="27.9" viewBox="0 0 166.12 27.9"><rect x=".4" y="21.7" width="165.92" height="2" fill="#8ed1e9"/><text x="5.60" y="13.40" font-size="11.1" fill="#d3eefa" text-anchor="start" stroke="#d3eefa" stroke-width=".22">Middle 2</text></svg><rect x="1577.49" y="221.60" width="166.52" height="27.9" rx="3.5" fill="#23708a" stroke="#08141a" stroke-width="1.0"/><svg x="1577.49" y="221.60" width="166.12" height="27.9" viewBox="0 0 166.12 27.9"><rect x=".4" y="21.7" width="165.92" height="2" fill="#8ed1e9"/><text x="5.60" y="13.40" font-size="11.1" fill="#d3eefa" text-anchor="start" stroke="#d3eefa" stroke-width=".22">Middle 2</text></svg><rect x="680.82" y="251.60" width="41.41" height="27.9" rx="3.5" fill="#23708a" stroke="#08141a" stroke-width="1.0"/><svg x="680.82" y="251.60" width="41.01" height="27.9" viewBox="0 0 41.01 27.9"><rect x=".4" y="21.7" width="38.01" height="2" fill="#8ed1e9"/><rect x="4.0" y="24.7" width="1.6" height="1.2" fill="#08141a" opacity=".35"/><rect x="7.2" y="24.7" width="1.6" height="1.2" fill="#08141a" opacity=".35"/><rect x="10.4" y="24.7" width="1.6" height="1.2" fill="#08141a" opacity=".35"/><rect x="13.6" y="24.7" width="1.6" height="1.2" fill="#08141a" opacity=".35"/><rect x="16.8" y="24.7" width="1.6" height="1.2" fill="#08141a" opacity=".35"/><rect x="20.0" y="24.7" width="1.6" height="1.2" fill="#08141a" opacity=".35"/><rect x="23.2" y="24.7" width="1.6" height="1.2" fill="#08141a" opacity=".35"/><rect x="26.4" y="24.7" width="1.6" height="1.2" fill="#08141a" opacity=".35"/><rect x="29.6" y="24.7" width="1.6" height="1.2" fill="#08141a" opacity=".35"/><rect x="32.8" y="24.7" width="1.6" height="1.2" fill="#08141a" opacity=".35"/><text x="5.60" y="13.40" font-size="11.1" fill="#d3eefa" text-anchor="start" stroke="#d3eefa" stroke-width=".22">Em Ma</text></svg><rect x="1556.64" y="251.60" width="20.55" height="27.9" rx="3.5" fill="#23708a" stroke="#08141a" stroke-width="1.0"/><svg x="1556.64" y="251.60" width="20.15" height="27.9" viewBox="0 0 20.15 27.9"><rect x=".4" y="21.7" width="19.95" height="2" fill="#8ed1e9"/><text x="5.60" y="13.40" font-size="11.1" fill="#d3eefa" text-anchor="start" stroke="#d3eefa" stroke-width=".22">D</text></svg><rect x="1577.49" y="251.60" width="20.55" height="27.9" rx="3.5" fill="#23708a" stroke="#08141a" stroke-width="1.0"/><svg x="1577.49" y="251.60" width="20.15" height="27.9" viewBox="0 0 20.15 27.9"><rect x=".4" y="21.7" width="19.95" height="2" fill="#8ed1e9"/><text x="5.60" y="13.40" font-size="11.1" fill="#d3eefa" text-anchor="start" stroke="#d3eefa" stroke-width=".22">Pi</text></svg><rect x="1556.64" y="281.60" width="20.55" height="27.9" rx="3.5" fill="#23708a" stroke="#08141a" stroke-width="1.0"/><svg x="1556.64" y="281.60" width="20.15" height="27.9" viewBox="0 0 20.15 27.9"><rect x=".4" y="21.7" width="19.95" height="2" fill="#8ed1e9"/><text x="5.60" y="13.40" font-size="11.1" fill="#d3eefa" text-anchor="start" stroke="#d3eefa" stroke-width=".22">D</text></svg><rect x="1577.49" y="311.60" width="166.52" height="27.9" rx="3.5" fill="#23708a" stroke="#08141a" stroke-width="1.0"/><svg x="1577.49" y="311.60" width="166.12" height="27.9" viewBox="0 0 166.12 27.9"><rect x="0.40" y="21.7" width="102.87" height="2" fill="#8ed1e9"/><rect x="114.06" y="21.7" width="21.57" height="2" fill="#8ed1e9"/><rect x="144.75" y="21.7" width="21.57" height="2" fill="#8ed1e9"/><text x="5.60" y="13.40" font-size="11.1" fill="#d3eefa" text-anchor="start" stroke="#d3eefa" stroke-width=".22">Middle 2</text></svg><rect x="1410.67" y="341.60" width="166.52" height="27.9" rx="3.5" fill="#23708a" stroke="#08141a" stroke-width="1.0"/><svg x="1410.67" y="341.60" width="166.12" height="27.9" viewBox="0 0 166.12 27.9"><rect x="0.40" y="21.7" width="40.65" height="2" fill="#8ed1e9"/><rect x="43.54" y="21.7" width="112.83" height="2" fill="#8ed1e9"/><rect x="158.86" y="21.7" width="7.47" height="2" fill="#8ed1e9"/><text x="5.60" y="13.40" font-size="11.1" fill="#d3eefa" text-anchor="start" stroke="#d3eefa" stroke-width=".22">Middle 1</text></svg><rect x="1577.49" y="341.60" width="166.52" height="27.9" rx="3.5" fill="#23708a" stroke="#08141a" stroke-width="1.0"/><svg x="1577.49" y="341.60" width="166.12" height="27.9" viewBox="0 0 166.12 27.9"><rect x="0.40" y="21.7" width="49.78" height="2" fill="#8ed1e9"/><rect x="51.84" y="21.7" width="41.48" height="2" fill="#8ed1e9"/><rect x="103.27" y="21.7" width="63.05" height="2" fill="#8ed1e9"/><text x="5.60" y="13.40" font-size="11.1" fill="#d3eefa" text-anchor="start" stroke="#d3eefa" stroke-width=".22">Middle 2</text></svg><rect x="722.52" y="401.60" width="41.41" height="27.9" rx="3.5" fill="#a98c2d" stroke="#151004" stroke-width="1.0"/><svg x="722.52" y="401.60" width="41.01" height="27.9" viewBox="0 0 41.01 27.9"><rect x="2.5" y="23.1" width="36.4" height="2" fill="#fdeaa3" opacity=".4"/><path d="M3.5 22.3 L6.2 24.1 L3.5 25.9zM5.2 22.1 L7.9 24.1 L5.2 26.1zM7.2 22.1 L9.9 24.1 L7.2 26.1zM9.6 22.6 L12.3 24.1 L9.6 25.6zM12.4 22.1 L15.1 24.1 L12.4 26.1zM15.2 22.3 L17.9 24.1 L15.2 25.9zM16.9 22.3 L19.6 24.1 L16.9 25.9zM18.9 22.6 L21.6 24.1 L18.9 25.6zM20.6 22.6 L23.3 24.1 L20.6 25.6zM23.4 22.3 L26.1 24.1 L23.4 25.9zM25.1 22.1 L27.8 24.1 L25.1 26.1zM26.8 22.6 L29.5 24.1 L26.8 25.6zM29.2 22.1 L31.9 24.1 L29.2 26.1zM31.6 22.1 L34.3 24.1 L31.6 26.1zM33.3 22.1 L36.0 24.1 L33.3 26.1zM35.0 22.6 L37.7 24.1 L35.0 25.6zM37.0 22.1 L39.7 24.1 L37.0 26.1z" fill="#fdeaa3"/><text x="5.60" y="13.40" font-size="11.1" fill="#fff6cc" text-anchor="start" stroke="#fff6cc" stroke-width=".22">Drum</text></svg><rect x="764.23" y="401.60" width="103.96" height="27.9" rx="3.5" fill="#a98c2d" stroke="#151004" stroke-width="1.0"/><svg x="764.23" y="401.60" width="103.56" height="27.9" viewBox="0 0 103.56 27.9"><rect x="2.5" y="23.1" width="99.0" height="2" fill="#fdeaa3" opacity=".4"/><path d="M3.5 22.6 L6.2 24.1 L3.5 25.6zM5.5 22.6 L8.2 24.1 L5.5 25.6zM8.3 22.3 L11.0 24.1 L8.3 25.9zM11.7 22.1 L14.4 24.1 L11.7 26.1zM13.7 22.6 L16.4 24.1 L13.7 25.6zM15.7 22.6 L18.4 24.1 L15.7 25.6zM18.1 22.6 L20.8 24.1 L18.1 25.6zM19.8 22.1 L22.5 24.1 L19.8 26.1zM21.8 22.1 L24.5 24.1 L21.8 26.1zM23.5 22.6 L26.2 24.1 L23.5 25.6zM26.3 22.1 L29.0 24.1 L26.3 26.1zM29.7 22.1 L32.4 24.1 L29.7 26.1zM31.4 22.3 L34.1 24.1 L31.4 25.9zM33.8 22.1 L36.5 24.1 L33.8 26.1zM35.5 22.1 L38.2 24.1 L35.5 26.1zM37.5 22.1 L40.2 24.1 L37.5 26.1zM39.9 22.6 L42.6 24.1 L39.9 25.6zM41.9 22.6 L44.6 24.1 L41.9 25.6zM44.7 22.6 L47.4 24.1 L44.7 25.6zM47.5 22.3 L50.2 24.1 L47.5 25.9zM49.5 22.3 L52.2 24.1 L49.5 25.9zM52.3 22.3 L55.0 24.1 L52.3 25.9zM54.7 22.3 L57.4 24.1 L54.7 25.9zM56.7 22.3 L59.4 24.1 L56.7 25.9zM59.1 22.6 L61.8 24.1 L59.1 25.6zM61.5 22.1 L64.2 24.1 L61.5 26.1zM64.3 22.3 L67.0 24.1 L64.3 25.9zM66.7 22.1 L69.4 24.1 L66.7 26.1zM68.7 22.6 L71.4 24.1 L68.7 25.6zM70.7 22.3 L73.4 24.1 L70.7 25.9zM74.1 22.1 L76.8 24.1 L74.1 26.1zM76.5 22.6 L79.2 24.1 L76.5 25.6zM78.2 22.3 L80.9 24.1 L78.2 25.9zM80.2 22.3 L82.9 24.1 L80.2 25.9zM83.0 22.6 L85.7 24.1 L83.0 25.6zM85.0 22.1 L87.7 24.1 L85.0 26.1zM88.4 22.6 L91.1 24.1 L88.4 25.6zM90.8 22.1 L93.5 24.1 L90.8 26.1zM94.2 22.3 L96.9 24.1 L94.2 25.9zM96.6 22.3 L99.3 24.1 L96.6 25.9zM98.6 22.6 L101.3 24.1 L98.6 25.6z" fill="#fdeaa3"/><text x="5.60" y="13.40" font-size="11.1" fill="#fff6cc" text-anchor="start" stroke="#fff6cc" stroke-width=".22">Drummer</text></svg><rect x="868.49" y="401.60" width="62.26" height="27.9" rx="3.5" fill="#a98c2d" stroke="#151004" stroke-width="1.0"/><svg x="868.49" y="401.60" width="61.86" height="27.9" viewBox="0 0 61.86 27.9"><rect x="2.5" y="23.1" width="57.3" height="2" fill="#fdeaa3" opacity=".4"/><path d="M3.5 22.1 L6.2 24.1 L3.5 26.1zM5.9 22.3 L8.6 24.1 L5.9 25.9zM7.9 22.6 L10.6 24.1 L7.9 25.6zM9.6 22.6 L12.3 24.1 L9.6 25.6zM13.0 22.3 L15.7 24.1 L13.0 25.9zM15.4 22.1 L18.1 24.1 L15.4 26.1zM18.8 22.6 L21.5 24.1 L18.8 25.6zM20.5 22.1 L23.2 24.1 L20.5 26.1zM23.9 22.3 L26.6 24.1 L23.9 25.9zM25.9 22.6 L28.6 24.1 L25.9 25.6zM27.9 22.3 L30.6 24.1 L27.9 25.9zM31.3 22.1 L34.0 24.1 L31.3 26.1zM33.7 22.6 L36.4 24.1 L33.7 25.6zM35.4 22.3 L38.1 24.1 L35.4 25.9zM38.2 22.6 L40.9 24.1 L38.2 25.6zM40.6 22.3 L43.3 24.1 L40.6 25.9zM43.4 22.6 L46.1 24.1 L43.4 25.6zM46.8 22.3 L49.5 24.1 L46.8 25.9zM48.8 22.6 L51.5 24.1 L48.8 25.6zM50.5 22.6 L53.2 24.1 L50.5 25.6zM53.9 22.6 L56.6 24.1 L53.9 25.6zM55.9 22.6 L58.6 24.1 L55.9 25.6zM58.3 22.3 L61.0 24.1 L58.3 25.9z" fill="#fdeaa3"/><text x="5.60" y="13.40" font-size="11.1" fill="#fff6cc" text-anchor="start" stroke="#fff6cc" stroke-width=".22">Drummer</text></svg><rect x="931.05" y="401.60" width="20.55" height="27.9" rx="3.5" fill="#a98c2d" stroke="#151004" stroke-width="1.0"/><svg x="931.05" y="401.60" width="20.15" height="27.9" viewBox="0 0 20.15 27.9"><rect x="2.5" y="23.1" width="15.6" height="2" fill="#fdeaa3" opacity=".4"/><path d="M3.5 22.1 L6.2 24.1 L3.5 26.1zM5.9 22.6 L8.6 24.1 L5.9 25.6zM9.3 22.3 L12.0 24.1 L9.3 25.9zM11.3 22.1 L14.0 24.1 L11.3 26.1zM13.3 22.3 L16.0 24.1 L13.3 25.9zM16.7 22.1 L19.4 24.1 L16.7 26.1z" fill="#fdeaa3"/><text x="5.60" y="13.40" font-size="11.1" fill="#fff6cc" text-anchor="start" stroke="#fff6cc" stroke-width=".22">Dr</text></svg><rect x="951.90" y="401.60" width="41.41" height="27.9" rx="3.5" fill="#a98c2d" stroke="#151004" stroke-width="1.0"/><svg x="951.90" y="401.60" width="41.01" height="27.9" viewBox="0 0 41.01 27.9"><rect x="2.5" y="23.1" width="36.4" height="2" fill="#fdeaa3" opacity=".4"/><path d="M3.5 22.6 L6.2 24.1 L3.5 25.6zM5.9 22.6 L8.6 24.1 L5.9 25.6zM7.9 22.3 L10.6 24.1 L7.9 25.9zM11.3 22.1 L14.0 24.1 L11.3 26.1zM13.3 22.3 L16.0 24.1 L13.3 25.9zM15.7 22.6 L18.4 24.1 L15.7 25.6zM19.1 22.6 L21.8 24.1 L19.1 25.6zM20.8 22.6 L23.5 24.1 L20.8 25.6zM23.2 22.1 L25.9 24.1 L23.2 26.1zM26.0 22.1 L28.7 24.1 L26.0 26.1zM28.4 22.6 L31.1 24.1 L28.4 25.6zM31.8 22.1 L34.5 24.1 L31.8 26.1zM34.2 22.3 L36.9 24.1 L34.2 25.9zM37.6 22.1 L40.3 24.1 L37.6 26.1z" fill="#fdeaa3"/><text x="5.60" y="13.40" font-size="11.1" fill="#fff6cc" text-anchor="start" stroke="#fff6cc" stroke-width=".22">Drum</text></svg><rect x="993.61" y="401.60" width="41.41" height="27.9" rx="3.5" fill="#a98c2d" stroke="#151004" stroke-width="1.0"/><svg x="993.61" y="401.60" width="41.01" height="27.9" viewBox="0 0 41.01 27.9"><rect x="2.5" y="23.1" width="36.4" height="2" fill="#fdeaa3" opacity=".4"/><path d="M3.5 22.1 L6.2 24.1 L3.5 26.1zM6.3 22.3 L9.0 24.1 L6.3 25.9zM9.1 22.3 L11.8 24.1 L9.1 25.9zM10.8 22.6 L13.5 24.1 L10.8 25.6zM13.6 22.3 L16.3 24.1 L13.6 25.9zM15.6 22.3 L18.3 24.1 L15.6 25.9zM18.4 22.1 L21.1 24.1 L18.4 26.1zM20.4 22.6 L23.1 24.1 L20.4 25.6zM22.8 22.1 L25.5 24.1 L22.8 26.1zM24.5 22.3 L27.2 24.1 L24.5 25.9zM27.9 22.1 L30.6 24.1 L27.9 26.1zM29.9 22.6 L32.6 24.1 L29.9 25.6zM33.3 22.1 L36.0 24.1 L33.3 26.1zM35.0 22.6 L37.7 24.1 L35.0 25.6zM37.4 22.1 L40.1 24.1 L37.4 26.1z" fill="#fdeaa3"/><text x="5.60" y="13.40" font-size="11.1" fill="#fff6cc" text-anchor="start" stroke="#fff6cc" stroke-width=".22">Drum</text></svg><rect x="1035.32" y="401.60" width="62.26" height="27.9" rx="3.5" fill="#a98c2d" stroke="#151004" stroke-width="1.0"/><svg x="1035.32" y="401.60" width="61.86" height="27.9" viewBox="0 0 61.86 27.9"><rect x="2.5" y="23.1" width="57.3" height="2" fill="#fdeaa3" opacity=".4"/><path d="M3.5 22.3 L6.2 24.1 L3.5 25.9zM6.9 22.3 L9.6 24.1 L6.9 25.9zM9.3 22.6 L12.0 24.1 L9.3 25.6zM12.7 22.1 L15.4 24.1 L12.7 26.1zM14.7 22.3 L17.4 24.1 L14.7 25.9zM17.5 22.1 L20.2 24.1 L17.5 26.1zM19.9 22.1 L22.6 24.1 L19.9 26.1zM23.3 22.3 L26.0 24.1 L23.3 25.9zM25.3 22.1 L28.0 24.1 L25.3 26.1zM28.1 22.3 L30.8 24.1 L28.1 25.9zM30.1 22.6 L32.8 24.1 L30.1 25.6zM31.8 22.6 L34.5 24.1 L31.8 25.6zM33.5 22.6 L36.2 24.1 L33.5 25.6zM35.2 22.3 L37.9 24.1 L35.2 25.9zM37.2 22.1 L39.9 24.1 L37.2 26.1zM39.6 22.3 L42.3 24.1 L39.6 25.9zM41.6 22.3 L44.3 24.1 L41.6 25.9zM43.6 22.1 L46.3 24.1 L43.6 26.1zM47.0 22.6 L49.7 24.1 L47.0 25.6zM48.7 22.3 L51.4 24.1 L48.7 25.9zM50.7 22.3 L53.4 24.1 L50.7 25.9zM53.1 22.3 L55.8 24.1 L53.1 25.9zM55.1 22.6 L57.8 24.1 L55.1 25.6zM57.1 22.1 L59.8 24.1 L57.1 26.1zM59.9 22.6 L62.6 24.1 L59.9 25.6z" fill="#fdeaa3"/><text x="5.60" y="13.40" font-size="11.1" fill="#fff6cc" text-anchor="start" stroke="#fff6cc" stroke-width=".22">Drummer</text></svg><rect x="1097.88" y="401.60" width="41.41" height="27.9" rx="3.5" fill="#a98c2d" stroke="#151004" stroke-width="1.0"/><svg x="1097.88" y="401.60" width="41.01" height="27.9" viewBox="0 0 41.01 27.9"><rect x="2.5" y="23.1" width="36.4" height="2" fill="#fdeaa3" opacity=".4"/><path d="M3.5 22.3 L6.2 24.1 L3.5 25.9zM5.2 22.3 L7.9 24.1 L5.2 25.9zM8.6 22.1 L11.3 24.1 L8.6 26.1zM11.4 22.1 L14.1 24.1 L11.4 26.1zM14.8 22.6 L17.5 24.1 L14.8 25.6zM16.8 22.6 L19.5 24.1 L16.8 25.6zM18.5 22.1 L21.2 24.1 L18.5 26.1zM21.3 22.1 L24.0 24.1 L21.3 26.1zM23.3 22.6 L26.0 24.1 L23.3 25.6zM25.3 22.3 L28.0 24.1 L25.3 25.9zM27.0 22.6 L29.7 24.1 L27.0 25.6zM29.8 22.1 L32.5 24.1 L29.8 26.1zM32.2 22.6 L34.9 24.1 L32.2 25.6zM34.2 22.6 L36.9 24.1 L34.2 25.6zM36.2 22.6 L38.9 24.1 L36.2 25.6zM37.9 22.1 L40.6 24.1 L37.9 26.1z" fill="#fdeaa3"/><text x="5.60" y="13.40" font-size="11.1" fill="#fff6cc" text-anchor="start" stroke="#fff6cc" stroke-width=".22">Drum</text></svg><rect x="1410.67" y="401.60" width="83.11" height="27.9" rx="3.5" fill="#a98c2d" stroke="#151004" stroke-width="1.0"/><svg x="1410.67" y="401.60" width="82.71" height="27.9" viewBox="0 0 82.71 27.9"><rect x="2.5" y="23.1" width="78.1" height="2" fill="#fdeaa3" opacity=".4"/><path d="M3.5 22.6 L6.2 24.1 L3.5 25.6zM5.9 22.6 L8.6 24.1 L5.9 25.6zM8.3 22.1 L11.0 24.1 L8.3 26.1zM10.7 22.3 L13.4 24.1 L10.7 25.9zM14.1 22.6 L16.8 24.1 L14.1 25.6zM16.1 22.3 L18.8 24.1 L16.1 25.9zM19.5 22.3 L22.2 24.1 L19.5 25.9zM22.3 22.3 L25.0 24.1 L22.3 25.9zM24.0 22.6 L26.7 24.1 L24.0 25.6zM27.4 22.3 L30.1 24.1 L27.4 25.9zM29.1 22.6 L31.8 24.1 L29.1 25.6zM31.1 22.1 L33.8 24.1 L31.1 26.1zM32.8 22.6 L35.5 24.1 L32.8 25.6zM35.2 22.1 L37.9 24.1 L35.2 26.1zM38.0 22.1 L40.7 24.1 L38.0 26.1zM41.4 22.1 L44.1 24.1 L41.4 26.1zM43.8 22.1 L46.5 24.1 L43.8 26.1zM46.2 22.1 L48.9 24.1 L46.2 26.1zM48.2 22.3 L50.9 24.1 L48.2 25.9zM51.0 22.6 L53.7 24.1 L51.0 25.6zM54.4 22.3 L57.1 24.1 L54.4 25.9zM57.8 22.1 L60.5 24.1 L57.8 26.1zM59.8 22.1 L62.5 24.1 L59.8 26.1zM63.2 22.6 L65.9 24.1 L63.2 25.6zM66.6 22.6 L69.3 24.1 L66.6 25.6zM68.6 22.1 L71.3 24.1 L68.6 26.1zM72.0 22.1 L74.7 24.1 L72.0 26.1zM75.4 22.1 L78.1 24.1 L75.4 26.1zM77.8 22.3 L80.5 24.1 L77.8 25.9zM80.6 22.3 L83.3 24.1 L80.6 25.9z" fill="#fdeaa3"/><text x="5.60" y="13.40" font-size="11.1" fill="#fff6cc" text-anchor="start" stroke="#fff6cc" stroke-width=".22">Drummer</text></svg><rect x="1494.08" y="401.60" width="83.11" height="27.9" rx="3.5" fill="#a98c2d" stroke="#151004" stroke-width="1.0"/><svg x="1494.08" y="401.60" width="82.71" height="27.9" viewBox="0 0 82.71 27.9"><rect x="2.5" y="23.1" width="78.1" height="2" fill="#fdeaa3" opacity=".4"/><path d="M3.5 22.6 L6.2 24.1 L3.5 25.6zM6.9 22.6 L9.6 24.1 L6.9 25.6zM9.3 22.3 L12.0 24.1 L9.3 25.9zM11.3 22.1 L14.0 24.1 L11.3 26.1zM13.0 22.1 L15.7 24.1 L13.0 26.1zM15.4 22.6 L18.1 24.1 L15.4 25.6zM18.8 22.3 L21.5 24.1 L18.8 25.9zM21.6 22.1 L24.3 24.1 L21.6 26.1zM25.0 22.1 L27.7 24.1 L25.0 26.1zM27.4 22.6 L30.1 24.1 L27.4 25.6zM29.4 22.1 L32.1 24.1 L29.4 26.1zM32.8 22.3 L35.5 24.1 L32.8 25.9zM34.8 22.3 L37.5 24.1 L34.8 25.9zM38.2 22.1 L40.9 24.1 L38.2 26.1zM41.0 22.6 L43.7 24.1 L41.0 25.6zM42.7 22.1 L45.4 24.1 L42.7 26.1zM46.1 22.1 L48.8 24.1 L46.1 26.1zM47.8 22.6 L50.5 24.1 L47.8 25.6zM50.6 22.3 L53.3 24.1 L50.6 25.9zM53.0 22.3 L55.7 24.1 L53.0 25.9zM55.8 22.1 L58.5 24.1 L55.8 26.1zM57.8 22.6 L60.5 24.1 L57.8 25.6zM59.8 22.3 L62.5 24.1 L59.8 25.9zM62.6 22.1 L65.3 24.1 L62.6 26.1zM65.0 22.6 L67.7 24.1 L65.0 25.6zM67.0 22.6 L69.7 24.1 L67.0 25.6zM69.4 22.3 L72.1 24.1 L69.4 25.9zM72.2 22.6 L74.9 24.1 L72.2 25.6zM74.2 22.1 L76.9 24.1 L74.2 26.1zM77.0 22.1 L79.7 24.1 L77.0 26.1zM79.0 22.1 L81.7 24.1 L79.0 26.1z" fill="#fdeaa3"/><text x="5.60" y="13.40" font-size="11.1" fill="#fff6cc" text-anchor="start" stroke="#fff6cc" stroke-width=".22">Drummer</text></svg><rect x="1577.49" y="401.60" width="83.11" height="27.9" rx="3.5" fill="#a98c2d" stroke="#151004" stroke-width="1.0"/><svg x="1577.49" y="401.60" width="82.71" height="27.9" viewBox="0 0 82.71 27.9"><rect x="2.5" y="23.1" width="78.1" height="2" fill="#fdeaa3" opacity=".4"/><path d="M3.5 22.3 L6.2 24.1 L3.5 25.9zM5.9 22.6 L8.6 24.1 L5.9 25.6zM9.3 22.6 L12.0 24.1 L9.3 25.6zM11.7 22.1 L14.4 24.1 L11.7 26.1zM13.7 22.6 L16.4 24.1 L13.7 25.6zM16.1 22.3 L18.8 24.1 L16.1 25.9zM18.5 22.6 L21.2 24.1 L18.5 25.6zM20.5 22.1 L23.2 24.1 L20.5 26.1zM23.3 22.1 L26.0 24.1 L23.3 26.1zM26.7 22.6 L29.4 24.1 L26.7 25.6zM28.7 22.1 L31.4 24.1 L28.7 26.1zM30.4 22.1 L33.1 24.1 L30.4 26.1zM33.2 22.6 L35.9 24.1 L33.2 25.6zM34.9 22.6 L37.6 24.1 L34.9 25.6zM36.6 22.3 L39.3 24.1 L36.6 25.9zM40.0 22.1 L42.7 24.1 L40.0 26.1zM43.4 22.3 L46.1 24.1 L43.4 25.9zM45.8 22.1 L48.5 24.1 L45.8 26.1zM47.8 22.3 L50.5 24.1 L47.8 25.9zM50.6 22.3 L53.3 24.1 L50.6 25.9zM53.4 22.3 L56.1 24.1 L53.4 25.9zM56.2 22.1 L58.9 24.1 L56.2 26.1zM59.6 22.6 L62.3 24.1 L59.6 25.6zM61.3 22.6 L64.0 24.1 L61.3 25.6zM64.7 22.1 L67.4 24.1 L64.7 26.1zM67.5 22.1 L70.2 24.1 L67.5 26.1zM69.5 22.6 L72.2 24.1 L69.5 25.6zM72.9 22.6 L75.6 24.1 L72.9 25.6zM74.6 22.6 L77.3 24.1 L74.6 25.6zM77.0 22.3 L79.7 24.1 L77.0 25.9zM79.8 22.3 L82.5 24.1 L79.8 25.9z" fill="#fdeaa3"/><text x="5.60" y="13.40" font-size="11.1" fill="#fff6cc" text-anchor="start" stroke="#fff6cc" stroke-width=".22">Drummer</text></svg><rect x="1660.91" y="401.60" width="83.11" height="27.9" rx="3.5" fill="#a98c2d" stroke="#151004" stroke-width="1.0"/><svg x="1660.91" y="401.60" width="82.71" height="27.9" viewBox="0 0 82.71 27.9"><rect x="2.5" y="23.1" width="78.1" height="2" fill="#fdeaa3" opacity=".4"/><path d="M3.5 22.3 L6.2 24.1 L3.5 25.9zM5.9 22.3 L8.6 24.1 L5.9 25.9zM8.3 22.3 L11.0 24.1 L8.3 25.9zM11.1 22.1 L13.8 24.1 L11.1 26.1zM13.5 22.1 L16.2 24.1 L13.5 26.1zM15.9 22.3 L18.6 24.1 L15.9 25.9zM17.6 22.3 L20.3 24.1 L17.6 25.9zM19.3 22.1 L22.0 24.1 L19.3 26.1zM21.3 22.3 L24.0 24.1 L21.3 25.9zM23.0 22.3 L25.7 24.1 L23.0 25.9zM25.0 22.1 L27.7 24.1 L25.0 26.1zM27.0 22.3 L29.7 24.1 L27.0 25.9zM28.7 22.1 L31.4 24.1 L28.7 26.1zM32.1 22.1 L34.8 24.1 L32.1 26.1zM34.5 22.3 L37.2 24.1 L34.5 25.9zM36.2 22.3 L38.9 24.1 L36.2 25.9zM37.9 22.3 L40.6 24.1 L37.9 25.9zM40.7 22.1 L43.4 24.1 L40.7 26.1zM44.1 22.1 L46.8 24.1 L44.1 26.1zM46.5 22.6 L49.2 24.1 L46.5 25.6zM49.9 22.6 L52.6 24.1 L49.9 25.6zM51.9 22.1 L54.6 24.1 L51.9 26.1zM53.6 22.1 L56.3 24.1 L53.6 26.1zM56.0 22.3 L58.7 24.1 L56.0 25.9zM59.4 22.6 L62.1 24.1 L59.4 25.6zM62.2 22.6 L64.9 24.1 L62.2 25.6zM65.6 22.1 L68.3 24.1 L65.6 26.1zM67.6 22.1 L70.3 24.1 L67.6 26.1zM70.4 22.6 L73.1 24.1 L70.4 25.6zM72.8 22.6 L75.5 24.1 L72.8 25.6zM75.6 22.1 L78.3 24.1 L75.6 26.1zM79.0 22.1 L81.7 24.1 L79.0 26.1zM80.7 22.1 L83.4 24.1 L80.7 26.1z" fill="#fdeaa3"/><text x="5.60" y="13.40" font-size="11.1" fill="#fff6cc" text-anchor="start" stroke="#fff6cc" stroke-width=".22">Drummer</text></svg><rect x="680.82" y="431.60" width="41.41" height="27.9" rx="3.5" fill="#515254" fill-opacity=".9" stroke="#161616" stroke-width="1.0"/><svg x="680.82" y="431.60" width="41.01" height="27.9" viewBox="0 0 41.01 27.9"><circle cx="9.9" cy="10.3" r="4.6" fill="#f7d765"/><rect x=".4" y="21.7" width="19.18" height="2" fill="#a4a4a4"/><text x="21.00" y="13.40" font-size="11.1" fill="#c2c2c2" text-anchor="start" stroke="#c2c2c2" stroke-width=".22">Dru</text></svg><rect x="1139.58" y="431.60" width="41.41" height="27.9" rx="3.5" fill="#a98c2d" stroke="#151004" stroke-width="1.0"/><svg x="1139.58" y="431.60" width="41.01" height="27.9" viewBox="0 0 41.01 27.9"><rect x=".4" y="21.7" width="40.81" height="2" fill="#f8e08a"/><text x="5.60" y="13.40" font-size="11.1" fill="#fff6cc" text-anchor="start" stroke="#fff6cc" stroke-width=".22">Drum</text></svg><rect x="1181.29" y="431.60" width="41.41" height="27.9" rx="3.5" fill="#a98c2d" stroke="#151004" stroke-width="1.0"/><svg x="1181.29" y="431.60" width="41.01" height="27.9" viewBox="0 0 41.01 27.9"><rect x="0.40" y="21.7" width="20.40" height="2" fill="#f8e08a"/><rect x="23.25" y="21.7" width="17.95" height="2" fill="#f8e08a"/><text x="5.60" y="13.40" font-size="11.1" fill="#fff6cc" text-anchor="start" stroke="#fff6cc" stroke-width=".22">Drum</text></svg><rect x="1222.99" y="431.60" width="20.55" height="27.9" rx="3.5" fill="#a98c2d" stroke="#151004" stroke-width="1.0"/><svg x="1222.99" y="431.60" width="20.15" height="27.9" viewBox="0 0 20.15 27.9"><rect x=".4" y="21.7" width="19.95" height="2" fill="#f8e08a"/><text x="5.60" y="13.40" font-size="11.1" fill="#fff6cc" text-anchor="start" stroke="#fff6cc" stroke-width=".22">Dr</text></svg><rect x="1243.85" y="431.60" width="41.41" height="27.9" rx="3.5" fill="#a98c2d" stroke="#151004" stroke-width="1.0"/><svg x="1243.85" y="431.60" width="41.01" height="27.9" viewBox="0 0 41.01 27.9"><rect x=".4" y="21.7" width="40.81" height="2" fill="#f8e08a"/><text x="5.60" y="13.40" font-size="11.1" fill="#fff6cc" text-anchor="start" stroke="#fff6cc" stroke-width=".22">Drum</text></svg><rect x="1285.55" y="431.60" width="41.41" height="27.9" rx="3.5" fill="#a98c2d" stroke="#151004" stroke-width="1.0"/><svg x="1285.55" y="431.60" width="41.01" height="27.9" viewBox="0 0 41.01 27.9"><rect x="0.40" y="21.7" width="20.40" height="2" fill="#f8e08a"/><rect x="23.25" y="21.7" width="6.53" height="2" fill="#f8e08a"/><rect x="32.23" y="21.7" width="8.98" height="2" fill="#f8e08a"/><text x="5.60" y="13.40" font-size="11.1" fill="#fff6cc" text-anchor="start" stroke="#fff6cc" stroke-width=".22">Drum</text></svg><rect x="1327.26" y="431.60" width="41.41" height="27.9" rx="3.5" fill="#a98c2d" stroke="#151004" stroke-width="1.0"/><svg x="1327.26" y="431.60" width="41.01" height="27.9" viewBox="0 0 41.01 27.9"><rect x=".4" y="21.7" width="40.81" height="2" fill="#f8e08a"/><text x="5.60" y="13.40" font-size="11.1" fill="#fff6cc" text-anchor="start" stroke="#fff6cc" stroke-width=".22">Drum</text></svg><rect x="1368.96" y="431.60" width="41.41" height="27.9" rx="3.5" fill="#a98c2d" stroke="#151004" stroke-width="1.0"/><svg x="1368.96" y="431.60" width="41.01" height="27.9" viewBox="0 0 41.01 27.9"><rect x=".4" y="21.7" width="40.81" height="2" fill="#f8e08a"/><text x="5.60" y="13.40" font-size="11.1" fill="#fff6cc" text-anchor="start" stroke="#fff6cc" stroke-width=".22">Drum</text></svg><rect x="1410.67" y="431.60" width="41.41" height="27.9" rx="3.5" fill="#515254" fill-opacity=".9" stroke="#161616" stroke-width="1.0"/><svg x="1410.67" y="431.60" width="41.01" height="27.9" viewBox="0 0 41.01 27.9"><circle cx="9.9" cy="10.3" r="4.6" fill="#f7d765"/><rect x=".4" y="21.7" width="40.81" height="2" fill="#a4a4a4"/><text x="21.00" y="13.40" font-size="11.1" fill="#c2c2c2" text-anchor="start" stroke="#c2c2c2" stroke-width=".22">Dru</text></svg><rect x="1577.49" y="431.60" width="41.41" height="27.9" rx="3.5" fill="#a98c2d" stroke="#151004" stroke-width="1.0"/><svg x="1577.49" y="431.60" width="41.01" height="27.9" viewBox="0 0 41.01 27.9"><rect x=".4" y="21.7" width="40.81" height="2" fill="#f8e08a"/><text x="5.60" y="13.40" font-size="11.1" fill="#fff6cc" text-anchor="start" stroke="#fff6cc" stroke-width=".22">Drum</text></svg><rect x="1744.32" y="431.60" width="41.41" height="27.9" rx="3.5" fill="#a98c2d" stroke="#151004" stroke-width="1.0"/><svg x="1744.32" y="431.60" width="41.01" height="27.9" viewBox="0 0 41.01 27.9"><rect x=".4" y="21.7" width="40.81" height="2" fill="#f8e08a"/><text x="5.60" y="13.40" font-size="11.1" fill="#fff6cc" text-anchor="start" stroke="#fff6cc" stroke-width=".22">Drum</text></svg><rect x="1786.02" y="431.60" width="41.41" height="27.9" rx="3.5" fill="#a98c2d" stroke="#151004" stroke-width="1.0"/><svg x="1786.02" y="431.60" width="41.01" height="27.9" viewBox="0 0 41.01 27.9"><rect x="0.40" y="21.7" width="20.40" height="2" fill="#f8e08a"/><rect x="23.25" y="21.7" width="17.95" height="2" fill="#f8e08a"/><text x="5.60" y="13.40" font-size="11.1" fill="#fff6cc" text-anchor="start" stroke="#fff6cc" stroke-width=".22">Drum</text></svg><rect x="1827.73" y="431.60" width="41.41" height="27.9" rx="3.5" fill="#a98c2d" stroke="#151004" stroke-width="1.0"/><svg x="1827.73" y="431.60" width="41.01" height="27.9" viewBox="0 0 41.01 27.9"><rect x=".4" y="21.7" width="40.81" height="2" fill="#f8e08a"/><text x="5.60" y="13.40" font-size="11.1" fill="#fff6cc" text-anchor="start" stroke="#fff6cc" stroke-width=".22">Drum</text></svg><rect x="1869.44" y="431.60" width="41.41" height="27.9" rx="3.5" fill="#a98c2d" stroke="#151004" stroke-width="1.0"/><svg x="1869.44" y="431.60" width="41.01" height="27.9" viewBox="0 0 41.01 27.9"><rect x="0.40" y="21.7" width="20.40" height="2" fill="#f8e08a"/><rect x="23.25" y="21.7" width="17.95" height="2" fill="#f8e08a"/><text x="5.60" y="13.40" font-size="11.1" fill="#fff6cc" text-anchor="start" stroke="#fff6cc" stroke-width=".22">Drum</text></svg><rect x="1911.14" y="431.60" width="41.41" height="27.9" rx="3.5" fill="#a98c2d" stroke="#151004" stroke-width="1.0"/><svg x="1911.14" y="431.60" width="41.01" height="27.9" viewBox="0 0 41.01 27.9"><rect x=".4" y="21.7" width="40.81" height="2" fill="#f8e08a"/><text x="5.60" y="13.40" font-size="11.1" fill="#fff6cc" text-anchor="start" stroke="#fff6cc" stroke-width=".22">Drum</text></svg><rect x="670.39" y="461.60" width="13.67" height="27.9" rx="3.5" fill="#a98c2d" stroke="#151004" stroke-width="1.0"/><svg x="670.39" y="461.60" width="13.27" height="27.9" viewBox="0 0 13.27 27.9"><rect x="2.5" y="23.1" width="8.7" height="2" fill="#fdeaa3" opacity=".4"/><path d="M3.5 22.1 L6.2 24.1 L3.5 26.1zM6.9 22.6 L9.6 24.1 L6.9 25.6zM8.9 22.3 L11.6 24.1 L8.9 25.9z" fill="#fdeaa3"/></svg><rect x="680.82" y="551.60" width="41.41" height="27.9" rx="3.5" fill="#ae5825" stroke="#1e0a03" stroke-width="1.0"/><svg x="680.82" y="551.60" width="41.01" height="27.9" viewBox="0 0 41.01 27.9"><rect x=".4" y="21.7" width="40.81" height="2" fill="#ffc9a2"/><rect x="4.0" y="24.7" width="1.6" height="1.2" fill="#1e0a03" opacity=".35"/><rect x="7.2" y="24.7" width="1.6" height="1.2" fill="#1e0a03" opacity=".35"/><rect x="10.4" y="24.7" width="1.6" height="1.2" fill="#1e0a03" opacity=".35"/><rect x="13.6" y="24.7" width="1.6" height="1.2" fill="#1e0a03" opacity=".35"/><rect x="16.8" y="24.7" width="1.6" height="1.2" fill="#1e0a03" opacity=".35"/><rect x="20.0" y="24.7" width="1.6" height="1.2" fill="#1e0a03" opacity=".35"/><rect x="23.2" y="24.7" width="1.6" height="1.2" fill="#1e0a03" opacity=".35"/><rect x="26.4" y="24.7" width="1.6" height="1.2" fill="#1e0a03" opacity=".35"/><rect x="29.6" y="24.7" width="1.6" height="1.2" fill="#1e0a03" opacity=".35"/><rect x="32.8" y="24.7" width="1.6" height="1.2" fill="#1e0a03" opacity=".35"/><rect x="36.0" y="24.7" width="1.6" height="1.2" fill="#1e0a03" opacity=".35"/><text x="5.60" y="13.40" font-size="11.1" fill="#ffe9d8" text-anchor="start" stroke="#ffe9d8" stroke-width=".22">Baroq</text></svg><rect x="1243.85" y="551.60" width="41.41" height="27.9" rx="3.5" fill="#ae5825" stroke="#1e0a03" stroke-width="1.0"/><svg x="1243.85" y="551.60" width="41.01" height="27.9" viewBox="0 0 41.01 27.9"><rect x=".4" y="21.7" width="40.81" height="2" fill="#ffc9a2"/><rect x="4.0" y="24.7" width="1.6" height="1.2" fill="#1e0a03" opacity=".35"/><rect x="7.2" y="24.7" width="1.6" height="1.2" fill="#1e0a03" opacity=".35"/><rect x="10.4" y="24.7" width="1.6" height="1.2" fill="#1e0a03" opacity=".35"/><rect x="13.6" y="24.7" width="1.6" height="1.2" fill="#1e0a03" opacity=".35"/><rect x="16.8" y="24.7" width="1.6" height="1.2" fill="#1e0a03" opacity=".35"/><rect x="20.0" y="24.7" width="1.6" height="1.2" fill="#1e0a03" opacity=".35"/><rect x="23.2" y="24.7" width="1.6" height="1.2" fill="#1e0a03" opacity=".35"/><rect x="26.4" y="24.7" width="1.6" height="1.2" fill="#1e0a03" opacity=".35"/><rect x="29.6" y="24.7" width="1.6" height="1.2" fill="#1e0a03" opacity=".35"/><rect x="32.8" y="24.7" width="1.6" height="1.2" fill="#1e0a03" opacity=".35"/><rect x="36.0" y="24.7" width="1.6" height="1.2" fill="#1e0a03" opacity=".35"/><text x="5.60" y="13.40" font-size="11.1" fill="#ffe9d8" text-anchor="start" stroke="#ffe9d8" stroke-width=".22">Baroq</text></svg><rect x="1295.98" y="551.60" width="30.98" height="27.9" rx="3.5" fill="#515254" fill-opacity=".9" stroke="#161616" stroke-width="1.0"/><svg x="1295.98" y="551.60" width="30.58" height="27.9" viewBox="0 0 30.58 27.9"><circle cx="9.9" cy="10.3" r="4.6" fill="#f79c62"/><rect x=".4" y="21.7" width="30.38" height="2" fill="#a4a4a4"/><rect x="4.0" y="24.7" width="1.6" height="1.2" fill="#161616" opacity=".35"/><rect x="7.2" y="24.7" width="1.6" height="1.2" fill="#161616" opacity=".35"/><rect x="10.4" y="24.7" width="1.6" height="1.2" fill="#161616" opacity=".35"/><rect x="13.6" y="24.7" width="1.6" height="1.2" fill="#161616" opacity=".35"/><rect x="16.8" y="24.7" width="1.6" height="1.2" fill="#161616" opacity=".35"/><rect x="20.0" y="24.7" width="1.6" height="1.2" fill="#161616" opacity=".35"/><rect x="23.2" y="24.7" width="1.6" height="1.2" fill="#161616" opacity=".35"/><rect x="26.4" y="24.7" width="1.6" height="1.2" fill="#161616" opacity=".35"/><text x="21.00" y="13.40" font-size="11.1" fill="#c2c2c2" text-anchor="start" stroke="#c2c2c2" stroke-width=".22">B</text></svg><rect x="1327.26" y="551.60" width="41.41" height="27.9" rx="3.5" fill="#ae5825" stroke="#1e0a03" stroke-width="1.0"/><svg x="1327.26" y="551.60" width="41.01" height="27.9" viewBox="0 0 41.01 27.9"><rect x=".4" y="21.7" width="40.81" height="2" fill="#ffc9a2"/><rect x="4.0" y="24.7" width="1.6" height="1.2" fill="#1e0a03" opacity=".35"/><rect x="7.2" y="24.7" width="1.6" height="1.2" fill="#1e0a03" opacity=".35"/><rect x="10.4" y="24.7" width="1.6" height="1.2" fill="#1e0a03" opacity=".35"/><rect x="13.6" y="24.7" width="1.6" height="1.2" fill="#1e0a03" opacity=".35"/><rect x="16.8" y="24.7" width="1.6" height="1.2" fill="#1e0a03" opacity=".35"/><rect x="20.0" y="24.7" width="1.6" height="1.2" fill="#1e0a03" opacity=".35"/><rect x="23.2" y="24.7" width="1.6" height="1.2" fill="#1e0a03" opacity=".35"/><rect x="26.4" y="24.7" width="1.6" height="1.2" fill="#1e0a03" opacity=".35"/><rect x="29.6" y="24.7" width="1.6" height="1.2" fill="#1e0a03" opacity=".35"/><rect x="32.8" y="24.7" width="1.6" height="1.2" fill="#1e0a03" opacity=".35"/><rect x="36.0" y="24.7" width="1.6" height="1.2" fill="#1e0a03" opacity=".35"/><text x="5.60" y="13.40" font-size="11.1" fill="#ffe9d8" text-anchor="start" stroke="#ffe9d8" stroke-width=".22">Baroq</text></svg><rect x="1368.96" y="551.60" width="208.23" height="27.9" rx="3.5" fill="#515254" fill-opacity=".9" stroke="#161616" stroke-width="1.0"/><svg x="1368.96" y="551.60" width="207.83" height="27.9" viewBox="0 0 207.83 27.9"><circle cx="9.9" cy="10.3" r="4.6" fill="#f79c62"/><rect x="0.40" y="21.7" width="8.31" height="2" fill="#a4a4a4"/><rect x="10.78" y="21.7" width="72.67" height="2" fill="#a4a4a4"/><rect x="85.53" y="21.7" width="89.28" height="2" fill="#a4a4a4"/><rect x="177.92" y="21.7" width="30.11" height="2" fill="#a4a4a4"/><text x="21.00" y="13.40" font-size="11.1" fill="#c2c2c2" text-anchor="start" stroke="#c2c2c2" stroke-width=".22">Baroque Organ</text></svg><rect x="1577.49" y="551.60" width="166.52" height="27.9" rx="3.5" fill="#ae5825" stroke="#1e0a03" stroke-width="1.0"/><svg x="1577.49" y="551.60" width="166.12" height="27.9" viewBox="0 0 166.12 27.9"><rect x="0.40" y="21.7" width="17.42" height="2" fill="#ffc9a2"/><rect x="20.31" y="21.7" width="19.08" height="2" fill="#ffc9a2"/><rect x="41.88" y="21.7" width="91.26" height="2" fill="#ffc9a2"/><rect x="135.63" y="21.7" width="30.70" height="2" fill="#ffc9a2"/><text x="5.60" y="13.40" font-size="11.1" fill="#ffe9d8" text-anchor="start" stroke="#ffe9d8" stroke-width=".22">Baroque Organ</text></svg><rect x="1744.32" y="551.60" width="187.38" height="27.9" rx="3.5" fill="#ae5825" stroke="#1e0a03" stroke-width="1.0"/><svg x="1744.32" y="551.60" width="186.98" height="27.9" viewBox="0 0 186.98 27.9"><rect x="0.40" y="21.7" width="37.36" height="2" fill="#ffc9a2"/><rect x="40.56" y="21.7" width="40.16" height="2" fill="#ffc9a2"/><rect x="83.52" y="21.7" width="103.66" height="2" fill="#ffc9a2"/><text x="5.60" y="13.40" font-size="11.1" fill="#ffe9d8" text-anchor="start" stroke="#ffe9d8" stroke-width=".22">Baroque Organ</text></svg><rect x="576.55" y="581.60" width="103.96" height="27.9" rx="3.5" fill="#ae5825" stroke="#1e0a03" stroke-width="1.0"/><svg x="576.55" y="581.60" width="103.56" height="27.9" viewBox="0 0 103.56 27.9"><rect x=".4" y="21.7" width="103.36" height="2" fill="#ffc9a2"/><text x="5.60" y="13.40" font-size="11.1" fill="#ffe9d8" text-anchor="start" stroke="#ffe9d8" stroke-width=".22">Breathy Vox</text></svg><rect x="680.82" y="581.60" width="41.41" height="27.9" rx="3.5" fill="#ae5825" stroke="#1e0a03" stroke-width="1.0"/><svg x="680.82" y="581.60" width="41.01" height="27.9" viewBox="0 0 41.01 27.9"><rect x=".4" y="21.7" width="38.01" height="2" fill="#ffc9a2"/><text x="5.60" y="13.40" font-size="11.1" fill="#ffe9d8" text-anchor="start" stroke="#ffe9d8" stroke-width=".22">Em Ma</text></svg><rect x="722.52" y="581.60" width="20.55" height="27.9" rx="3.5" fill="#ae5825" stroke="#1e0a03" stroke-width="1.0"/><svg x="722.52" y="581.60" width="20.15" height="27.9" viewBox="0 0 20.15 27.9"><rect x=".4" y="21.7" width="19.95" height="2" fill="#ffc9a2"/><text x="5.60" y="13.40" font-size="11.1" fill="#ffe9d8" text-anchor="start" stroke="#ffe9d8" stroke-width=".22">G</text></svg><rect x="743.37" y="581.60" width="20.55" height="27.9" rx="3.5" fill="#ae5825" stroke="#1e0a03" stroke-width="1.0"/><svg x="743.37" y="581.60" width="20.15" height="27.9" viewBox="0 0 20.15 27.9"><rect x=".4" y="21.7" width="19.95" height="2" fill="#ffc9a2"/><text x="5.60" y="13.40" font-size="11.1" fill="#ffe9d8" text-anchor="start" stroke="#ffe9d8" stroke-width=".22">A</text></svg><rect x="764.23" y="581.60" width="20.55" height="27.9" rx="3.5" fill="#ae5825" stroke="#1e0a03" stroke-width="1.0"/><svg x="764.23" y="581.60" width="20.15" height="27.9" viewBox="0 0 20.15 27.9"><rect x=".4" y="21.7" width="19.95" height="2" fill="#ffc9a2"/><text x="5.60" y="13.40" font-size="11.1" fill="#ffe9d8" text-anchor="start" stroke="#ffe9d8" stroke-width=".22">E</text></svg><rect x="785.08" y="581.60" width="41.41" height="27.9" rx="3.5" fill="#ae5825" stroke="#1e0a03" stroke-width="1.0"/><svg x="785.08" y="581.60" width="41.01" height="27.9" viewBox="0 0 41.01 27.9"><rect x=".4" y="21.7" width="38.01" height="2" fill="#ffc9a2"/><text x="5.60" y="13.40" font-size="11.1" fill="#ffe9d8" text-anchor="start" stroke="#ffe9d8" stroke-width=".22">Em M</text></svg><rect x="826.79" y="581.60" width="20.55" height="27.9" rx="3.5" fill="#ae5825" stroke="#1e0a03" stroke-width="1.0"/><svg x="826.79" y="581.60" width="20.15" height="27.9" viewBox="0 0 20.15 27.9"><rect x=".4" y="21.7" width="19.95" height="2" fill="#ffc9a2"/><text x="5.60" y="13.40" font-size="11.1" fill="#ffe9d8" text-anchor="start" stroke="#ffe9d8" stroke-width=".22">G</text></svg><rect x="847.64" y="581.60" width="20.55" height="27.9" rx="3.5" fill="#ae5825" stroke="#1e0a03" stroke-width="1.0"/><svg x="847.64" y="581.60" width="20.15" height="27.9" viewBox="0 0 20.15 27.9"><rect x=".4" y="21.7" width="19.95" height="2" fill="#ffc9a2"/><text x="5.60" y="13.40" font-size="11.1" fill="#ffe9d8" text-anchor="start" stroke="#ffe9d8" stroke-width=".22">A</text></svg><rect x="868.49" y="581.60" width="20.55" height="27.9" rx="3.5" fill="#ae5825" stroke="#1e0a03" stroke-width="1.0"/><svg x="868.49" y="581.60" width="20.15" height="27.9" viewBox="0 0 20.15 27.9"><rect x=".4" y="21.7" width="19.95" height="2" fill="#ffc9a2"/><text x="5.60" y="13.40" font-size="11.1" fill="#ffe9d8" text-anchor="start" stroke="#ffe9d8" stroke-width=".22">E</text></svg><rect x="889.35" y="581.60" width="20.55" height="27.9" rx="3.5" fill="#ae5825" stroke="#1e0a03" stroke-width="1.0"/><svg x="889.35" y="581.60" width="20.15" height="27.9" viewBox="0 0 20.15 27.9"><rect x=".4" y="21.7" width="19.95" height="2" fill="#ffc9a2"/><text x="5.60" y="13.40" font-size="11.1" fill="#ffe9d8" text-anchor="start" stroke="#ffe9d8" stroke-width=".22">A</text></svg><rect x="910.20" y="581.60" width="20.55" height="27.9" rx="3.5" fill="#ae5825" stroke="#1e0a03" stroke-width="1.0"/><svg x="910.20" y="581.60" width="20.15" height="27.9" viewBox="0 0 20.15 27.9"><rect x=".4" y="21.7" width="19.95" height="2" fill="#ffc9a2"/><text x="5.60" y="13.40" font-size="11.1" fill="#ffe9d8" text-anchor="start" stroke="#ffe9d8" stroke-width=".22">G</text></svg><rect x="931.05" y="581.60" width="20.55" height="27.9" rx="3.5" fill="#ae5825" stroke="#1e0a03" stroke-width="1.0"/><svg x="931.05" y="581.60" width="20.15" height="27.9" viewBox="0 0 20.15 27.9"><rect x=".4" y="21.7" width="19.95" height="2" fill="#ffc9a2"/><text x="5.60" y="13.40" font-size="11.1" fill="#ffe9d8" text-anchor="start" stroke="#ffe9d8" stroke-width=".22">E</text></svg><rect x="951.90" y="581.60" width="41.41" height="27.9" rx="3.5" fill="#ae5825" stroke="#1e0a03" stroke-width="1.0"/><svg x="951.90" y="581.60" width="41.01" height="27.9" viewBox="0 0 41.01 27.9"><rect x=".4" y="21.7" width="38.01" height="2" fill="#ffc9a2"/><text x="5.60" y="13.40" font-size="11.1" fill="#ffe9d8" text-anchor="start" stroke="#ffe9d8" stroke-width=".22">Em Ma</text></svg><rect x="993.61" y="581.60" width="20.55" height="27.9" rx="3.5" fill="#ae5825" stroke="#1e0a03" stroke-width="1.0"/><svg x="993.61" y="581.60" width="20.15" height="27.9" viewBox="0 0 20.15 27.9"><rect x=".4" y="21.7" width="19.95" height="2" fill="#ffc9a2"/><text x="5.60" y="13.40" font-size="11.1" fill="#ffe9d8" text-anchor="start" stroke="#ffe9d8" stroke-width=".22">G</text></svg><rect x="1014.46" y="581.60" width="20.55" height="27.9" rx="3.5" fill="#ae5825" stroke="#1e0a03" stroke-width="1.0"/><svg x="1014.46" y="581.60" width="20.15" height="27.9" viewBox="0 0 20.15 27.9"><rect x=".4" y="21.7" width="19.95" height="2" fill="#ffc9a2"/><text x="5.60" y="13.40" font-size="11.1" fill="#ffe9d8" text-anchor="start" stroke="#ffe9d8" stroke-width=".22">A</text></svg><rect x="1035.32" y="581.60" width="20.55" height="27.9" rx="3.5" fill="#ae5825" stroke="#1e0a03" stroke-width="1.0"/><svg x="1035.32" y="581.60" width="20.15" height="27.9" viewBox="0 0 20.15 27.9"><rect x=".4" y="21.7" width="19.95" height="2" fill="#ffc9a2"/><text x="5.60" y="13.40" font-size="11.1" fill="#ffe9d8" text-anchor="start" stroke="#ffe9d8" stroke-width=".22">E</text></svg><rect x="1056.17" y="581.60" width="20.55" height="27.9" rx="3.5" fill="#ae5825" stroke="#1e0a03" stroke-width="1.0"/><svg x="1056.17" y="581.60" width="20.15" height="27.9" viewBox="0 0 20.15 27.9"><rect x=".4" y="21.7" width="19.95" height="2" fill="#ffc9a2"/><text x="5.60" y="13.40" font-size="11.1" fill="#ffe9d8" text-anchor="start" stroke="#ffe9d8" stroke-width=".22">A</text></svg><rect x="1077.02" y="581.60" width="20.55" height="27.9" rx="3.5" fill="#ae5825" stroke="#1e0a03" stroke-width="1.0"/><svg x="1077.02" y="581.60" width="20.15" height="27.9" viewBox="0 0 20.15 27.9"><rect x=".4" y="21.7" width="19.95" height="2" fill="#ffc9a2"/><text x="5.60" y="13.40" font-size="11.1" fill="#ffe9d8" text-anchor="start" stroke="#ffe9d8" stroke-width=".22">G</text></svg><rect x="1097.88" y="581.60" width="41.41" height="27.9" rx="3.5" fill="#ae5825" stroke="#1e0a03" stroke-width="1.0"/><svg x="1097.88" y="581.60" width="41.01" height="27.9" viewBox="0 0 41.01 27.9"><rect x=".4" y="21.7" width="40.81" height="2" fill="#ffc9a2"/><text x="5.60" y="13.40" font-size="11.1" fill="#ffe9d8" text-anchor="start" stroke="#ffe9d8" stroke-width=".22">Ending</text></svg><rect x="1139.58" y="581.60" width="20.55" height="27.9" rx="3.5" fill="#ae5825" stroke="#1e0a03" stroke-width="1.0"/><svg x="1139.58" y="581.60" width="20.15" height="27.9" viewBox="0 0 20.15 27.9"><rect x=".4" y="21.7" width="19.95" height="2" fill="#ffc9a2"/><text x="5.60" y="13.40" font-size="11.1" fill="#ffe9d8" text-anchor="start" stroke="#ffe9d8" stroke-width=".22">En</text></svg><rect x="1160.43" y="581.60" width="20.55" height="27.9" rx="3.5" fill="#ae5825" stroke="#1e0a03" stroke-width="1.0"/><svg x="1160.43" y="581.60" width="20.15" height="27.9" viewBox="0 0 20.15 27.9"><rect x=".4" y="21.7" width="19.95" height="2" fill="#ffc9a2"/><text x="5.60" y="13.40" font-size="11.1" fill="#ffe9d8" text-anchor="start" stroke="#ffe9d8" stroke-width=".22">Br</text></svg><rect x="1181.29" y="581.60" width="20.55" height="27.9" rx="3.5" fill="#ae5825" stroke="#1e0a03" stroke-width="1.0"/><svg x="1181.29" y="581.60" width="20.15" height="27.9" viewBox="0 0 20.15 27.9"><rect x=".4" y="21.7" width="19.95" height="2" fill="#ffc9a2"/><text x="5.60" y="13.40" font-size="11.1" fill="#ffe9d8" text-anchor="start" stroke="#ffe9d8" stroke-width=".22">Br</text></svg><rect x="1202.14" y="581.60" width="20.55" height="27.9" rx="3.5" fill="#ae5825" stroke="#1e0a03" stroke-width="1.0"/><svg x="1202.14" y="581.60" width="20.15" height="27.9" viewBox="0 0 20.15 27.9"><rect x=".4" y="21.7" width="19.95" height="2" fill="#ffc9a2"/><text x="5.60" y="13.40" font-size="11.1" fill="#ffe9d8" text-anchor="start" stroke="#ffe9d8" stroke-width=".22">Br</text></svg><rect x="1222.99" y="581.60" width="20.55" height="27.9" rx="3.5" fill="#ae5825" stroke="#1e0a03" stroke-width="1.0"/><svg x="1222.99" y="581.60" width="20.15" height="27.9" viewBox="0 0 20.15 27.9"><rect x=".4" y="21.7" width="19.95" height="2" fill="#ffc9a2"/><text x="5.60" y="13.40" font-size="11.1" fill="#ffe9d8" text-anchor="start" stroke="#ffe9d8" stroke-width=".22">Br</text></svg><rect x="1243.85" y="581.60" width="51.83" height="27.9" rx="3.5" fill="#ae5825" stroke="#1e0a03" stroke-width="1.0"/><svg x="1243.85" y="581.60" width="51.43" height="27.9" viewBox="0 0 51.43 27.9"><rect x=".4" y="21.7" width="51.23" height="2" fill="#ffc9a2"/><text x="5.60" y="13.40" font-size="11.1" fill="#ffe9d8" text-anchor="start" stroke="#ffe9d8" stroke-width=".22">G Main</text></svg><rect x="1295.98" y="581.60" width="10.13" height="27.9" rx="3.1" fill="#ae5825" stroke="#1e0a03" stroke-width="1.0"/><svg x="1295.98" y="581.60" width="9.73" height="27.9" viewBox="0 0 9.73 27.9"><rect x=".4" y="21.7" width="9.53" height="2" fill="#ffc9a2"/></svg><rect x="1306.40" y="581.60" width="10.13" height="27.9" rx="3.1" fill="#ae5825" stroke="#1e0a03" stroke-width="1.0"/><svg x="1306.40" y="581.60" width="9.73" height="27.9" viewBox="0 0 9.73 27.9"><rect x=".4" y="21.7" width="9.53" height="2" fill="#ffc9a2"/></svg><rect x="1316.83" y="581.60" width="10.13" height="27.9" rx="3.1" fill="#ae5825" stroke="#1e0a03" stroke-width="1.0"/><svg x="1316.83" y="581.60" width="9.73" height="27.9" viewBox="0 0 9.73 27.9"><rect x=".4" y="21.7" width="9.53" height="2" fill="#ffc9a2"/></svg><rect x="1327.26" y="581.60" width="20.55" height="27.9" rx="3.5" fill="#ae5825" stroke="#1e0a03" stroke-width="1.0"/><svg x="1327.26" y="581.60" width="20.15" height="27.9" viewBox="0 0 20.15 27.9"><rect x=".4" y="21.7" width="19.95" height="2" fill="#ffc9a2"/><text x="5.60" y="13.40" font-size="11.1" fill="#ffe9d8" text-anchor="start" stroke="#ffe9d8" stroke-width=".22">G</text></svg><rect x="1348.11" y="581.60" width="10.13" height="27.9" rx="3.1" fill="#ae5825" stroke="#1e0a03" stroke-width="1.0"/><svg x="1348.11" y="581.60" width="9.73" height="27.9" viewBox="0 0 9.73 27.9"><rect x=".4" y="21.7" width="9.53" height="2" fill="#ffc9a2"/></svg><rect x="1358.54" y="581.60" width="10.13" height="27.9" rx="3.1" fill="#ae5825" stroke="#1e0a03" stroke-width="1.0"/><svg x="1358.54" y="581.60" width="9.73" height="27.9" viewBox="0 0 9.73 27.9"><rect x=".4" y="21.7" width="9.53" height="2" fill="#ffc9a2"/></svg><rect x="1368.96" y="581.60" width="10.13" height="27.9" rx="3.1" fill="#ae5825" stroke="#1e0a03" stroke-width="1.0"/><svg x="1368.96" y="581.60" width="9.73" height="27.9" viewBox="0 0 9.73 27.9"><rect x=".4" y="21.7" width="9.53" height="2" fill="#ffc9a2"/></svg><rect x="1379.39" y="581.60" width="10.13" height="27.9" rx="3.1" fill="#ae5825" stroke="#1e0a03" stroke-width="1.0"/><svg x="1379.39" y="581.60" width="9.73" height="27.9" viewBox="0 0 9.73 27.9"><rect x=".4" y="21.7" width="9.53" height="2" fill="#ffc9a2"/></svg><rect x="1389.82" y="581.60" width="20.55" height="27.9" rx="3.5" fill="#ae5825" stroke="#1e0a03" stroke-width="1.0"/><svg x="1389.82" y="581.60" width="20.15" height="27.9" viewBox="0 0 20.15 27.9"><rect x=".4" y="21.7" width="19.95" height="2" fill="#ffc9a2"/><text x="5.60" y="13.40" font-size="11.1" fill="#ffe9d8" text-anchor="start" stroke="#ffe9d8" stroke-width=".22">D</text></svg><rect x="1410.67" y="581.60" width="51.83" height="27.9" rx="3.5" fill="#ae5825" stroke="#1e0a03" stroke-width="1.0"/><svg x="1410.67" y="581.60" width="51.43" height="27.9" viewBox="0 0 51.43 27.9"><rect x=".4" y="21.7" width="51.23" height="2" fill="#ffc9a2"/><text x="5.60" y="13.40" font-size="11.1" fill="#ffe9d8" text-anchor="start" stroke="#ffe9d8" stroke-width=".22">G Main</text></svg><rect x="1462.80" y="581.60" width="10.13" height="27.9" rx="3.1" fill="#ae5825" stroke="#1e0a03" stroke-width="1.0"/><svg x="1462.80" y="581.60" width="9.73" height="27.9" viewBox="0 0 9.73 27.9"><rect x=".4" y="21.7" width="9.53" height="2" fill="#ffc9a2"/></svg><rect x="1473.23" y="581.60" width="10.13" height="27.9" rx="3.1" fill="#ae5825" stroke="#1e0a03" stroke-width="1.0"/><svg x="1473.23" y="581.60" width="9.73" height="27.9" viewBox="0 0 9.73 27.9"><rect x=".4" y="21.7" width="9.53" height="2" fill="#ffc9a2"/></svg><rect x="1483.66" y="581.60" width="10.13" height="27.9" rx="3.1" fill="#ae5825" stroke="#1e0a03" stroke-width="1.0"/><svg x="1483.66" y="581.60" width="9.73" height="27.9" viewBox="0 0 9.73 27.9"><rect x=".4" y="21.7" width="9.53" height="2" fill="#ffc9a2"/></svg><rect x="1494.08" y="581.60" width="20.55" height="27.9" rx="3.5" fill="#ae5825" stroke="#1e0a03" stroke-width="1.0"/><svg x="1494.08" y="581.60" width="20.15" height="27.9" viewBox="0 0 20.15 27.9"><rect x=".4" y="21.7" width="19.95" height="2" fill="#ffc9a2"/><text x="5.60" y="13.40" font-size="11.1" fill="#ffe9d8" text-anchor="start" stroke="#ffe9d8" stroke-width=".22">G</text></svg><rect x="1514.93" y="581.60" width="10.13" height="27.9" rx="3.1" fill="#ae5825" stroke="#1e0a03" stroke-width="1.0"/><svg x="1514.93" y="581.60" width="9.73" height="27.9" viewBox="0 0 9.73 27.9"><rect x=".4" y="21.7" width="9.53" height="2" fill="#ffc9a2"/></svg><rect x="1525.36" y="581.60" width="10.13" height="27.9" rx="3.1" fill="#ae5825" stroke="#1e0a03" stroke-width="1.0"/><svg x="1525.36" y="581.60" width="9.73" height="27.9" viewBox="0 0 9.73 27.9"><rect x=".4" y="21.7" width="9.53" height="2" fill="#ffc9a2"/></svg><rect x="1535.79" y="581.60" width="10.13" height="27.9" rx="3.1" fill="#ae5825" stroke="#1e0a03" stroke-width="1.0"/><svg x="1535.79" y="581.60" width="9.73" height="27.9" viewBox="0 0 9.73 27.9"><rect x=".4" y="21.7" width="9.53" height="2" fill="#ffc9a2"/></svg><rect x="1546.21" y="581.60" width="10.13" height="27.9" rx="3.1" fill="#ae5825" stroke="#1e0a03" stroke-width="1.0"/><svg x="1546.21" y="581.60" width="9.73" height="27.9" viewBox="0 0 9.73 27.9"><rect x=".4" y="21.7" width="9.53" height="2" fill="#ffc9a2"/></svg><rect x="1556.64" y="581.60" width="20.55" height="27.9" rx="3.5" fill="#ae5825" stroke="#1e0a03" stroke-width="1.0"/><svg x="1556.64" y="581.60" width="20.15" height="27.9" viewBox="0 0 20.15 27.9"><rect x=".4" y="21.7" width="19.95" height="2" fill="#ffc9a2"/><text x="5.60" y="13.40" font-size="11.1" fill="#ffe9d8" text-anchor="start" stroke="#ffe9d8" stroke-width=".22">D</text></svg><rect x="1577.49" y="581.60" width="51.83" height="27.9" rx="3.5" fill="#ae5825" stroke="#1e0a03" stroke-width="1.0"/><svg x="1577.49" y="581.60" width="51.43" height="27.9" viewBox="0 0 51.43 27.9"><rect x=".4" y="21.7" width="51.23" height="2" fill="#ffc9a2"/><text x="5.60" y="13.40" font-size="11.1" fill="#ffe9d8" text-anchor="start" stroke="#ffe9d8" stroke-width=".22">G Main</text></svg><rect x="1629.63" y="581.60" width="10.13" height="27.9" rx="3.1" fill="#ae5825" stroke="#1e0a03" stroke-width="1.0"/><svg x="1629.63" y="581.60" width="9.73" height="27.9" viewBox="0 0 9.73 27.9"><rect x=".4" y="21.7" width="9.53" height="2" fill="#ffc9a2"/></svg><rect x="1640.05" y="581.60" width="10.13" height="27.9" rx="3.1" fill="#ae5825" stroke="#1e0a03" stroke-width="1.0"/><svg x="1640.05" y="581.60" width="9.73" height="27.9" viewBox="0 0 9.73 27.9"><rect x=".4" y="21.7" width="9.53" height="2" fill="#ffc9a2"/></svg><rect x="1650.48" y="581.60" width="10.13" height="27.9" rx="3.1" fill="#ae5825" stroke="#1e0a03" stroke-width="1.0"/><svg x="1650.48" y="581.60" width="9.73" height="27.9" viewBox="0 0 9.73 27.9"><rect x=".4" y="21.7" width="9.53" height="2" fill="#ffc9a2"/></svg><rect x="1660.91" y="581.60" width="20.55" height="27.9" rx="3.5" fill="#ae5825" stroke="#1e0a03" stroke-width="1.0"/><svg x="1660.91" y="581.60" width="20.15" height="27.9" viewBox="0 0 20.15 27.9"><rect x=".4" y="21.7" width="19.95" height="2" fill="#ffc9a2"/><text x="5.60" y="13.40" font-size="11.1" fill="#ffe9d8" text-anchor="start" stroke="#ffe9d8" stroke-width=".22">G</text></svg><rect x="1681.76" y="581.60" width="10.13" height="27.9" rx="3.1" fill="#ae5825" stroke="#1e0a03" stroke-width="1.0"/><svg x="1681.76" y="581.60" width="9.73" height="27.9" viewBox="0 0 9.73 27.9"><rect x=".4" y="21.7" width="9.53" height="2" fill="#ffc9a2"/></svg><rect x="1692.19" y="581.60" width="10.13" height="27.9" rx="3.1" fill="#ae5825" stroke="#1e0a03" stroke-width="1.0"/><svg x="1692.19" y="581.60" width="9.73" height="27.9" viewBox="0 0 9.73 27.9"><rect x=".4" y="21.7" width="9.53" height="2" fill="#ffc9a2"/></svg><rect x="1702.61" y="581.60" width="10.13" height="27.9" rx="3.1" fill="#ae5825" stroke="#1e0a03" stroke-width="1.0"/><svg x="1702.61" y="581.60" width="9.73" height="27.9" viewBox="0 0 9.73 27.9"><rect x=".4" y="21.7" width="9.53" height="2" fill="#ffc9a2"/></svg><rect x="1713.04" y="581.60" width="10.13" height="27.9" rx="3.1" fill="#ae5825" stroke="#1e0a03" stroke-width="1.0"/><svg x="1713.04" y="581.60" width="9.73" height="27.9" viewBox="0 0 9.73 27.9"><rect x=".4" y="21.7" width="9.53" height="2" fill="#ffc9a2"/></svg><rect x="1723.47" y="581.60" width="10.13" height="27.9" rx="3.1" fill="#ae5825" stroke="#1e0a03" stroke-width="1.0"/><svg x="1723.47" y="581.60" width="9.73" height="27.9" viewBox="0 0 9.73 27.9"><rect x=".4" y="21.7" width="9.53" height="2" fill="#ffc9a2"/></svg><rect x="1733.89" y="581.60" width="10.13" height="27.9" rx="3.1" fill="#ae5825" stroke="#1e0a03" stroke-width="1.0"/><svg x="1733.89" y="581.60" width="9.73" height="27.9" viewBox="0 0 9.73 27.9"><rect x=".4" y="21.7" width="9.53" height="2" fill="#ffc9a2"/></svg><rect x="1744.32" y="581.60" width="20.55" height="27.9" rx="3.5" fill="#ae5825" stroke="#1e0a03" stroke-width="1.0"/><svg x="1744.32" y="581.60" width="20.15" height="27.9" viewBox="0 0 20.15 27.9"><rect x=".4" y="21.7" width="19.95" height="2" fill="#ffc9a2"/><text x="5.60" y="13.40" font-size="11.1" fill="#ffe9d8" text-anchor="start" stroke="#ffe9d8" stroke-width=".22">G</text></svg><rect x="1765.17" y="581.60" width="10.13" height="27.9" rx="3.1" fill="#ae5825" stroke="#1e0a03" stroke-width="1.0"/><svg x="1765.17" y="581.60" width="9.73" height="27.9" viewBox="0 0 9.73 27.9"><rect x=".4" y="21.7" width="9.53" height="2" fill="#ffc9a2"/></svg><rect x="1775.60" y="581.60" width="10.13" height="27.9" rx="3.1" fill="#ae5825" stroke="#1e0a03" stroke-width="1.0"/><svg x="1775.60" y="581.60" width="9.73" height="27.9" viewBox="0 0 9.73 27.9"><rect x=".4" y="21.7" width="9.53" height="2" fill="#ffc9a2"/></svg><rect x="1786.02" y="581.60" width="10.13" height="27.9" rx="3.1" fill="#ae5825" stroke="#1e0a03" stroke-width="1.0"/><svg x="1786.02" y="581.60" width="9.73" height="27.9" viewBox="0 0 9.73 27.9"><rect x=".4" y="21.7" width="9.53" height="2" fill="#ffc9a2"/></svg><rect x="1796.45" y="581.60" width="10.13" height="27.9" rx="3.1" fill="#ae5825" stroke="#1e0a03" stroke-width="1.0"/><svg x="1796.45" y="581.60" width="9.73" height="27.9" viewBox="0 0 9.73 27.9"><rect x=".4" y="21.7" width="9.53" height="2" fill="#ffc9a2"/></svg><rect x="1806.88" y="581.60" width="10.13" height="27.9" rx="3.1" fill="#ae5825" stroke="#1e0a03" stroke-width="1.0"/><svg x="1806.88" y="581.60" width="9.73" height="27.9" viewBox="0 0 9.73 27.9"><rect x=".4" y="21.7" width="9.53" height="2" fill="#ffc9a2"/></svg><rect x="1817.30" y="581.60" width="10.13" height="27.9" rx="3.1" fill="#ae5825" stroke="#1e0a03" stroke-width="1.0"/><svg x="1817.30" y="581.60" width="9.73" height="27.9" viewBox="0 0 9.73 27.9"><rect x=".4" y="21.7" width="9.53" height="2" fill="#ffc9a2"/></svg><rect x="1827.73" y="581.60" width="20.55" height="27.9" rx="3.5" fill="#ae5825" stroke="#1e0a03" stroke-width="1.0"/><svg x="1827.73" y="581.60" width="20.15" height="27.9" viewBox="0 0 20.15 27.9"><rect x=".4" y="21.7" width="19.95" height="2" fill="#ffc9a2"/><text x="5.60" y="13.40" font-size="11.1" fill="#ffe9d8" text-anchor="start" stroke="#ffe9d8" stroke-width=".22">G</text></svg><rect x="1848.58" y="581.60" width="10.13" height="27.9" rx="3.1" fill="#ae5825" stroke="#1e0a03" stroke-width="1.0"/><svg x="1848.58" y="581.60" width="9.73" height="27.9" viewBox="0 0 9.73 27.9"><rect x=".4" y="21.7" width="9.53" height="2" fill="#ffc9a2"/></svg><rect x="1859.01" y="581.60" width="10.13" height="27.9" rx="3.1" fill="#ae5825" stroke="#1e0a03" stroke-width="1.0"/><svg x="1859.01" y="581.60" width="9.73" height="27.9" viewBox="0 0 9.73 27.9"><rect x=".4" y="21.7" width="9.53" height="2" fill="#ffc9a2"/></svg><rect x="1869.44" y="581.60" width="10.13" height="27.9" rx="3.1" fill="#ae5825" stroke="#1e0a03" stroke-width="1.0"/><svg x="1869.44" y="581.60" width="9.73" height="27.9" viewBox="0 0 9.73 27.9"><rect x=".4" y="21.7" width="9.53" height="2" fill="#ffc9a2"/></svg><rect x="1879.86" y="581.60" width="10.13" height="27.9" rx="3.1" fill="#ae5825" stroke="#1e0a03" stroke-width="1.0"/><svg x="1879.86" y="581.60" width="9.73" height="27.9" viewBox="0 0 9.73 27.9"><rect x=".4" y="21.7" width="9.53" height="2" fill="#ffc9a2"/></svg><rect x="1890.29" y="581.60" width="10.13" height="27.9" rx="3.1" fill="#ae5825" stroke="#1e0a03" stroke-width="1.0"/><svg x="1890.29" y="581.60" width="9.73" height="27.9" viewBox="0 0 9.73 27.9"><rect x=".4" y="21.7" width="9.53" height="2" fill="#ffc9a2"/></svg><rect x="1900.72" y="581.60" width="10.13" height="27.9" rx="3.1" fill="#ae5825" stroke="#1e0a03" stroke-width="1.0"/><svg x="1900.72" y="581.60" width="9.73" height="27.9" viewBox="0 0 9.73 27.9"><rect x=".4" y="21.7" width="9.53" height="2" fill="#ffc9a2"/></svg><rect x="1911.14" y="581.60" width="10.13" height="27.9" rx="3.1" fill="#ae5825" stroke="#1e0a03" stroke-width="1.0"/><svg x="1911.14" y="581.60" width="9.73" height="27.9" viewBox="0 0 9.73 27.9"><rect x=".4" y="21.7" width="9.53" height="2" fill="#ffc9a2"/></svg><rect x="1921.57" y="581.60" width="10.13" height="27.9" rx="3.1" fill="#ae5825" stroke="#1e0a03" stroke-width="1.0"/><svg x="1921.57" y="581.60" width="9.73" height="27.9" viewBox="0 0 9.73 27.9"><rect x=".4" y="21.7" width="9.53" height="2" fill="#ffc9a2"/></svg><rect x="1410.67" y="611.60" width="51.83" height="27.9" rx="3.5" fill="#ae5825" stroke="#1e0a03" stroke-width="1.0"/><svg x="1410.67" y="611.60" width="51.43" height="27.9" viewBox="0 0 51.43 27.9"><rect x=".4" y="21.7" width="51.23" height="2" fill="#ffc9a2"/><text x="5.60" y="13.40" font-size="11.1" fill="#ffe9d8" text-anchor="start" stroke="#ffe9d8" stroke-width=".22">G Main</text></svg><rect x="1462.80" y="611.60" width="10.13" height="27.9" rx="3.1" fill="#ae5825" stroke="#1e0a03" stroke-width="1.0"/><svg x="1462.80" y="611.60" width="9.73" height="27.9" viewBox="0 0 9.73 27.9"><rect x=".4" y="21.7" width="9.53" height="2" fill="#ffc9a2"/></svg><rect x="1473.23" y="611.60" width="10.13" height="27.9" rx="3.1" fill="#ae5825" stroke="#1e0a03" stroke-width="1.0"/><svg x="1473.23" y="611.60" width="9.73" height="27.9" viewBox="0 0 9.73 27.9"><rect x=".4" y="21.7" width="9.53" height="2" fill="#ffc9a2"/></svg><rect x="1483.66" y="611.60" width="10.13" height="27.9" rx="3.1" fill="#ae5825" stroke="#1e0a03" stroke-width="1.0"/><svg x="1483.66" y="611.60" width="9.73" height="27.9" viewBox="0 0 9.73 27.9"><rect x=".4" y="21.7" width="9.53" height="2" fill="#ffc9a2"/></svg><rect x="1494.08" y="611.60" width="20.55" height="27.9" rx="3.5" fill="#ae5825" stroke="#1e0a03" stroke-width="1.0"/><svg x="1494.08" y="611.60" width="20.15" height="27.9" viewBox="0 0 20.15 27.9"><rect x=".4" y="21.7" width="19.95" height="2" fill="#ffc9a2"/><text x="5.60" y="13.40" font-size="11.1" fill="#ffe9d8" text-anchor="start" stroke="#ffe9d8" stroke-width=".22">G</text></svg><rect x="1514.93" y="611.60" width="10.13" height="27.9" rx="3.1" fill="#ae5825" stroke="#1e0a03" stroke-width="1.0"/><svg x="1514.93" y="611.60" width="9.73" height="27.9" viewBox="0 0 9.73 27.9"><rect x=".4" y="21.7" width="9.53" height="2" fill="#ffc9a2"/></svg><rect x="1525.36" y="611.60" width="10.13" height="27.9" rx="3.1" fill="#ae5825" stroke="#1e0a03" stroke-width="1.0"/><svg x="1525.36" y="611.60" width="9.73" height="27.9" viewBox="0 0 9.73 27.9"><rect x=".4" y="21.7" width="9.53" height="2" fill="#ffc9a2"/></svg><rect x="1535.79" y="611.60" width="10.13" height="27.9" rx="3.1" fill="#ae5825" stroke="#1e0a03" stroke-width="1.0"/><svg x="1535.79" y="611.60" width="9.73" height="27.9" viewBox="0 0 9.73 27.9"><rect x=".4" y="21.7" width="9.53" height="2" fill="#ffc9a2"/></svg><rect x="1546.21" y="611.60" width="10.13" height="27.9" rx="3.1" fill="#ae5825" stroke="#1e0a03" stroke-width="1.0"/><svg x="1546.21" y="611.60" width="9.73" height="27.9" viewBox="0 0 9.73 27.9"><rect x=".4" y="21.7" width="9.53" height="2" fill="#ffc9a2"/></svg><rect x="1556.64" y="611.60" width="20.55" height="27.9" rx="3.5" fill="#ae5825" stroke="#1e0a03" stroke-width="1.0"/><svg x="1556.64" y="611.60" width="20.15" height="27.9" viewBox="0 0 20.15 27.9"><rect x=".4" y="21.7" width="19.95" height="2" fill="#ffc9a2"/><text x="5.60" y="13.40" font-size="11.1" fill="#ffe9d8" text-anchor="start" stroke="#ffe9d8" stroke-width=".22">D</text></svg><rect x="1577.49" y="611.60" width="51.83" height="27.9" rx="3.5" fill="#ae5825" stroke="#1e0a03" stroke-width="1.0"/><svg x="1577.49" y="611.60" width="51.43" height="27.9" viewBox="0 0 51.43 27.9"><rect x=".4" y="21.7" width="51.23" height="2" fill="#ffc9a2"/><text x="5.60" y="13.40" font-size="11.1" fill="#ffe9d8" text-anchor="start" stroke="#ffe9d8" stroke-width=".22">G Main</text></svg><rect x="1629.63" y="611.60" width="10.13" height="27.9" rx="3.1" fill="#ae5825" stroke="#1e0a03" stroke-width="1.0"/><svg x="1629.63" y="611.60" width="9.73" height="27.9" viewBox="0 0 9.73 27.9"><rect x=".4" y="21.7" width="9.53" height="2" fill="#ffc9a2"/></svg><rect x="1640.05" y="611.60" width="10.13" height="27.9" rx="3.1" fill="#ae5825" stroke="#1e0a03" stroke-width="1.0"/><svg x="1640.05" y="611.60" width="9.73" height="27.9" viewBox="0 0 9.73 27.9"><rect x=".4" y="21.7" width="9.53" height="2" fill="#ffc9a2"/></svg><rect x="1650.48" y="611.60" width="10.13" height="27.9" rx="3.1" fill="#ae5825" stroke="#1e0a03" stroke-width="1.0"/><svg x="1650.48" y="611.60" width="9.73" height="27.9" viewBox="0 0 9.73 27.9"><rect x=".4" y="21.7" width="9.53" height="2" fill="#ffc9a2"/></svg><rect x="1660.91" y="611.60" width="20.55" height="27.9" rx="3.5" fill="#ae5825" stroke="#1e0a03" stroke-width="1.0"/><svg x="1660.91" y="611.60" width="20.15" height="27.9" viewBox="0 0 20.15 27.9"><rect x=".4" y="21.7" width="19.95" height="2" fill="#ffc9a2"/><text x="5.60" y="13.40" font-size="11.1" fill="#ffe9d8" text-anchor="start" stroke="#ffe9d8" stroke-width=".22">G</text></svg><rect x="1681.76" y="611.60" width="10.13" height="27.9" rx="3.1" fill="#ae5825" stroke="#1e0a03" stroke-width="1.0"/><svg x="1681.76" y="611.60" width="9.73" height="27.9" viewBox="0 0 9.73 27.9"><rect x=".4" y="21.7" width="9.53" height="2" fill="#ffc9a2"/></svg><rect x="1692.19" y="611.60" width="10.13" height="27.9" rx="3.1" fill="#ae5825" stroke="#1e0a03" stroke-width="1.0"/><svg x="1692.19" y="611.60" width="9.73" height="27.9" viewBox="0 0 9.73 27.9"><rect x=".4" y="21.7" width="9.53" height="2" fill="#ffc9a2"/></svg><rect x="1702.61" y="611.60" width="10.13" height="27.9" rx="3.1" fill="#ae5825" stroke="#1e0a03" stroke-width="1.0"/><svg x="1702.61" y="611.60" width="9.73" height="27.9" viewBox="0 0 9.73 27.9"><rect x=".4" y="21.7" width="9.53" height="2" fill="#ffc9a2"/></svg><rect x="1713.04" y="611.60" width="10.13" height="27.9" rx="3.1" fill="#ae5825" stroke="#1e0a03" stroke-width="1.0"/><svg x="1713.04" y="611.60" width="9.73" height="27.9" viewBox="0 0 9.73 27.9"><rect x=".4" y="21.7" width="9.53" height="2" fill="#ffc9a2"/></svg><rect x="1723.47" y="611.60" width="10.13" height="27.9" rx="3.1" fill="#ae5825" stroke="#1e0a03" stroke-width="1.0"/><svg x="1723.47" y="611.60" width="9.73" height="27.9" viewBox="0 0 9.73 27.9"><rect x=".4" y="21.7" width="9.53" height="2" fill="#ffc9a2"/></svg><rect x="1733.89" y="611.60" width="10.13" height="27.9" rx="3.1" fill="#ae5825" stroke="#1e0a03" stroke-width="1.0"/><svg x="1733.89" y="611.60" width="9.73" height="27.9" viewBox="0 0 9.73 27.9"><rect x=".4" y="21.7" width="9.53" height="2" fill="#ffc9a2"/></svg><rect x="1744.32" y="611.60" width="20.55" height="27.9" rx="3.5" fill="#ae5825" stroke="#1e0a03" stroke-width="1.0"/><svg x="1744.32" y="611.60" width="20.15" height="27.9" viewBox="0 0 20.15 27.9"><rect x=".4" y="21.7" width="19.95" height="2" fill="#ffc9a2"/><text x="5.60" y="13.40" font-size="11.1" fill="#ffe9d8" text-anchor="start" stroke="#ffe9d8" stroke-width=".22">G</text></svg><rect x="1765.17" y="611.60" width="10.13" height="27.9" rx="3.1" fill="#ae5825" stroke="#1e0a03" stroke-width="1.0"/><svg x="1765.17" y="611.60" width="9.73" height="27.9" viewBox="0 0 9.73 27.9"><rect x=".4" y="21.7" width="9.53" height="2" fill="#ffc9a2"/></svg><rect x="1775.60" y="611.60" width="10.13" height="27.9" rx="3.1" fill="#ae5825" stroke="#1e0a03" stroke-width="1.0"/><svg x="1775.60" y="611.60" width="9.73" height="27.9" viewBox="0 0 9.73 27.9"><rect x=".4" y="21.7" width="9.53" height="2" fill="#ffc9a2"/></svg><rect x="1786.02" y="611.60" width="10.13" height="27.9" rx="3.1" fill="#ae5825" stroke="#1e0a03" stroke-width="1.0"/><svg x="1786.02" y="611.60" width="9.73" height="27.9" viewBox="0 0 9.73 27.9"><rect x=".4" y="21.7" width="9.53" height="2" fill="#ffc9a2"/></svg><rect x="1796.45" y="611.60" width="10.13" height="27.9" rx="3.1" fill="#ae5825" stroke="#1e0a03" stroke-width="1.0"/><svg x="1796.45" y="611.60" width="9.73" height="27.9" viewBox="0 0 9.73 27.9"><rect x=".4" y="21.7" width="9.53" height="2" fill="#ffc9a2"/></svg><rect x="1806.88" y="611.60" width="10.13" height="27.9" rx="3.1" fill="#ae5825" stroke="#1e0a03" stroke-width="1.0"/><svg x="1806.88" y="611.60" width="9.73" height="27.9" viewBox="0 0 9.73 27.9"><rect x=".4" y="21.7" width="9.53" height="2" fill="#ffc9a2"/></svg><rect x="1817.30" y="611.60" width="10.13" height="27.9" rx="3.1" fill="#ae5825" stroke="#1e0a03" stroke-width="1.0"/><svg x="1817.30" y="611.60" width="9.73" height="27.9" viewBox="0 0 9.73 27.9"><rect x=".4" y="21.7" width="9.53" height="2" fill="#ffc9a2"/></svg><rect x="1827.73" y="611.60" width="20.55" height="27.9" rx="3.5" fill="#ae5825" stroke="#1e0a03" stroke-width="1.0"/><svg x="1827.73" y="611.60" width="20.15" height="27.9" viewBox="0 0 20.15 27.9"><rect x=".4" y="21.7" width="19.95" height="2" fill="#ffc9a2"/><text x="5.60" y="13.40" font-size="11.1" fill="#ffe9d8" text-anchor="start" stroke="#ffe9d8" stroke-width=".22">G</text></svg><rect x="1848.58" y="611.60" width="10.13" height="27.9" rx="3.1" fill="#ae5825" stroke="#1e0a03" stroke-width="1.0"/><svg x="1848.58" y="611.60" width="9.73" height="27.9" viewBox="0 0 9.73 27.9"><rect x=".4" y="21.7" width="9.53" height="2" fill="#ffc9a2"/></svg><rect x="1859.01" y="611.60" width="10.13" height="27.9" rx="3.1" fill="#ae5825" stroke="#1e0a03" stroke-width="1.0"/><svg x="1859.01" y="611.60" width="9.73" height="27.9" viewBox="0 0 9.73 27.9"><rect x=".4" y="21.7" width="9.53" height="2" fill="#ffc9a2"/></svg><rect x="1869.44" y="611.60" width="10.13" height="27.9" rx="3.1" fill="#ae5825" stroke="#1e0a03" stroke-width="1.0"/><svg x="1869.44" y="611.60" width="9.73" height="27.9" viewBox="0 0 9.73 27.9"><rect x=".4" y="21.7" width="9.53" height="2" fill="#ffc9a2"/></svg><rect x="1879.86" y="611.60" width="10.13" height="27.9" rx="3.1" fill="#ae5825" stroke="#1e0a03" stroke-width="1.0"/><svg x="1879.86" y="611.60" width="9.73" height="27.9" viewBox="0 0 9.73 27.9"><rect x=".4" y="21.7" width="9.53" height="2" fill="#ffc9a2"/></svg><rect x="1890.29" y="611.60" width="10.13" height="27.9" rx="3.1" fill="#ae5825" stroke="#1e0a03" stroke-width="1.0"/><svg x="1890.29" y="611.60" width="9.73" height="27.9" viewBox="0 0 9.73 27.9"><rect x=".4" y="21.7" width="9.53" height="2" fill="#ffc9a2"/></svg><rect x="1900.72" y="611.60" width="10.13" height="27.9" rx="3.1" fill="#ae5825" stroke="#1e0a03" stroke-width="1.0"/><svg x="1900.72" y="611.60" width="9.73" height="27.9" viewBox="0 0 9.73 27.9"><rect x=".4" y="21.7" width="9.53" height="2" fill="#ffc9a2"/></svg><rect x="1911.14" y="611.60" width="10.13" height="27.9" rx="3.1" fill="#ae5825" stroke="#1e0a03" stroke-width="1.0"/><svg x="1911.14" y="611.60" width="9.73" height="27.9" viewBox="0 0 9.73 27.9"><rect x=".4" y="21.7" width="9.53" height="2" fill="#ffc9a2"/></svg><rect x="1921.57" y="611.60" width="10.13" height="27.9" rx="3.1" fill="#ae5825" stroke="#1e0a03" stroke-width="1.0"/><svg x="1921.57" y="611.60" width="9.73" height="27.9" viewBox="0 0 9.73 27.9"><rect x=".4" y="21.7" width="9.53" height="2" fill="#ffc9a2"/></svg><rect x="680.82" y="611.60" width="41.41" height="27.9" rx="3.5" fill="#ae5825" stroke="#1e0a03" stroke-width="1.0"/><svg x="680.82" y="611.60" width="41.01" height="27.9" viewBox="0 0 41.01 27.9"><rect x=".4" y="21.7" width="38.01" height="2" fill="#ffc9a2"/><text x="5.60" y="13.40" font-size="11.1" fill="#ffe9d8" text-anchor="start" stroke="#ffe9d8" stroke-width=".22">Em Ma</text></svg><rect x="722.52" y="611.60" width="20.55" height="27.9" rx="3.5" fill="#ae5825" stroke="#1e0a03" stroke-width="1.0"/><svg x="722.52" y="611.60" width="20.15" height="27.9" viewBox="0 0 20.15 27.9"><rect x=".4" y="21.7" width="19.95" height="2" fill="#ffc9a2"/><text x="5.60" y="13.40" font-size="11.1" fill="#ffe9d8" text-anchor="start" stroke="#ffe9d8" stroke-width=".22">G</text></svg><rect x="743.37" y="611.60" width="20.55" height="27.9" rx="3.5" fill="#ae5825" stroke="#1e0a03" stroke-width="1.0"/><svg x="743.37" y="611.60" width="20.15" height="27.9" viewBox="0 0 20.15 27.9"><rect x=".4" y="21.7" width="19.95" height="2" fill="#ffc9a2"/><text x="5.60" y="13.40" font-size="11.1" fill="#ffe9d8" text-anchor="start" stroke="#ffe9d8" stroke-width=".22">A</text></svg><rect x="764.23" y="611.60" width="20.55" height="27.9" rx="3.5" fill="#ae5825" stroke="#1e0a03" stroke-width="1.0"/><svg x="764.23" y="611.60" width="20.15" height="27.9" viewBox="0 0 20.15 27.9"><rect x=".4" y="21.7" width="19.95" height="2" fill="#ffc9a2"/><text x="5.60" y="13.40" font-size="11.1" fill="#ffe9d8" text-anchor="start" stroke="#ffe9d8" stroke-width=".22">E</text></svg><rect x="785.08" y="611.60" width="41.41" height="27.9" rx="3.5" fill="#ae5825" stroke="#1e0a03" stroke-width="1.0"/><svg x="785.08" y="611.60" width="41.01" height="27.9" viewBox="0 0 41.01 27.9"><rect x=".4" y="21.7" width="38.01" height="2" fill="#ffc9a2"/><text x="5.60" y="13.40" font-size="11.1" fill="#ffe9d8" text-anchor="start" stroke="#ffe9d8" stroke-width=".22">Em M</text></svg><rect x="826.79" y="611.60" width="20.55" height="27.9" rx="3.5" fill="#ae5825" stroke="#1e0a03" stroke-width="1.0"/><svg x="826.79" y="611.60" width="20.15" height="27.9" viewBox="0 0 20.15 27.9"><rect x=".4" y="21.7" width="19.95" height="2" fill="#ffc9a2"/><text x="5.60" y="13.40" font-size="11.1" fill="#ffe9d8" text-anchor="start" stroke="#ffe9d8" stroke-width=".22">G</text></svg><rect x="847.64" y="611.60" width="20.55" height="27.9" rx="3.5" fill="#ae5825" stroke="#1e0a03" stroke-width="1.0"/><svg x="847.64" y="611.60" width="20.15" height="27.9" viewBox="0 0 20.15 27.9"><rect x=".4" y="21.7" width="19.95" height="2" fill="#ffc9a2"/><text x="5.60" y="13.40" font-size="11.1" fill="#ffe9d8" text-anchor="start" stroke="#ffe9d8" stroke-width=".22">A</text></svg><rect x="868.49" y="611.60" width="20.55" height="27.9" rx="3.5" fill="#ae5825" stroke="#1e0a03" stroke-width="1.0"/><svg x="868.49" y="611.60" width="20.15" height="27.9" viewBox="0 0 20.15 27.9"><rect x=".4" y="21.7" width="19.95" height="2" fill="#ffc9a2"/><text x="5.60" y="13.40" font-size="11.1" fill="#ffe9d8" text-anchor="start" stroke="#ffe9d8" stroke-width=".22">E</text></svg><rect x="889.35" y="611.60" width="20.55" height="27.9" rx="3.5" fill="#ae5825" stroke="#1e0a03" stroke-width="1.0"/><svg x="889.35" y="611.60" width="20.15" height="27.9" viewBox="0 0 20.15 27.9"><rect x=".4" y="21.7" width="19.95" height="2" fill="#ffc9a2"/><text x="5.60" y="13.40" font-size="11.1" fill="#ffe9d8" text-anchor="start" stroke="#ffe9d8" stroke-width=".22">A</text></svg><rect x="910.20" y="611.60" width="20.55" height="27.9" rx="3.5" fill="#ae5825" stroke="#1e0a03" stroke-width="1.0"/><svg x="910.20" y="611.60" width="20.15" height="27.9" viewBox="0 0 20.15 27.9"><rect x=".4" y="21.7" width="19.95" height="2" fill="#ffc9a2"/><text x="5.60" y="13.40" font-size="11.1" fill="#ffe9d8" text-anchor="start" stroke="#ffe9d8" stroke-width=".22">G</text></svg><rect x="931.05" y="611.60" width="20.55" height="27.9" rx="3.5" fill="#ae5825" stroke="#1e0a03" stroke-width="1.0"/><svg x="931.05" y="611.60" width="20.15" height="27.9" viewBox="0 0 20.15 27.9"><rect x=".4" y="21.7" width="19.95" height="2" fill="#ffc9a2"/><text x="5.60" y="13.40" font-size="11.1" fill="#ffe9d8" text-anchor="start" stroke="#ffe9d8" stroke-width=".22">E</text></svg><rect x="951.90" y="611.60" width="41.41" height="27.9" rx="3.5" fill="#ae5825" stroke="#1e0a03" stroke-width="1.0"/><svg x="951.90" y="611.60" width="41.01" height="27.9" viewBox="0 0 41.01 27.9"><rect x=".4" y="21.7" width="38.01" height="2" fill="#ffc9a2"/><text x="5.60" y="13.40" font-size="11.1" fill="#ffe9d8" text-anchor="start" stroke="#ffe9d8" stroke-width=".22">Em Ma</text></svg><rect x="993.61" y="611.60" width="20.55" height="27.9" rx="3.5" fill="#ae5825" stroke="#1e0a03" stroke-width="1.0"/><svg x="993.61" y="611.60" width="20.15" height="27.9" viewBox="0 0 20.15 27.9"><rect x=".4" y="21.7" width="19.95" height="2" fill="#ffc9a2"/><text x="5.60" y="13.40" font-size="11.1" fill="#ffe9d8" text-anchor="start" stroke="#ffe9d8" stroke-width=".22">G</text></svg><rect x="1014.46" y="611.60" width="20.55" height="27.9" rx="3.5" fill="#ae5825" stroke="#1e0a03" stroke-width="1.0"/><svg x="1014.46" y="611.60" width="20.15" height="27.9" viewBox="0 0 20.15 27.9"><rect x=".4" y="21.7" width="19.95" height="2" fill="#ffc9a2"/><text x="5.60" y="13.40" font-size="11.1" fill="#ffe9d8" text-anchor="start" stroke="#ffe9d8" stroke-width=".22">A</text></svg><rect x="1035.32" y="611.60" width="20.55" height="27.9" rx="3.5" fill="#ae5825" stroke="#1e0a03" stroke-width="1.0"/><svg x="1035.32" y="611.60" width="20.15" height="27.9" viewBox="0 0 20.15 27.9"><rect x=".4" y="21.7" width="19.95" height="2" fill="#ffc9a2"/><text x="5.60" y="13.40" font-size="11.1" fill="#ffe9d8" text-anchor="start" stroke="#ffe9d8" stroke-width=".22">E</text></svg><rect x="1056.17" y="611.60" width="20.55" height="27.9" rx="3.5" fill="#ae5825" stroke="#1e0a03" stroke-width="1.0"/><svg x="1056.17" y="611.60" width="20.15" height="27.9" viewBox="0 0 20.15 27.9"><rect x=".4" y="21.7" width="19.95" height="2" fill="#ffc9a2"/><text x="5.60" y="13.40" font-size="11.1" fill="#ffe9d8" text-anchor="start" stroke="#ffe9d8" stroke-width=".22">A</text></svg><rect x="1077.02" y="611.60" width="20.55" height="27.9" rx="3.5" fill="#ae5825" stroke="#1e0a03" stroke-width="1.0"/><svg x="1077.02" y="611.60" width="20.15" height="27.9" viewBox="0 0 20.15 27.9"><rect x=".4" y="21.7" width="19.95" height="2" fill="#ffc9a2"/><text x="5.60" y="13.40" font-size="11.1" fill="#ffe9d8" text-anchor="start" stroke="#ffe9d8" stroke-width=".22">G</text></svg><rect x="1097.88" y="611.60" width="20.55" height="27.9" rx="3.5" fill="#ae5825" stroke="#1e0a03" stroke-width="1.0"/><svg x="1097.88" y="611.60" width="20.15" height="27.9" viewBox="0 0 20.15 27.9"><rect x=".4" y="21.7" width="19.95" height="2" fill="#ffc9a2"/><text x="5.60" y="13.40" font-size="11.1" fill="#ffe9d8" text-anchor="start" stroke="#ffe9d8" stroke-width=".22">E</text></svg><rect x="1118.73" y="611.60" width="20.55" height="27.9" rx="3.5" fill="#ae5825" stroke="#1e0a03" stroke-width="1.0"/><svg x="1118.73" y="611.60" width="20.15" height="27.9" viewBox="0 0 20.15 27.9"><rect x=".4" y="21.7" width="19.95" height="2" fill="#ffc9a2"/><text x="5.60" y="13.40" font-size="11.1" fill="#ffe9d8" text-anchor="start" stroke="#ffe9d8" stroke-width=".22">En</text></svg><rect x="993.61" y="641.60" width="145.67" height="27.9" rx="3.5" fill="#ae5825" stroke="#1e0a03" stroke-width="1.0"/><svg x="993.61" y="641.60" width="145.27" height="27.9" viewBox="0 0 145.27 27.9"><rect x="3.30" y="21.7" width="4.35" height="2" fill="#ffc9a2"/><rect x="9.10" y="21.7" width="3.63" height="2" fill="#ffc9a2"/><rect x="16.36" y="21.7" width="16.68" height="2" fill="#ffc9a2"/><rect x="37.39" y="21.7" width="2.90" height="2" fill="#ffc9a2"/><rect x="41.75" y="21.7" width="16.68" height="2" fill="#ffc9a2"/><rect x="64.23" y="21.7" width="5.08" height="2" fill="#ffc9a2"/><rect x="73.66" y="21.7" width="2.90" height="2" fill="#ffc9a2"/><rect x="78.01" y="21.7" width="3.63" height="2" fill="#ffc9a2"/><rect x="83.09" y="21.7" width="8.70" height="2" fill="#ffc9a2"/><rect x="93.25" y="21.7" width="2.18" height="2" fill="#ffc9a2"/><rect x="99.05" y="21.7" width="46.42" height="2" fill="#ffc9a2"/><text x="5.60" y="13.40" font-size="11.1" fill="#ffe9d8" text-anchor="start" stroke="#ffe9d8" stroke-width=".22">Glassy FM Lead</text></svg><rect x="1199.01" y="641.60" width="43.49" height="27.9" rx="3.5" fill="#ae5825" stroke="#1e0a03" stroke-width="1.0"/><svg x="1199.01" y="641.60" width="43.09" height="27.9" viewBox="0 0 43.09 27.9"><rect x="0.40" y="21.7" width="19.30" height="2" fill="#ffc9a2"/><rect x="22.70" y="21.7" width="20.59" height="2" fill="#ffc9a2"/><text x="5.60" y="13.40" font-size="11.1" fill="#ffe9d8" text-anchor="start" stroke="#ffe9d8" stroke-width=".22">Glassy</text></svg><rect x="1640.05" y="641.60" width="20.55" height="27.9" rx="3.5" fill="#ae5825" stroke="#1e0a03" stroke-width="1.0"/><svg x="1640.05" y="641.60" width="20.15" height="27.9" viewBox="0 0 20.15 27.9"><rect x="1.6" y="3.3" width="13.2" height="13.6" rx="1.5" fill="#8a3f18" opacity=".75"/><path d="M4.6 5.8 v8.6 l7.2 -4.3z" fill="#fff"/></svg><rect x="1660.91" y="641.60" width="41.41" height="27.9" rx="3.5" fill="#ae5825" stroke="#1e0a03" stroke-width="1.0"/><svg x="1660.91" y="641.60" width="41.01" height="27.9" viewBox="0 0 41.01 27.9"><rect x="1.6" y="3.3" width="29.0" height="13.6" rx="1.5" fill="#8a3f18" opacity=".75"/><path d="M4.6 5.8 v8.6 l7.2 -4.3z" fill="#fff"/><text x="21.20" y="14.10" font-size="10.5" fill="#fff" text-anchor="start" >2</text></svg><rect x="1702.61" y="641.60" width="41.41" height="27.9" rx="3.5" fill="#ae5825" stroke="#1e0a03" stroke-width="1.0"/><svg x="1702.61" y="641.60" width="41.01" height="27.9" viewBox="0 0 41.01 27.9"><rect x="1.6" y="3.3" width="29.0" height="13.6" rx="1.5" fill="#8a3f18" opacity=".75"/><path d="M4.6 5.8 v8.6 l7.2 -4.3z" fill="#fff"/><text x="21.20" y="14.10" font-size="10.5" fill="#fff" text-anchor="start" >2</text></svg><rect x="1765.17" y="641.60" width="145.67" height="27.9" rx="3.5" fill="#ae5825" stroke="#1e0a03" stroke-width="1.0"/><svg x="1765.17" y="641.60" width="145.27" height="27.9" viewBox="0 0 145.27 27.9"><rect x="3.30" y="21.7" width="4.35" height="2" fill="#ffc9a2"/><rect x="9.10" y="21.7" width="3.63" height="2" fill="#ffc9a2"/><rect x="16.36" y="21.7" width="16.68" height="2" fill="#ffc9a2"/><rect x="37.39" y="21.7" width="2.90" height="2" fill="#ffc9a2"/><rect x="41.75" y="21.7" width="16.68" height="2" fill="#ffc9a2"/><rect x="61.33" y="21.7" width="7.25" height="2" fill="#ffc9a2"/><rect x="70.03" y="21.7" width="2.90" height="2" fill="#ffc9a2"/><rect x="73.66" y="21.7" width="7.98" height="2" fill="#ffc9a2"/><rect x="84.54" y="21.7" width="2.90" height="2" fill="#ffc9a2"/><rect x="90.34" y="21.7" width="4.35" height="2" fill="#ffc9a2"/><rect x="101.95" y="21.7" width="11.61" height="2" fill="#ffc9a2"/><rect x="116.46" y="21.7" width="7.25" height="2" fill="#ffc9a2"/><rect x="128.06" y="21.7" width="11.61" height="2" fill="#ffc9a2"/><text x="5.60" y="13.40" font-size="11.1" fill="#ffe9d8" text-anchor="start" stroke="#ffe9d8" stroke-width=".22">Glassy FM Lead</text></svg><rect x="1911.14" y="641.60" width="30.98" height="27.9" rx="3.5" fill="#ae5825" stroke="#1e0a03" stroke-width="1.0"/><svg x="1911.14" y="641.60" width="30.58" height="27.9" viewBox="0 0 30.58 27.9"><rect x=".4" y="21.7" width="30.38" height="2" fill="#ffc9a2"/></svg><rect x="576.55" y="701.60" width="103.96" height="27.9" rx="3.5" fill="#ae5825" stroke="#1e0a03" stroke-width="1.0"/><svg x="576.55" y="701.60" width="103.56" height="27.9" viewBox="0 0 103.56 27.9"><rect x=".4" y="21.7" width="103.36" height="2" fill="#ffc9a2"/><text x="5.60" y="13.40" font-size="11.1" fill="#ffe9d8" text-anchor="start" stroke="#ffe9d8" stroke-width=".22">Intro</text></svg><rect x="680.82" y="701.60" width="41.41" height="27.9" rx="3.5" fill="#ae5825" stroke="#1e0a03" stroke-width="1.0"/><svg x="680.82" y="701.60" width="41.01" height="27.9" viewBox="0 0 41.01 27.9"><rect x=".4" y="21.7" width="38.01" height="2" fill="#ffc9a2"/><text x="5.60" y="13.40" font-size="11.1" fill="#ffe9d8" text-anchor="start" stroke="#ffe9d8" stroke-width=".22">Em Ma</text></svg><rect x="764.23" y="701.60" width="20.55" height="27.9" rx="3.5" fill="#ae5825" stroke="#1e0a03" stroke-width="1.0"/><svg x="764.23" y="701.60" width="20.15" height="27.9" viewBox="0 0 20.15 27.9"><rect x=".4" y="21.7" width="19.95" height="2" fill="#ffc9a2"/><text x="5.60" y="13.40" font-size="11.1" fill="#ffe9d8" text-anchor="start" stroke="#ffe9d8" stroke-width=".22">E</text></svg><rect x="868.49" y="701.60" width="20.55" height="27.9" rx="3.5" fill="#ae5825" stroke="#1e0a03" stroke-width="1.0"/><svg x="868.49" y="701.60" width="20.15" height="27.9" viewBox="0 0 20.15 27.9"><rect x=".4" y="21.7" width="19.95" height="2" fill="#ffc9a2"/><text x="5.60" y="13.40" font-size="11.1" fill="#ffe9d8" text-anchor="start" stroke="#ffe9d8" stroke-width=".22">E</text></svg><rect x="1035.32" y="701.60" width="20.55" height="27.9" rx="3.5" fill="#ae5825" stroke="#1e0a03" stroke-width="1.0"/><svg x="1035.32" y="701.60" width="20.15" height="27.9" viewBox="0 0 20.15 27.9"><rect x=".4" y="21.7" width="19.95" height="2" fill="#ffc9a2"/><text x="5.60" y="13.40" font-size="11.1" fill="#ffe9d8" text-anchor="start" stroke="#ffe9d8" stroke-width=".22">E</text></svg><rect x="1097.88" y="701.60" width="41.41" height="27.9" rx="3.5" fill="#ae5825" stroke="#1e0a03" stroke-width="1.0"/><svg x="1097.88" y="701.60" width="41.01" height="27.9" viewBox="0 0 41.01 27.9"><rect x=".4" y="21.7" width="40.81" height="2" fill="#ffc9a2"/><text x="5.60" y="13.40" font-size="11.1" fill="#ffe9d8" text-anchor="start" stroke="#ffe9d8" stroke-width=".22">Ending</text></svg><rect x="1139.58" y="701.60" width="20.55" height="27.9" rx="3.5" fill="#ae5825" stroke="#1e0a03" stroke-width="1.0"/><svg x="1139.58" y="701.60" width="20.15" height="27.9" viewBox="0 0 20.15 27.9"><rect x=".4" y="21.7" width="19.95" height="2" fill="#ffc9a2"/><text x="5.60" y="13.40" font-size="11.1" fill="#ffe9d8" text-anchor="start" stroke="#ffe9d8" stroke-width=".22">En</text></svg><rect x="576.55" y="731.60" width="103.96" height="27.9" rx="3.5" fill="#ae5825" stroke="#1e0a03" stroke-width="1.0"/><svg x="576.55" y="731.60" width="103.56" height="27.9" viewBox="0 0 103.56 27.9"><rect x="21.07" y="21.7" width="82.69" height="2" fill="#ffc9a2"/><text x="5.60" y="13.40" font-size="11.1" fill="#ffe9d8" text-anchor="start" stroke="#ffe9d8" stroke-width=".22">Intro</text></svg><rect x="681.86" y="791.60" width="25.14" height="27.9" rx="3.5" fill="#515254" fill-opacity=".9" stroke="#161616" stroke-width="1.0"/><svg x="681.86" y="791.60" width="24.74" height="27.9" viewBox="0 0 24.74 27.9"><circle cx="9.9" cy="10.3" r="4.6" fill="#8fc0ff"/><rect x=".4" y="21.7" width="24.54" height="2" fill="#a4a4a4"/></svg><rect x="1141.25" y="791.60" width="22.43" height="27.9" rx="3.5" fill="#365f90" stroke="#070e1a" stroke-width="1.0"/><svg x="1141.25" y="791.60" width="22.03" height="27.9" viewBox="0 0 22.03 27.9"><rect x=".5" y="22.0" width="19.43" height="1" fill="#a9cef6"/><text x="5.60" y="13.40" font-size="11.1" fill="#e8f1ff" text-anchor="start" stroke="#e8f1ff" stroke-width=".22">A</text></svg><rect x="1754.12" y="791.60" width="26.18" height="27.9" rx="3.5" fill="#515254" fill-opacity=".9" stroke="#161616" stroke-width="1.0"/><svg x="1754.12" y="791.60" width="25.78" height="27.9" viewBox="0 0 25.78 27.9"><circle cx="9.9" cy="10.3" r="4.6" fill="#8fc0ff"/><rect x=".4" y="21.7" width="25.58" height="2" fill="#a4a4a4"/></svg><rect x="1138.54" y="821.60" width="37.86" height="27.9" rx="3.5" fill="#365f90" stroke="#070e1a" stroke-width="1.0"/><svg x="1138.54" y="821.60" width="37.46" height="27.9" viewBox="0 0 37.46 27.9"><rect x=".5" y="22.0" width="34.86" height="1" fill="#a9cef6"/><path d="M9.4 22.5 l1.2 -1.3 l1.2 1.3" stroke="#a9cef6" stroke-width=".8" fill="none"/><text x="5.60" y="13.40" font-size="11.1" fill="#e8f1ff" text-anchor="start" stroke="#e8f1ff" stroke-width=".22">Rever</text></svg><rect x="1323.09" y="821.60" width="22.64" height="27.9" rx="3.5" fill="#515254" fill-opacity=".9" stroke="#161616" stroke-width="1.0"/><svg x="1323.09" y="821.60" width="22.24" height="27.9" viewBox="0 0 22.24 27.9"><circle cx="9.9" cy="10.3" r="4.6" fill="#8fc0ff"/><rect x=".4" y="21.7" width="22.04" height="2" fill="#a4a4a4"/></svg><rect x="1744.32" y="821.60" width="43.49" height="27.9" rx="3.5" fill="#365f90" stroke="#070e1a" stroke-width="1.0"/><svg x="1744.32" y="821.60" width="43.09" height="27.9" viewBox="0 0 43.09 27.9"><rect x=".5" y="22.0" width="40.49" height="1" fill="#a9cef6"/><path d="M11.8 22.5 l1.2 -1.3 l1.2 1.3" stroke="#a9cef6" stroke-width=".8" fill="none"/><text x="5.60" y="13.40" font-size="11.1" fill="#e8f1ff" text-anchor="start" stroke="#e8f1ff" stroke-width=".22">Reverb</text></svg><rect x="659.96" y="911.60" width="20.55" height="27.9" rx="3.5" fill="#365f90" stroke="#070e1a" stroke-width="1.0"/><svg x="659.96" y="911.60" width="20.15" height="27.9" viewBox="0 0 20.15 27.9"><rect x=".4" y="21.7" width="19.95" height="2" fill="#a9cef6"/><text x="5.60" y="13.40" font-size="11.1" fill="#e8f1ff" text-anchor="start" stroke="#e8f1ff" stroke-width=".22">Sl</text></svg><rect x="743.37" y="911.60" width="20.55" height="27.9" rx="3.5" fill="#365f90" stroke="#070e1a" stroke-width="1.0"/><svg x="743.37" y="911.60" width="20.15" height="27.9" viewBox="0 0 20.15 27.9"><rect x=".4" y="21.7" width="19.95" height="2" fill="#a9cef6"/><text x="5.60" y="13.40" font-size="11.1" fill="#e8f1ff" text-anchor="start" stroke="#e8f1ff" stroke-width=".22">Sl</text></svg><rect x="868.49" y="911.60" width="20.55" height="27.9" rx="3.5" fill="#365f90" stroke="#070e1a" stroke-width="1.0"/><svg x="868.49" y="911.60" width="20.15" height="27.9" viewBox="0 0 20.15 27.9"><rect x=".4" y="21.7" width="19.95" height="2" fill="#a9cef6"/><text x="5.60" y="13.40" font-size="11.1" fill="#e8f1ff" text-anchor="start" stroke="#e8f1ff" stroke-width=".22">Sl</text></svg><rect x="1035.32" y="911.60" width="20.55" height="27.9" rx="3.5" fill="#365f90" stroke="#070e1a" stroke-width="1.0"/><svg x="1035.32" y="911.60" width="20.15" height="27.9" viewBox="0 0 20.15 27.9"><rect x=".4" y="21.7" width="19.95" height="2" fill="#a9cef6"/><text x="5.60" y="13.40" font-size="11.1" fill="#e8f1ff" text-anchor="start" stroke="#e8f1ff" stroke-width=".22">Sl</text></svg><rect x="1389.82" y="911.60" width="20.55" height="27.9" rx="3.5" fill="#365f90" stroke="#070e1a" stroke-width="1.0"/><svg x="1389.82" y="911.60" width="20.15" height="27.9" viewBox="0 0 20.15 27.9"><rect x=".4" y="21.7" width="19.95" height="2" fill="#a9cef6"/><text x="5.60" y="13.40" font-size="11.1" fill="#e8f1ff" text-anchor="start" stroke="#e8f1ff" stroke-width=".22">Sl</text></svg><rect x="1556.64" y="911.60" width="20.55" height="27.9" rx="3.5" fill="#365f90" stroke="#070e1a" stroke-width="1.0"/><svg x="1556.64" y="911.60" width="20.15" height="27.9" viewBox="0 0 20.15 27.9"><rect x=".4" y="21.7" width="19.95" height="2" fill="#a9cef6"/><text x="5.60" y="13.40" font-size="11.1" fill="#e8f1ff" text-anchor="start" stroke="#e8f1ff" stroke-width=".22">Sl</text></svg><rect x="1222.99" y="911.60" width="41.41" height="27.9" rx="3.5" fill="#365f90" stroke="#070e1a" stroke-width="1.0"/><svg x="1222.99" y="911.60" width="41.01" height="27.9" viewBox="0 0 41.01 27.9"><rect x="13.87" y="21.7" width="11.83" height="2" fill="#a9cef6"/><text x="5.60" y="13.40" font-size="11.1" fill="#e8f1ff" text-anchor="start" stroke="#e8f1ff" stroke-width=".22">Slow</text></svg><rect x="757.35" y="941.60" width="31.61" height="27.9" rx="3.5" fill="#365f90" stroke="#070e1a" stroke-width="1.0"/><svg x="757.35" y="941.60" width="31.21" height="27.9" viewBox="0 0 31.21 27.9"><rect x=".5" y="22.0" width="28.61" height="1" fill="#a9cef6"/><rect x="5.7" y="21.2" width="4.6" height="2.6" rx=".8" fill="#a9cef6"/><text x="5.60" y="13.40" font-size="11.1" fill="#e8f1ff" text-anchor="start" stroke="#e8f1ff" stroke-width=".22">Soft</text></svg><rect x="1821.47" y="941.60" width="32.02" height="27.9" rx="3.5" fill="#365f90" stroke="#070e1a" stroke-width="1.0"/><svg x="1821.47" y="941.60" width="31.62" height="27.9" viewBox="0 0 31.62 27.9"><rect x=".5" y="22.0" width="29.02" height="1" fill="#a9cef6"/><rect x="4.8" y="21.2" width="4.6" height="2.6" rx=".8" fill="#a9cef6"/><text x="5.60" y="13.40" font-size="11.1" fill="#e8f1ff" text-anchor="start" stroke="#e8f1ff" stroke-width=".22">Soft</text></svg></g></svg>
</div>
</body></html>
